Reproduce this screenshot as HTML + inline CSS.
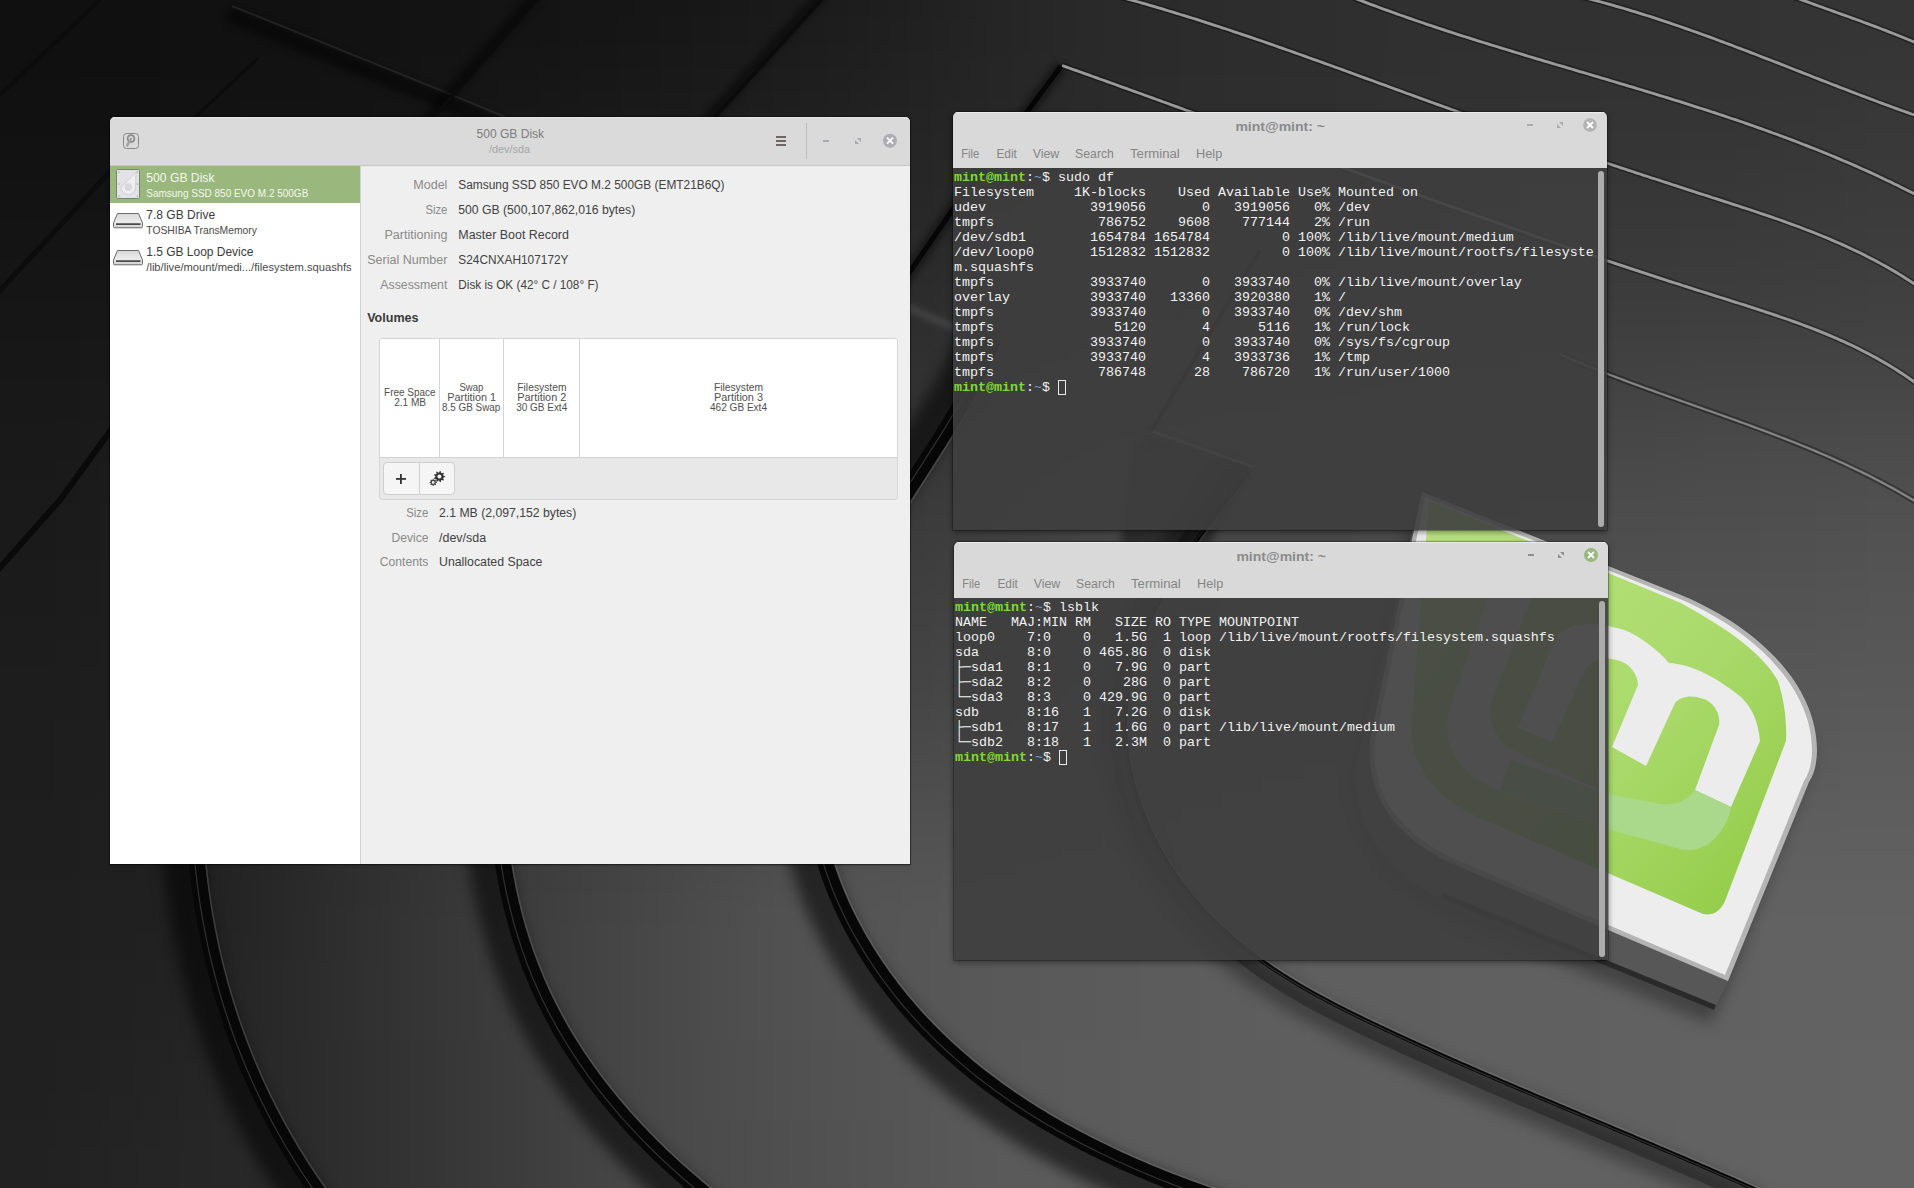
<!DOCTYPE html>
<html><head><meta charset="utf-8">
<style>
*{margin:0;padding:0;box-sizing:border-box}
html,body{width:1914px;height:1188px;overflow:hidden;background:#2a2a2a}
body{position:relative;font-family:"Liberation Sans",sans-serif}
svg{position:absolute;left:0;top:0}
.r{position:absolute}
#disks{left:110px;top:117px;width:800px;height:747px;background:#efefef;border-radius:5px 5px 0 0;overflow:hidden;box-shadow:0 0 0 1px rgba(0,0,0,.35),0 1px 3px rgba(0,0,0,.35)}
#disks .tb{left:0;top:0;width:800px;height:49px;background:#dadada;border-bottom:1px solid #c4c4c4;border-top:1px solid #e6e6e6}
#disks .side{left:0;top:49px;width:251px;height:698px;background:#fff;border-right:1px solid #d2d2d2}
#disks .sel{left:0;top:49px;width:250px;height:37px;background:#9ab87d}
#disks .vol{left:269px;top:221px;width:519px;height:162px;border:1px solid #d6d6d6;border-radius:3px;background:#e8e8e8;overflow:hidden}
#disks .volw{left:0;top:0;width:517px;height:119px;background:#fff;border-bottom:1px solid #d2d2d2}
.sep{position:absolute;top:0;width:1px;height:119px;background:#d4d4d4}
#disks .btns{left:273px;top:345px;width:72px;height:33px;border:1px solid #cfcfcf;border-radius:4px;background:#f5f5f5}
.term{position:absolute;width:654px;height:418px;border-radius:5px 5px 0 0;overflow:hidden;box-shadow:0 0 0 1px rgba(0,0,0,.25),0 2px 6px rgba(0,0,0,.45)}
.term .hd{position:absolute;left:0;top:0;width:654px;height:56px;background:#d9d9d9;border-top:1px solid #ececec}
.term .bd{position:absolute;left:0;top:56px;width:654px;height:362px;background:rgba(63,63,63,.91)}
.term pre{position:absolute;left:1px;top:58px;font-family:"Liberation Mono",monospace;font-size:13.333px;line-height:15px;color:#f2f2f2}
.g{color:#80d83a;font-weight:bold}
.bl{color:#729fcf}
.cur{outline:1px solid #eaeaea;outline-offset:-1px}
.sb{position:absolute;left:645px;top:59px;width:6px;height:356px;border-radius:3px;background:#acacac}
</style></head><body>
<svg width="1914" height="1188" viewBox="0 0 1914 1188">
<defs>
<filter id="blur" color-interpolation-filters="sRGB" filterUnits="userSpaceOnUse" x="-300" y="-300" width="2600" height="1800"><feGaussianBlur stdDeviation="40"/></filter>
<filter id="sh8" color-interpolation-filters="sRGB" filterUnits="userSpaceOnUse" x="-300" y="-300" width="2600" height="1800"><feGaussianBlur stdDeviation="7"/></filter>
<filter id="sh3" color-interpolation-filters="sRGB" filterUnits="userSpaceOnUse" x="-300" y="-300" width="2600" height="1800"><feGaussianBlur stdDeviation="3"/></filter>
<linearGradient id="lg1" x1="0" y1="0" x2="1" y2="1"><stop offset="0" stop-color="#bde583"/><stop offset="0.6" stop-color="#a9d96a"/><stop offset="1" stop-color="#8fca42"/></linearGradient>
</defs>
<g filter="url(#blur)"><rect x="-160" y="-160" width="81" height="81" fill="rgb(15,15,15)"/><rect x="-80" y="-160" width="81" height="81" fill="rgb(15,15,15)"/><rect x="0" y="-160" width="81" height="81" fill="rgb(15,15,15)"/><rect x="80" y="-160" width="81" height="81" fill="rgb(16,16,16)"/><rect x="160" y="-160" width="81" height="81" fill="rgb(16,16,16)"/><rect x="240" y="-160" width="81" height="81" fill="rgb(16,16,16)"/><rect x="320" y="-160" width="81" height="81" fill="rgb(17,17,17)"/><rect x="400" y="-160" width="81" height="81" fill="rgb(18,18,18)"/><rect x="480" y="-160" width="81" height="81" fill="rgb(19,19,19)"/><rect x="560" y="-160" width="81" height="81" fill="rgb(20,20,20)"/><rect x="640" y="-160" width="81" height="81" fill="rgb(21,21,21)"/><rect x="720" y="-160" width="81" height="81" fill="rgb(24,24,24)"/><rect x="800" y="-160" width="81" height="81" fill="rgb(27,27,27)"/><rect x="880" y="-160" width="81" height="81" fill="rgb(31,31,31)"/><rect x="960" y="-160" width="81" height="81" fill="rgb(36,36,36)"/><rect x="1040" y="-160" width="81" height="81" fill="rgb(41,41,41)"/><rect x="1120" y="-160" width="81" height="81" fill="rgb(43,43,43)"/><rect x="1200" y="-160" width="81" height="81" fill="rgb(44,44,44)"/><rect x="1280" y="-160" width="81" height="81" fill="rgb(46,46,46)"/><rect x="1360" y="-160" width="81" height="81" fill="rgb(47,47,47)"/><rect x="1440" y="-160" width="81" height="81" fill="rgb(48,48,48)"/><rect x="1520" y="-160" width="81" height="81" fill="rgb(49,49,49)"/><rect x="1600" y="-160" width="81" height="81" fill="rgb(49,49,49)"/><rect x="1680" y="-160" width="81" height="81" fill="rgb(50,50,50)"/><rect x="1760" y="-160" width="81" height="81" fill="rgb(51,51,51)"/><rect x="1840" y="-160" width="81" height="81" fill="rgb(52,52,52)"/><rect x="1920" y="-160" width="81" height="81" fill="rgb(52,52,52)"/><rect x="2000" y="-160" width="81" height="81" fill="rgb(52,52,52)"/><rect x="-160" y="-80" width="81" height="81" fill="rgb(15,15,15)"/><rect x="-80" y="-80" width="81" height="81" fill="rgb(15,15,15)"/><rect x="0" y="-80" width="81" height="81" fill="rgb(15,15,15)"/><rect x="80" y="-80" width="81" height="81" fill="rgb(16,16,16)"/><rect x="160" y="-80" width="81" height="81" fill="rgb(16,16,16)"/><rect x="240" y="-80" width="81" height="81" fill="rgb(16,16,16)"/><rect x="320" y="-80" width="81" height="81" fill="rgb(17,17,17)"/><rect x="400" y="-80" width="81" height="81" fill="rgb(18,18,18)"/><rect x="480" y="-80" width="81" height="81" fill="rgb(19,19,19)"/><rect x="560" y="-80" width="81" height="81" fill="rgb(20,20,20)"/><rect x="640" y="-80" width="81" height="81" fill="rgb(21,21,21)"/><rect x="720" y="-80" width="81" height="81" fill="rgb(24,24,24)"/><rect x="800" y="-80" width="81" height="81" fill="rgb(27,27,27)"/><rect x="880" y="-80" width="81" height="81" fill="rgb(31,31,31)"/><rect x="960" y="-80" width="81" height="81" fill="rgb(36,36,36)"/><rect x="1040" y="-80" width="81" height="81" fill="rgb(41,41,41)"/><rect x="1120" y="-80" width="81" height="81" fill="rgb(43,43,43)"/><rect x="1200" y="-80" width="81" height="81" fill="rgb(44,44,44)"/><rect x="1280" y="-80" width="81" height="81" fill="rgb(46,46,46)"/><rect x="1360" y="-80" width="81" height="81" fill="rgb(47,47,47)"/><rect x="1440" y="-80" width="81" height="81" fill="rgb(48,48,48)"/><rect x="1520" y="-80" width="81" height="81" fill="rgb(49,49,49)"/><rect x="1600" y="-80" width="81" height="81" fill="rgb(49,49,49)"/><rect x="1680" y="-80" width="81" height="81" fill="rgb(50,50,50)"/><rect x="1760" y="-80" width="81" height="81" fill="rgb(51,51,51)"/><rect x="1840" y="-80" width="81" height="81" fill="rgb(52,52,52)"/><rect x="1920" y="-80" width="81" height="81" fill="rgb(52,52,52)"/><rect x="2000" y="-80" width="81" height="81" fill="rgb(52,52,52)"/><rect x="-160" y="0" width="81" height="81" fill="rgb(16,16,16)"/><rect x="-80" y="0" width="81" height="81" fill="rgb(16,16,16)"/><rect x="0" y="0" width="81" height="81" fill="rgb(16,16,16)"/><rect x="80" y="0" width="81" height="81" fill="rgb(16,16,16)"/><rect x="160" y="0" width="81" height="81" fill="rgb(17,17,17)"/><rect x="240" y="0" width="81" height="81" fill="rgb(17,17,17)"/><rect x="320" y="0" width="81" height="81" fill="rgb(18,18,18)"/><rect x="400" y="0" width="81" height="81" fill="rgb(19,19,19)"/><rect x="480" y="0" width="81" height="81" fill="rgb(20,20,20)"/><rect x="560" y="0" width="81" height="81" fill="rgb(21,21,21)"/><rect x="640" y="0" width="81" height="81" fill="rgb(23,23,23)"/><rect x="720" y="0" width="81" height="81" fill="rgb(26,26,26)"/><rect x="800" y="0" width="81" height="81" fill="rgb(29,29,29)"/><rect x="880" y="0" width="81" height="81" fill="rgb(33,33,33)"/><rect x="960" y="0" width="81" height="81" fill="rgb(37,37,37)"/><rect x="1040" y="0" width="81" height="81" fill="rgb(41,41,41)"/><rect x="1120" y="0" width="81" height="81" fill="rgb(43,43,43)"/><rect x="1200" y="0" width="81" height="81" fill="rgb(45,45,45)"/><rect x="1280" y="0" width="81" height="81" fill="rgb(46,46,46)"/><rect x="1360" y="0" width="81" height="81" fill="rgb(48,48,48)"/><rect x="1440" y="0" width="81" height="81" fill="rgb(48,48,48)"/><rect x="1520" y="0" width="81" height="81" fill="rgb(49,49,49)"/><rect x="1600" y="0" width="81" height="81" fill="rgb(50,50,50)"/><rect x="1680" y="0" width="81" height="81" fill="rgb(51,51,51)"/><rect x="1760" y="0" width="81" height="81" fill="rgb(52,52,52)"/><rect x="1840" y="0" width="81" height="81" fill="rgb(53,53,53)"/><rect x="1920" y="0" width="81" height="81" fill="rgb(53,53,53)"/><rect x="2000" y="0" width="81" height="81" fill="rgb(53,53,53)"/><rect x="-160" y="80" width="81" height="81" fill="rgb(17,17,17)"/><rect x="-80" y="80" width="81" height="81" fill="rgb(17,17,17)"/><rect x="0" y="80" width="81" height="81" fill="rgb(17,17,17)"/><rect x="80" y="80" width="81" height="81" fill="rgb(17,17,17)"/><rect x="160" y="80" width="81" height="81" fill="rgb(18,18,18)"/><rect x="240" y="80" width="81" height="81" fill="rgb(19,19,19)"/><rect x="320" y="80" width="81" height="81" fill="rgb(19,19,19)"/><rect x="400" y="80" width="81" height="81" fill="rgb(21,21,21)"/><rect x="480" y="80" width="81" height="81" fill="rgb(23,23,23)"/><rect x="560" y="80" width="81" height="81" fill="rgb(25,25,25)"/><rect x="640" y="80" width="81" height="81" fill="rgb(27,27,27)"/><rect x="720" y="80" width="81" height="81" fill="rgb(30,30,30)"/><rect x="800" y="80" width="81" height="81" fill="rgb(33,33,33)"/><rect x="880" y="80" width="81" height="81" fill="rgb(36,36,36)"/><rect x="960" y="80" width="81" height="81" fill="rgb(39,39,39)"/><rect x="1040" y="80" width="81" height="81" fill="rgb(42,42,42)"/><rect x="1120" y="80" width="81" height="81" fill="rgb(44,44,44)"/><rect x="1200" y="80" width="81" height="81" fill="rgb(46,46,46)"/><rect x="1280" y="80" width="81" height="81" fill="rgb(47,47,47)"/><rect x="1360" y="80" width="81" height="81" fill="rgb(49,49,49)"/><rect x="1440" y="80" width="81" height="81" fill="rgb(50,50,50)"/><rect x="1520" y="80" width="81" height="81" fill="rgb(51,51,51)"/><rect x="1600" y="80" width="81" height="81" fill="rgb(52,52,52)"/><rect x="1680" y="80" width="81" height="81" fill="rgb(53,53,53)"/><rect x="1760" y="80" width="81" height="81" fill="rgb(54,54,54)"/><rect x="1840" y="80" width="81" height="81" fill="rgb(56,56,56)"/><rect x="1920" y="80" width="81" height="81" fill="rgb(56,56,56)"/><rect x="2000" y="80" width="81" height="81" fill="rgb(56,56,56)"/><rect x="-160" y="160" width="81" height="81" fill="rgb(18,18,18)"/><rect x="-80" y="160" width="81" height="81" fill="rgb(18,18,18)"/><rect x="0" y="160" width="81" height="81" fill="rgb(19,19,19)"/><rect x="80" y="160" width="81" height="81" fill="rgb(19,19,19)"/><rect x="160" y="160" width="81" height="81" fill="rgb(20,20,20)"/><rect x="240" y="160" width="81" height="81" fill="rgb(21,21,21)"/><rect x="320" y="160" width="81" height="81" fill="rgb(22,22,22)"/><rect x="400" y="160" width="81" height="81" fill="rgb(23,23,23)"/><rect x="480" y="160" width="81" height="81" fill="rgb(26,26,26)"/><rect x="560" y="160" width="81" height="81" fill="rgb(29,29,29)"/><rect x="640" y="160" width="81" height="81" fill="rgb(31,31,31)"/><rect x="720" y="160" width="81" height="81" fill="rgb(34,34,34)"/><rect x="800" y="160" width="81" height="81" fill="rgb(36,36,36)"/><rect x="880" y="160" width="81" height="81" fill="rgb(39,39,39)"/><rect x="960" y="160" width="81" height="81" fill="rgb(42,42,42)"/><rect x="1040" y="160" width="81" height="81" fill="rgb(44,44,44)"/><rect x="1120" y="160" width="81" height="81" fill="rgb(47,47,47)"/><rect x="1200" y="160" width="81" height="81" fill="rgb(49,49,49)"/><rect x="1280" y="160" width="81" height="81" fill="rgb(50,50,50)"/><rect x="1360" y="160" width="81" height="81" fill="rgb(52,52,52)"/><rect x="1440" y="160" width="81" height="81" fill="rgb(53,53,53)"/><rect x="1520" y="160" width="81" height="81" fill="rgb(54,54,54)"/><rect x="1600" y="160" width="81" height="81" fill="rgb(55,55,55)"/><rect x="1680" y="160" width="81" height="81" fill="rgb(56,56,56)"/><rect x="1760" y="160" width="81" height="81" fill="rgb(58,58,58)"/><rect x="1840" y="160" width="81" height="81" fill="rgb(59,59,59)"/><rect x="1920" y="160" width="81" height="81" fill="rgb(59,59,59)"/><rect x="2000" y="160" width="81" height="81" fill="rgb(59,59,59)"/><rect x="-160" y="240" width="81" height="81" fill="rgb(20,20,20)"/><rect x="-80" y="240" width="81" height="81" fill="rgb(20,20,20)"/><rect x="0" y="240" width="81" height="81" fill="rgb(21,21,21)"/><rect x="80" y="240" width="81" height="81" fill="rgb(22,22,22)"/><rect x="160" y="240" width="81" height="81" fill="rgb(23,23,23)"/><rect x="240" y="240" width="81" height="81" fill="rgb(24,24,24)"/><rect x="320" y="240" width="81" height="81" fill="rgb(25,25,25)"/><rect x="400" y="240" width="81" height="81" fill="rgb(27,27,27)"/><rect x="480" y="240" width="81" height="81" fill="rgb(29,29,29)"/><rect x="560" y="240" width="81" height="81" fill="rgb(32,32,32)"/><rect x="640" y="240" width="81" height="81" fill="rgb(35,35,35)"/><rect x="720" y="240" width="81" height="81" fill="rgb(37,37,37)"/><rect x="800" y="240" width="81" height="81" fill="rgb(40,40,40)"/><rect x="880" y="240" width="81" height="81" fill="rgb(43,43,43)"/><rect x="960" y="240" width="81" height="81" fill="rgb(45,45,45)"/><rect x="1040" y="240" width="81" height="81" fill="rgb(48,48,48)"/><rect x="1120" y="240" width="81" height="81" fill="rgb(50,50,50)"/><rect x="1200" y="240" width="81" height="81" fill="rgb(52,52,52)"/><rect x="1280" y="240" width="81" height="81" fill="rgb(54,54,54)"/><rect x="1360" y="240" width="81" height="81" fill="rgb(55,55,55)"/><rect x="1440" y="240" width="81" height="81" fill="rgb(57,57,57)"/><rect x="1520" y="240" width="81" height="81" fill="rgb(58,58,58)"/><rect x="1600" y="240" width="81" height="81" fill="rgb(59,59,59)"/><rect x="1680" y="240" width="81" height="81" fill="rgb(60,60,60)"/><rect x="1760" y="240" width="81" height="81" fill="rgb(61,61,61)"/><rect x="1840" y="240" width="81" height="81" fill="rgb(63,63,63)"/><rect x="1920" y="240" width="81" height="81" fill="rgb(63,63,63)"/><rect x="2000" y="240" width="81" height="81" fill="rgb(63,63,63)"/><rect x="-160" y="320" width="81" height="81" fill="rgb(22,22,22)"/><rect x="-80" y="320" width="81" height="81" fill="rgb(22,22,22)"/><rect x="0" y="320" width="81" height="81" fill="rgb(23,23,23)"/><rect x="80" y="320" width="81" height="81" fill="rgb(24,24,24)"/><rect x="160" y="320" width="81" height="81" fill="rgb(25,25,25)"/><rect x="240" y="320" width="81" height="81" fill="rgb(27,27,27)"/><rect x="320" y="320" width="81" height="81" fill="rgb(28,28,28)"/><rect x="400" y="320" width="81" height="81" fill="rgb(30,30,30)"/><rect x="480" y="320" width="81" height="81" fill="rgb(33,33,33)"/><rect x="560" y="320" width="81" height="81" fill="rgb(36,36,36)"/><rect x="640" y="320" width="81" height="81" fill="rgb(39,39,39)"/><rect x="720" y="320" width="81" height="81" fill="rgb(42,42,42)"/><rect x="800" y="320" width="81" height="81" fill="rgb(45,45,45)"/><rect x="880" y="320" width="81" height="81" fill="rgb(48,48,48)"/><rect x="960" y="320" width="81" height="81" fill="rgb(51,51,51)"/><rect x="1040" y="320" width="81" height="81" fill="rgb(54,54,54)"/><rect x="1120" y="320" width="81" height="81" fill="rgb(57,57,57)"/><rect x="1200" y="320" width="81" height="81" fill="rgb(59,59,59)"/><rect x="1280" y="320" width="81" height="81" fill="rgb(60,60,60)"/><rect x="1360" y="320" width="81" height="81" fill="rgb(62,62,62)"/><rect x="1440" y="320" width="81" height="81" fill="rgb(63,63,63)"/><rect x="1520" y="320" width="81" height="81" fill="rgb(64,64,64)"/><rect x="1600" y="320" width="81" height="81" fill="rgb(65,65,65)"/><rect x="1680" y="320" width="81" height="81" fill="rgb(66,66,66)"/><rect x="1760" y="320" width="81" height="81" fill="rgb(67,67,67)"/><rect x="1840" y="320" width="81" height="81" fill="rgb(68,68,68)"/><rect x="1920" y="320" width="81" height="81" fill="rgb(69,69,69)"/><rect x="2000" y="320" width="81" height="81" fill="rgb(69,69,69)"/><rect x="-160" y="400" width="81" height="81" fill="rgb(24,24,24)"/><rect x="-80" y="400" width="81" height="81" fill="rgb(24,24,24)"/><rect x="0" y="400" width="81" height="81" fill="rgb(25,25,25)"/><rect x="80" y="400" width="81" height="81" fill="rgb(26,26,26)"/><rect x="160" y="400" width="81" height="81" fill="rgb(28,28,28)"/><rect x="240" y="400" width="81" height="81" fill="rgb(29,29,29)"/><rect x="320" y="400" width="81" height="81" fill="rgb(31,31,31)"/><rect x="400" y="400" width="81" height="81" fill="rgb(33,33,33)"/><rect x="480" y="400" width="81" height="81" fill="rgb(37,37,37)"/><rect x="560" y="400" width="81" height="81" fill="rgb(40,40,40)"/><rect x="640" y="400" width="81" height="81" fill="rgb(43,43,43)"/><rect x="720" y="400" width="81" height="81" fill="rgb(47,47,47)"/><rect x="800" y="400" width="81" height="81" fill="rgb(50,50,50)"/><rect x="880" y="400" width="81" height="81" fill="rgb(53,53,53)"/><rect x="960" y="400" width="81" height="81" fill="rgb(58,58,58)"/><rect x="1040" y="400" width="81" height="81" fill="rgb(63,63,63)"/><rect x="1120" y="400" width="81" height="81" fill="rgb(65,65,65)"/><rect x="1200" y="400" width="81" height="81" fill="rgb(66,66,66)"/><rect x="1280" y="400" width="81" height="81" fill="rgb(67,67,67)"/><rect x="1360" y="400" width="81" height="81" fill="rgb(68,68,68)"/><rect x="1440" y="400" width="81" height="81" fill="rgb(69,69,69)"/><rect x="1520" y="400" width="81" height="81" fill="rgb(70,70,70)"/><rect x="1600" y="400" width="81" height="81" fill="rgb(71,71,71)"/><rect x="1680" y="400" width="81" height="81" fill="rgb(73,73,73)"/><rect x="1760" y="400" width="81" height="81" fill="rgb(74,74,74)"/><rect x="1840" y="400" width="81" height="81" fill="rgb(75,75,75)"/><rect x="1920" y="400" width="81" height="81" fill="rgb(75,75,75)"/><rect x="2000" y="400" width="81" height="81" fill="rgb(75,75,75)"/><rect x="-160" y="480" width="81" height="81" fill="rgb(25,25,25)"/><rect x="-80" y="480" width="81" height="81" fill="rgb(25,25,25)"/><rect x="0" y="480" width="81" height="81" fill="rgb(26,26,26)"/><rect x="80" y="480" width="81" height="81" fill="rgb(28,28,28)"/><rect x="160" y="480" width="81" height="81" fill="rgb(30,30,30)"/><rect x="240" y="480" width="81" height="81" fill="rgb(32,32,32)"/><rect x="320" y="480" width="81" height="81" fill="rgb(34,34,34)"/><rect x="400" y="480" width="81" height="81" fill="rgb(37,37,37)"/><rect x="480" y="480" width="81" height="81" fill="rgb(41,41,41)"/><rect x="560" y="480" width="81" height="81" fill="rgb(44,44,44)"/><rect x="640" y="480" width="81" height="81" fill="rgb(48,48,48)"/><rect x="720" y="480" width="81" height="81" fill="rgb(51,51,51)"/><rect x="800" y="480" width="81" height="81" fill="rgb(55,55,55)"/><rect x="880" y="480" width="81" height="81" fill="rgb(59,59,59)"/><rect x="960" y="480" width="81" height="81" fill="rgb(64,64,64)"/><rect x="1040" y="480" width="81" height="81" fill="rgb(69,69,69)"/><rect x="1120" y="480" width="81" height="81" fill="rgb(71,71,71)"/><rect x="1200" y="480" width="81" height="81" fill="rgb(72,72,72)"/><rect x="1280" y="480" width="81" height="81" fill="rgb(73,73,73)"/><rect x="1360" y="480" width="81" height="81" fill="rgb(74,74,74)"/><rect x="1440" y="480" width="81" height="81" fill="rgb(75,75,75)"/><rect x="1520" y="480" width="81" height="81" fill="rgb(76,76,76)"/><rect x="1600" y="480" width="81" height="81" fill="rgb(77,77,77)"/><rect x="1680" y="480" width="81" height="81" fill="rgb(78,78,78)"/><rect x="1760" y="480" width="81" height="81" fill="rgb(79,79,79)"/><rect x="1840" y="480" width="81" height="81" fill="rgb(81,81,81)"/><rect x="1920" y="480" width="81" height="81" fill="rgb(81,81,81)"/><rect x="2000" y="480" width="81" height="81" fill="rgb(81,81,81)"/><rect x="-160" y="560" width="81" height="81" fill="rgb(26,26,26)"/><rect x="-80" y="560" width="81" height="81" fill="rgb(26,26,26)"/><rect x="0" y="560" width="81" height="81" fill="rgb(27,27,27)"/><rect x="80" y="560" width="81" height="81" fill="rgb(29,29,29)"/><rect x="160" y="560" width="81" height="81" fill="rgb(31,31,31)"/><rect x="240" y="560" width="81" height="81" fill="rgb(34,34,34)"/><rect x="320" y="560" width="81" height="81" fill="rgb(37,37,37)"/><rect x="400" y="560" width="81" height="81" fill="rgb(41,41,41)"/><rect x="480" y="560" width="81" height="81" fill="rgb(45,45,45)"/><rect x="560" y="560" width="81" height="81" fill="rgb(49,49,49)"/><rect x="640" y="560" width="81" height="81" fill="rgb(53,53,53)"/><rect x="720" y="560" width="81" height="81" fill="rgb(56,56,56)"/><rect x="800" y="560" width="81" height="81" fill="rgb(60,60,60)"/><rect x="880" y="560" width="81" height="81" fill="rgb(64,64,64)"/><rect x="960" y="560" width="81" height="81" fill="rgb(67,67,67)"/><rect x="1040" y="560" width="81" height="81" fill="rgb(71,71,71)"/><rect x="1120" y="560" width="81" height="81" fill="rgb(73,73,73)"/><rect x="1200" y="560" width="81" height="81" fill="rgb(75,75,75)"/><rect x="1280" y="560" width="81" height="81" fill="rgb(76,76,76)"/><rect x="1360" y="560" width="81" height="81" fill="rgb(77,77,77)"/><rect x="1440" y="560" width="81" height="81" fill="rgb(79,79,79)"/><rect x="1520" y="560" width="81" height="81" fill="rgb(80,80,80)"/><rect x="1600" y="560" width="81" height="81" fill="rgb(81,81,81)"/><rect x="1680" y="560" width="81" height="81" fill="rgb(82,82,82)"/><rect x="1760" y="560" width="81" height="81" fill="rgb(83,83,83)"/><rect x="1840" y="560" width="81" height="81" fill="rgb(85,85,85)"/><rect x="1920" y="560" width="81" height="81" fill="rgb(85,85,85)"/><rect x="2000" y="560" width="81" height="81" fill="rgb(85,85,85)"/><rect x="-160" y="640" width="81" height="81" fill="rgb(28,28,28)"/><rect x="-80" y="640" width="81" height="81" fill="rgb(28,28,28)"/><rect x="0" y="640" width="81" height="81" fill="rgb(29,29,29)"/><rect x="80" y="640" width="81" height="81" fill="rgb(30,30,30)"/><rect x="160" y="640" width="81" height="81" fill="rgb(32,32,32)"/><rect x="240" y="640" width="81" height="81" fill="rgb(36,36,36)"/><rect x="320" y="640" width="81" height="81" fill="rgb(41,41,41)"/><rect x="400" y="640" width="81" height="81" fill="rgb(45,45,45)"/><rect x="480" y="640" width="81" height="81" fill="rgb(50,50,50)"/><rect x="560" y="640" width="81" height="81" fill="rgb(53,53,53)"/><rect x="640" y="640" width="81" height="81" fill="rgb(57,57,57)"/><rect x="720" y="640" width="81" height="81" fill="rgb(61,61,61)"/><rect x="800" y="640" width="81" height="81" fill="rgb(65,65,65)"/><rect x="880" y="640" width="81" height="81" fill="rgb(68,68,68)"/><rect x="960" y="640" width="81" height="81" fill="rgb(71,71,71)"/><rect x="1040" y="640" width="81" height="81" fill="rgb(74,74,74)"/><rect x="1120" y="640" width="81" height="81" fill="rgb(76,76,76)"/><rect x="1200" y="640" width="81" height="81" fill="rgb(78,78,78)"/><rect x="1280" y="640" width="81" height="81" fill="rgb(80,80,80)"/><rect x="1360" y="640" width="81" height="81" fill="rgb(81,81,81)"/><rect x="1440" y="640" width="81" height="81" fill="rgb(82,82,82)"/><rect x="1520" y="640" width="81" height="81" fill="rgb(83,83,83)"/><rect x="1600" y="640" width="81" height="81" fill="rgb(85,85,85)"/><rect x="1680" y="640" width="81" height="81" fill="rgb(86,86,86)"/><rect x="1760" y="640" width="81" height="81" fill="rgb(87,87,87)"/><rect x="1840" y="640" width="81" height="81" fill="rgb(88,88,88)"/><rect x="1920" y="640" width="81" height="81" fill="rgb(89,89,89)"/><rect x="2000" y="640" width="81" height="81" fill="rgb(89,89,89)"/><rect x="-160" y="720" width="81" height="81" fill="rgb(29,29,29)"/><rect x="-80" y="720" width="81" height="81" fill="rgb(29,29,29)"/><rect x="0" y="720" width="81" height="81" fill="rgb(29,29,29)"/><rect x="80" y="720" width="81" height="81" fill="rgb(31,31,31)"/><rect x="160" y="720" width="81" height="81" fill="rgb(32,32,32)"/><rect x="240" y="720" width="81" height="81" fill="rgb(38,38,38)"/><rect x="320" y="720" width="81" height="81" fill="rgb(43,43,43)"/><rect x="400" y="720" width="81" height="81" fill="rgb(49,49,49)"/><rect x="480" y="720" width="81" height="81" fill="rgb(54,54,54)"/><rect x="560" y="720" width="81" height="81" fill="rgb(59,59,59)"/><rect x="640" y="720" width="81" height="81" fill="rgb(63,63,63)"/><rect x="720" y="720" width="81" height="81" fill="rgb(68,68,68)"/><rect x="800" y="720" width="81" height="81" fill="rgb(72,72,72)"/><rect x="880" y="720" width="81" height="81" fill="rgb(75,75,75)"/><rect x="960" y="720" width="81" height="81" fill="rgb(77,77,77)"/><rect x="1040" y="720" width="81" height="81" fill="rgb(79,79,79)"/><rect x="1120" y="720" width="81" height="81" fill="rgb(81,81,81)"/><rect x="1200" y="720" width="81" height="81" fill="rgb(83,83,83)"/><rect x="1280" y="720" width="81" height="81" fill="rgb(85,85,85)"/><rect x="1360" y="720" width="81" height="81" fill="rgb(86,86,86)"/><rect x="1440" y="720" width="81" height="81" fill="rgb(87,87,87)"/><rect x="1520" y="720" width="81" height="81" fill="rgb(88,88,88)"/><rect x="1600" y="720" width="81" height="81" fill="rgb(89,89,89)"/><rect x="1680" y="720" width="81" height="81" fill="rgb(90,90,90)"/><rect x="1760" y="720" width="81" height="81" fill="rgb(91,91,91)"/><rect x="1840" y="720" width="81" height="81" fill="rgb(92,92,92)"/><rect x="1920" y="720" width="81" height="81" fill="rgb(92,92,92)"/><rect x="2000" y="720" width="81" height="81" fill="rgb(92,92,92)"/><rect x="-160" y="800" width="81" height="81" fill="rgb(29,29,29)"/><rect x="-80" y="800" width="81" height="81" fill="rgb(29,29,29)"/><rect x="0" y="800" width="81" height="81" fill="rgb(30,30,30)"/><rect x="80" y="800" width="81" height="81" fill="rgb(31,31,31)"/><rect x="160" y="800" width="81" height="81" fill="rgb(33,33,33)"/><rect x="240" y="800" width="81" height="81" fill="rgb(39,39,39)"/><rect x="320" y="800" width="81" height="81" fill="rgb(46,46,46)"/><rect x="400" y="800" width="81" height="81" fill="rgb(52,52,52)"/><rect x="480" y="800" width="81" height="81" fill="rgb(58,58,58)"/><rect x="560" y="800" width="81" height="81" fill="rgb(64,64,64)"/><rect x="640" y="800" width="81" height="81" fill="rgb(70,70,70)"/><rect x="720" y="800" width="81" height="81" fill="rgb(75,75,75)"/><rect x="800" y="800" width="81" height="81" fill="rgb(79,79,79)"/><rect x="880" y="800" width="81" height="81" fill="rgb(82,82,82)"/><rect x="960" y="800" width="81" height="81" fill="rgb(83,83,83)"/><rect x="1040" y="800" width="81" height="81" fill="rgb(85,85,85)"/><rect x="1120" y="800" width="81" height="81" fill="rgb(87,87,87)"/><rect x="1200" y="800" width="81" height="81" fill="rgb(89,89,89)"/><rect x="1280" y="800" width="81" height="81" fill="rgb(91,91,91)"/><rect x="1360" y="800" width="81" height="81" fill="rgb(91,91,91)"/><rect x="1440" y="800" width="81" height="81" fill="rgb(92,92,92)"/><rect x="1520" y="800" width="81" height="81" fill="rgb(93,93,93)"/><rect x="1600" y="800" width="81" height="81" fill="rgb(93,93,93)"/><rect x="1680" y="800" width="81" height="81" fill="rgb(94,94,94)"/><rect x="1760" y="800" width="81" height="81" fill="rgb(95,95,95)"/><rect x="1840" y="800" width="81" height="81" fill="rgb(95,95,95)"/><rect x="1920" y="800" width="81" height="81" fill="rgb(96,96,96)"/><rect x="2000" y="800" width="81" height="81" fill="rgb(96,96,96)"/><rect x="-160" y="880" width="81" height="81" fill="rgb(30,30,30)"/><rect x="-80" y="880" width="81" height="81" fill="rgb(30,30,30)"/><rect x="0" y="880" width="81" height="81" fill="rgb(31,31,31)"/><rect x="80" y="880" width="81" height="81" fill="rgb(32,32,32)"/><rect x="160" y="880" width="81" height="81" fill="rgb(33,33,33)"/><rect x="240" y="880" width="81" height="81" fill="rgb(40,40,40)"/><rect x="320" y="880" width="81" height="81" fill="rgb(48,48,48)"/><rect x="400" y="880" width="81" height="81" fill="rgb(55,55,55)"/><rect x="480" y="880" width="81" height="81" fill="rgb(62,62,62)"/><rect x="560" y="880" width="81" height="81" fill="rgb(68,68,68)"/><rect x="640" y="880" width="81" height="81" fill="rgb(74,74,74)"/><rect x="720" y="880" width="81" height="81" fill="rgb(81,81,81)"/><rect x="800" y="880" width="81" height="81" fill="rgb(85,85,85)"/><rect x="880" y="880" width="81" height="81" fill="rgb(87,87,87)"/><rect x="960" y="880" width="81" height="81" fill="rgb(89,89,89)"/><rect x="1040" y="880" width="81" height="81" fill="rgb(90,90,90)"/><rect x="1120" y="880" width="81" height="81" fill="rgb(92,92,92)"/><rect x="1200" y="880" width="81" height="81" fill="rgb(94,94,94)"/><rect x="1280" y="880" width="81" height="81" fill="rgb(95,95,95)"/><rect x="1360" y="880" width="81" height="81" fill="rgb(95,95,95)"/><rect x="1440" y="880" width="81" height="81" fill="rgb(96,96,96)"/><rect x="1520" y="880" width="81" height="81" fill="rgb(96,96,96)"/><rect x="1600" y="880" width="81" height="81" fill="rgb(97,97,97)"/><rect x="1680" y="880" width="81" height="81" fill="rgb(97,97,97)"/><rect x="1760" y="880" width="81" height="81" fill="rgb(98,98,98)"/><rect x="1840" y="880" width="81" height="81" fill="rgb(98,98,98)"/><rect x="1920" y="880" width="81" height="81" fill="rgb(98,98,98)"/><rect x="2000" y="880" width="81" height="81" fill="rgb(98,98,98)"/><rect x="-160" y="960" width="81" height="81" fill="rgb(31,31,31)"/><rect x="-80" y="960" width="81" height="81" fill="rgb(31,31,31)"/><rect x="0" y="960" width="81" height="81" fill="rgb(32,32,32)"/><rect x="80" y="960" width="81" height="81" fill="rgb(33,33,33)"/><rect x="160" y="960" width="81" height="81" fill="rgb(35,35,35)"/><rect x="240" y="960" width="81" height="81" fill="rgb(41,41,41)"/><rect x="320" y="960" width="81" height="81" fill="rgb(48,48,48)"/><rect x="400" y="960" width="81" height="81" fill="rgb(55,55,55)"/><rect x="480" y="960" width="81" height="81" fill="rgb(61,61,61)"/><rect x="560" y="960" width="81" height="81" fill="rgb(68,68,68)"/><rect x="640" y="960" width="81" height="81" fill="rgb(74,74,74)"/><rect x="720" y="960" width="81" height="81" fill="rgb(80,80,80)"/><rect x="800" y="960" width="81" height="81" fill="rgb(84,84,84)"/><rect x="880" y="960" width="81" height="81" fill="rgb(86,86,86)"/><rect x="960" y="960" width="81" height="81" fill="rgb(89,89,89)"/><rect x="1040" y="960" width="81" height="81" fill="rgb(90,90,90)"/><rect x="1120" y="960" width="81" height="81" fill="rgb(92,92,92)"/><rect x="1200" y="960" width="81" height="81" fill="rgb(93,93,93)"/><rect x="1280" y="960" width="81" height="81" fill="rgb(95,95,95)"/><rect x="1360" y="960" width="81" height="81" fill="rgb(95,95,95)"/><rect x="1440" y="960" width="81" height="81" fill="rgb(96,96,96)"/><rect x="1520" y="960" width="81" height="81" fill="rgb(96,96,96)"/><rect x="1600" y="960" width="81" height="81" fill="rgb(97,97,97)"/><rect x="1680" y="960" width="81" height="81" fill="rgb(97,97,97)"/><rect x="1760" y="960" width="81" height="81" fill="rgb(98,98,98)"/><rect x="1840" y="960" width="81" height="81" fill="rgb(98,98,98)"/><rect x="1920" y="960" width="81" height="81" fill="rgb(99,99,99)"/><rect x="2000" y="960" width="81" height="81" fill="rgb(99,99,99)"/><rect x="-160" y="1040" width="81" height="81" fill="rgb(31,31,31)"/><rect x="-80" y="1040" width="81" height="81" fill="rgb(31,31,31)"/><rect x="0" y="1040" width="81" height="81" fill="rgb(32,32,32)"/><rect x="80" y="1040" width="81" height="81" fill="rgb(34,34,34)"/><rect x="160" y="1040" width="81" height="81" fill="rgb(37,37,37)"/><rect x="240" y="1040" width="81" height="81" fill="rgb(41,41,41)"/><rect x="320" y="1040" width="81" height="81" fill="rgb(47,47,47)"/><rect x="400" y="1040" width="81" height="81" fill="rgb(54,54,54)"/><rect x="480" y="1040" width="81" height="81" fill="rgb(61,61,61)"/><rect x="560" y="1040" width="81" height="81" fill="rgb(68,68,68)"/><rect x="640" y="1040" width="81" height="81" fill="rgb(74,74,74)"/><rect x="720" y="1040" width="81" height="81" fill="rgb(79,79,79)"/><rect x="800" y="1040" width="81" height="81" fill="rgb(83,83,83)"/><rect x="880" y="1040" width="81" height="81" fill="rgb(86,86,86)"/><rect x="960" y="1040" width="81" height="81" fill="rgb(89,89,89)"/><rect x="1040" y="1040" width="81" height="81" fill="rgb(91,91,91)"/><rect x="1120" y="1040" width="81" height="81" fill="rgb(92,92,92)"/><rect x="1200" y="1040" width="81" height="81" fill="rgb(93,93,93)"/><rect x="1280" y="1040" width="81" height="81" fill="rgb(94,94,94)"/><rect x="1360" y="1040" width="81" height="81" fill="rgb(95,95,95)"/><rect x="1440" y="1040" width="81" height="81" fill="rgb(96,96,96)"/><rect x="1520" y="1040" width="81" height="81" fill="rgb(96,96,96)"/><rect x="1600" y="1040" width="81" height="81" fill="rgb(97,97,97)"/><rect x="1680" y="1040" width="81" height="81" fill="rgb(98,98,98)"/><rect x="1760" y="1040" width="81" height="81" fill="rgb(98,98,98)"/><rect x="1840" y="1040" width="81" height="81" fill="rgb(99,99,99)"/><rect x="1920" y="1040" width="81" height="81" fill="rgb(99,99,99)"/><rect x="2000" y="1040" width="81" height="81" fill="rgb(99,99,99)"/><rect x="-160" y="1120" width="81" height="81" fill="rgb(32,32,32)"/><rect x="-80" y="1120" width="81" height="81" fill="rgb(32,32,32)"/><rect x="0" y="1120" width="81" height="81" fill="rgb(33,33,33)"/><rect x="80" y="1120" width="81" height="81" fill="rgb(36,36,36)"/><rect x="160" y="1120" width="81" height="81" fill="rgb(38,38,38)"/><rect x="240" y="1120" width="81" height="81" fill="rgb(41,41,41)"/><rect x="320" y="1120" width="81" height="81" fill="rgb(47,47,47)"/><rect x="400" y="1120" width="81" height="81" fill="rgb(54,54,54)"/><rect x="480" y="1120" width="81" height="81" fill="rgb(61,61,61)"/><rect x="560" y="1120" width="81" height="81" fill="rgb(68,68,68)"/><rect x="640" y="1120" width="81" height="81" fill="rgb(74,74,74)"/><rect x="720" y="1120" width="81" height="81" fill="rgb(78,78,78)"/><rect x="800" y="1120" width="81" height="81" fill="rgb(82,82,82)"/><rect x="880" y="1120" width="81" height="81" fill="rgb(86,86,86)"/><rect x="960" y="1120" width="81" height="81" fill="rgb(90,90,90)"/><rect x="1040" y="1120" width="81" height="81" fill="rgb(91,91,91)"/><rect x="1120" y="1120" width="81" height="81" fill="rgb(92,92,92)"/><rect x="1200" y="1120" width="81" height="81" fill="rgb(93,93,93)"/><rect x="1280" y="1120" width="81" height="81" fill="rgb(94,94,94)"/><rect x="1360" y="1120" width="81" height="81" fill="rgb(95,95,95)"/><rect x="1440" y="1120" width="81" height="81" fill="rgb(96,96,96)"/><rect x="1520" y="1120" width="81" height="81" fill="rgb(97,97,97)"/><rect x="1600" y="1120" width="81" height="81" fill="rgb(97,97,97)"/><rect x="1680" y="1120" width="81" height="81" fill="rgb(98,98,98)"/><rect x="1760" y="1120" width="81" height="81" fill="rgb(99,99,99)"/><rect x="1840" y="1120" width="81" height="81" fill="rgb(99,99,99)"/><rect x="1920" y="1120" width="81" height="81" fill="rgb(100,100,100)"/><rect x="2000" y="1120" width="81" height="81" fill="rgb(100,100,100)"/><rect x="-160" y="1200" width="81" height="81" fill="rgb(32,32,32)"/><rect x="-80" y="1200" width="81" height="81" fill="rgb(32,32,32)"/><rect x="0" y="1200" width="81" height="81" fill="rgb(33,33,33)"/><rect x="80" y="1200" width="81" height="81" fill="rgb(36,36,36)"/><rect x="160" y="1200" width="81" height="81" fill="rgb(39,39,39)"/><rect x="240" y="1200" width="81" height="81" fill="rgb(41,41,41)"/><rect x="320" y="1200" width="81" height="81" fill="rgb(47,47,47)"/><rect x="400" y="1200" width="81" height="81" fill="rgb(54,54,54)"/><rect x="480" y="1200" width="81" height="81" fill="rgb(61,61,61)"/><rect x="560" y="1200" width="81" height="81" fill="rgb(68,68,68)"/><rect x="640" y="1200" width="81" height="81" fill="rgb(74,74,74)"/><rect x="720" y="1200" width="81" height="81" fill="rgb(78,78,78)"/><rect x="800" y="1200" width="81" height="81" fill="rgb(82,82,82)"/><rect x="880" y="1200" width="81" height="81" fill="rgb(86,86,86)"/><rect x="960" y="1200" width="81" height="81" fill="rgb(90,90,90)"/><rect x="1040" y="1200" width="81" height="81" fill="rgb(91,91,91)"/><rect x="1120" y="1200" width="81" height="81" fill="rgb(92,92,92)"/><rect x="1200" y="1200" width="81" height="81" fill="rgb(93,93,93)"/><rect x="1280" y="1200" width="81" height="81" fill="rgb(94,94,94)"/><rect x="1360" y="1200" width="81" height="81" fill="rgb(95,95,95)"/><rect x="1440" y="1200" width="81" height="81" fill="rgb(96,96,96)"/><rect x="1520" y="1200" width="81" height="81" fill="rgb(97,97,97)"/><rect x="1600" y="1200" width="81" height="81" fill="rgb(97,97,97)"/><rect x="1680" y="1200" width="81" height="81" fill="rgb(98,98,98)"/><rect x="1760" y="1200" width="81" height="81" fill="rgb(99,99,99)"/><rect x="1840" y="1200" width="81" height="81" fill="rgb(100,100,100)"/><rect x="1920" y="1200" width="81" height="81" fill="rgb(100,100,100)"/><rect x="2000" y="1200" width="81" height="81" fill="rgb(100,100,100)"/><rect x="-160" y="1280" width="81" height="81" fill="rgb(32,32,32)"/><rect x="-80" y="1280" width="81" height="81" fill="rgb(32,32,32)"/><rect x="0" y="1280" width="81" height="81" fill="rgb(33,33,33)"/><rect x="80" y="1280" width="81" height="81" fill="rgb(36,36,36)"/><rect x="160" y="1280" width="81" height="81" fill="rgb(39,39,39)"/><rect x="240" y="1280" width="81" height="81" fill="rgb(41,41,41)"/><rect x="320" y="1280" width="81" height="81" fill="rgb(47,47,47)"/><rect x="400" y="1280" width="81" height="81" fill="rgb(54,54,54)"/><rect x="480" y="1280" width="81" height="81" fill="rgb(61,61,61)"/><rect x="560" y="1280" width="81" height="81" fill="rgb(68,68,68)"/><rect x="640" y="1280" width="81" height="81" fill="rgb(74,74,74)"/><rect x="720" y="1280" width="81" height="81" fill="rgb(78,78,78)"/><rect x="800" y="1280" width="81" height="81" fill="rgb(82,82,82)"/><rect x="880" y="1280" width="81" height="81" fill="rgb(86,86,86)"/><rect x="960" y="1280" width="81" height="81" fill="rgb(90,90,90)"/><rect x="1040" y="1280" width="81" height="81" fill="rgb(91,91,91)"/><rect x="1120" y="1280" width="81" height="81" fill="rgb(92,92,92)"/><rect x="1200" y="1280" width="81" height="81" fill="rgb(93,93,93)"/><rect x="1280" y="1280" width="81" height="81" fill="rgb(94,94,94)"/><rect x="1360" y="1280" width="81" height="81" fill="rgb(95,95,95)"/><rect x="1440" y="1280" width="81" height="81" fill="rgb(96,96,96)"/><rect x="1520" y="1280" width="81" height="81" fill="rgb(97,97,97)"/><rect x="1600" y="1280" width="81" height="81" fill="rgb(97,97,97)"/><rect x="1680" y="1280" width="81" height="81" fill="rgb(98,98,98)"/><rect x="1760" y="1280" width="81" height="81" fill="rgb(99,99,99)"/><rect x="1840" y="1280" width="81" height="81" fill="rgb(100,100,100)"/><rect x="1920" y="1280" width="81" height="81" fill="rgb(100,100,100)"/><rect x="2000" y="1280" width="81" height="81" fill="rgb(100,100,100)"/></g>
<path d="M372.6 1250.5 L369.8 1247.4 L367.1 1244.4 L364.4 1241.3 L361.7 1238.2 L359.0 1235.1 L356.3 1232.0 L353.7 1228.9 L351.1 1225.8 L348.5 1222.7 L346.0 1219.5 L343.4 1216.3 L340.9 1213.1 L338.4 1209.9 L335.9 1206.7 L333.5 1203.5 L331.1 1200.3 L328.6 1197.0 L326.3 1193.8 L323.9 1190.5 L321.6 1187.2 L319.3 1183.9 L317.0 1180.6 L314.7 1177.3 L312.4 1174.0 L310.2 1170.6 L308.0 1167.3 L305.8 1163.9 L303.7 1160.5 L301.5 1157.1 L299.4 1153.7 L297.3 1150.3 L295.3 1146.9 L293.2 1143.5 L291.2 1140.0 L289.2 1136.6 L287.2 1133.1 L285.2 1129.6 L283.3 1126.1 L281.4 1122.6 L279.5 1119.1 L277.6 1115.6 L275.8 1112.1 L274.0 1108.5 L272.2 1105.0 L270.4 1101.4 L268.6 1097.9 L266.9 1094.3 L265.2 1090.7 L263.5 1087.1 L261.8 1083.5 L260.2 1079.9 L258.6 1076.3 L256.9 1072.6 L255.4 1069.0 L253.8 1065.3 L252.3 1061.7 L250.8 1058.0 L249.3 1054.3 L247.8 1050.7 L246.4 1047.0 L244.9 1043.3 L243.5 1039.6 L242.1 1035.8 L240.8 1032.1 L239.5 1028.4 L238.1 1024.6 L236.8 1020.9 L235.6 1017.1 L234.3 1013.4 L233.1 1009.6 L231.9 1005.8 L230.7 1002.0 L229.6 998.3 L228.4 994.5 L227.3 990.6 L226.2 986.8 L225.1 983.0 L224.1 979.2 L223.1 975.4 L222.1 971.5 L221.1 967.7 L220.1 963.8 L219.2 960.0 L218.3 956.1 L217.4 952.2 L216.5 948.4 L215.6 944.5 L214.8 940.6 L214.0 936.7 L213.2 932.8 L212.5 928.9 L211.7 925.0 L211.0 921.1 L210.3 917.2 L209.6 913.2 L209.0 909.3 L208.3 905.4 L207.7 901.5 L207.1 897.5 L206.6 893.6 L206.0 889.6 L205.5 885.7 L205.0 881.7 L204.5 877.8 L204.1 873.8 L203.6 869.8 L203.2 865.9 L202.8 861.9 L202.4 857.9 L202.1 853.9 L201.7 849.9 L201.4 846.0 L201.1 842.0 L200.8 838.0 L200.6 834.0 L200.4 830.0 L200.1 826.0 L199.9 822.0 L199.8 818.0 L199.6 814.0 L199.5 810.0 L199.4 806.0 L199.3 802.0 L199.2 798.0 L199.2 794.0 L199.1 790.0 L199.1 785.9 L199.1 781.9 L199.2 777.9 L199.2 773.9 L199.3 769.9 L199.3 765.9 L199.5 761.9 L199.6 757.9 L199.7 753.8 L199.9 749.8 L200.1 745.8 L200.3 741.8 L200.5 737.8 L200.7 733.8 L201.0 729.8 L201.2 725.8 L201.5 721.8 L201.9 717.7 L202.2 713.7 L202.5 709.7 L202.9 705.7 L203.3 701.7 L203.7 697.7 L204.1 693.7 L204.6 689.7 L205.0 685.7 L205.5 681.7 L206.0 677.8 L206.5 673.8 L207.0 669.8 L207.6 665.8 L208.2 661.8 L208.7 657.9 L209.3 653.9 L210.0 649.9 L210.6 645.9 L211.3 642.0 L211.9 638.0 L212.6 634.1 L213.3 630.1 L214.0 626.2 L214.8 622.2 L215.5 618.3 L216.3 614.4 L217.1 610.4 L217.9 606.5 L218.7 602.6 L219.6 598.7 L220.4 594.8 L221.3 590.9 L222.2 587.0 L223.1 583.1 L224.0 579.2 L225.0 575.3 L225.9 571.4 L226.9 567.5 L227.9 563.7 L228.9 559.8 L229.9 555.9 L231.0 552.1 L232.0 548.3 L233.1 544.4 L234.2 540.6 L235.3 536.8 L236.4 533.0 L237.5 529.1 L238.7 525.3 L239.9 521.5 L241.0 517.8 L242.2 514.0 L243.4 510.2 L244.7 506.4 L245.9 502.7 L247.2 498.9 L248.4 495.2 L249.7 491.5 L251.0 487.7 L252.3 484.0 L253.7 480.3 L255.0 476.6 L256.4 472.9 L257.7 469.3 L220.3 455.3 L218.9 459.0 L217.4 462.9 L216.0 466.7 L214.7 470.6 L213.3 474.5 L211.9 478.4 L210.6 482.3 L209.3 486.2 L207.9 490.1 L206.7 494.0 L205.4 497.9 L204.1 501.8 L202.9 505.8 L201.6 509.7 L200.4 513.7 L199.2 517.7 L198.0 521.6 L196.9 525.6 L195.7 529.6 L194.6 533.6 L193.5 537.6 L192.4 541.6 L191.3 545.6 L190.2 549.6 L189.2 553.7 L188.2 557.7 L187.1 561.7 L186.1 565.8 L185.2 569.8 L184.2 573.9 L183.2 577.9 L182.3 582.0 L181.4 586.1 L180.5 590.2 L179.6 594.3 L178.8 598.3 L177.9 602.4 L177.1 606.5 L176.3 610.6 L175.5 614.8 L174.7 618.9 L174.0 623.0 L173.2 627.1 L172.5 631.2 L171.8 635.4 L171.1 639.5 L170.5 643.7 L169.8 647.8 L169.2 651.9 L168.6 656.1 L168.0 660.3 L167.4 664.4 L166.8 668.6 L166.3 672.7 L165.8 676.9 L165.3 681.1 L164.8 685.3 L164.4 689.4 L163.9 693.6 L163.5 697.8 L163.1 702.0 L162.7 706.2 L162.3 710.3 L162.0 714.5 L161.7 718.7 L161.3 722.9 L161.1 727.1 L160.8 731.3 L160.5 735.5 L160.3 739.7 L160.1 743.9 L159.9 748.1 L159.7 752.3 L159.6 756.5 L159.5 760.7 L159.4 764.9 L159.3 769.1 L159.2 773.4 L159.2 777.6 L159.1 781.8 L159.1 786.0 L159.1 790.2 L159.2 794.4 L159.2 798.6 L159.3 802.8 L159.4 807.0 L159.5 811.2 L159.7 815.4 L159.8 819.6 L160.0 823.8 L160.2 828.0 L160.4 832.2 L160.7 836.4 L160.9 840.6 L161.2 844.8 L161.5 849.0 L161.9 853.2 L162.2 857.4 L162.6 861.6 L163.0 865.8 L163.4 869.9 L163.8 874.1 L164.3 878.3 L164.8 882.5 L165.3 886.7 L165.8 890.8 L166.4 895.0 L167.0 899.2 L167.6 903.3 L168.2 907.5 L168.8 911.6 L169.5 915.8 L170.2 919.9 L170.9 924.1 L171.6 928.2 L172.4 932.3 L173.2 936.5 L174.0 940.6 L174.8 944.7 L175.7 948.8 L176.5 952.9 L177.4 957.0 L178.4 961.1 L179.3 965.2 L180.3 969.3 L181.3 973.4 L182.3 977.5 L183.3 981.5 L184.4 985.6 L185.5 989.7 L186.6 993.7 L187.7 997.7 L188.9 1001.8 L190.1 1005.8 L191.3 1009.8 L192.5 1013.9 L193.8 1017.9 L195.0 1021.9 L196.3 1025.9 L197.6 1029.8 L199.0 1033.8 L200.4 1037.8 L201.8 1041.8 L203.2 1045.7 L204.6 1049.7 L206.1 1053.6 L207.6 1057.5 L209.1 1061.5 L210.6 1065.4 L212.2 1069.3 L213.7 1073.2 L215.3 1077.1 L217.0 1080.9 L218.6 1084.8 L220.3 1088.7 L222.0 1092.5 L223.7 1096.4 L225.5 1100.2 L227.2 1104.0 L229.0 1107.8 L230.9 1111.6 L232.7 1115.4 L234.6 1119.2 L236.4 1123.0 L238.4 1126.8 L240.3 1130.5 L242.3 1134.3 L244.2 1138.0 L246.2 1141.7 L248.3 1145.4 L250.3 1149.1 L252.4 1152.8 L254.5 1156.5 L256.6 1160.2 L258.8 1163.8 L261.0 1167.5 L263.2 1171.1 L265.4 1174.7 L267.6 1178.4 L269.9 1182.0 L272.2 1185.5 L274.5 1189.1 L276.9 1192.7 L279.2 1196.2 L281.6 1199.8 L284.0 1203.3 L286.5 1206.8 L288.9 1210.3 L291.4 1213.8 L293.9 1217.3 L296.4 1220.7 L299.0 1224.2 L301.6 1227.6 L304.2 1231.0 L306.8 1234.5 L309.4 1237.9 L312.1 1241.2 L314.8 1244.6 L317.5 1248.0 L320.3 1251.3 L323.0 1254.6 L325.8 1257.9 L328.7 1261.2 L331.5 1264.5 L334.4 1267.8 L337.2 1271.0 L340.2 1274.3 L343.0 1277.4 Z" fill="rgba(0,0,0,0.55)" filter="url(#sh8)"/>
<path d="M374.1 1249.1 L371.3 1246.1 L368.6 1243.0 L365.9 1240.0 L363.2 1236.9 L360.5 1233.8 L357.9 1230.7 L355.2 1227.6 L352.6 1224.5 L350.1 1221.4 L347.5 1218.2 L345.0 1215.1 L342.5 1211.9 L340.0 1208.7 L337.5 1205.5 L335.1 1202.3 L332.7 1199.1 L330.3 1195.9 L327.9 1192.6 L325.5 1189.3 L323.2 1186.1 L320.9 1182.8 L318.6 1179.5 L316.3 1176.2 L314.1 1172.9 L311.9 1169.5 L309.7 1166.2 L307.5 1162.8 L305.4 1159.5 L303.2 1156.1 L301.1 1152.7 L299.0 1149.3 L297.0 1145.9 L294.9 1142.4 L292.9 1139.0 L290.9 1135.6 L288.9 1132.1 L287.0 1128.6 L285.1 1125.2 L283.2 1121.7 L281.3 1118.2 L279.4 1114.7 L277.6 1111.2 L275.7 1107.6 L274.0 1104.1 L272.2 1100.6 L270.4 1097.0 L268.7 1093.4 L267.0 1089.9 L265.3 1086.3 L263.6 1082.7 L262.0 1079.1 L260.4 1075.5 L258.8 1071.8 L257.2 1068.2 L255.7 1064.6 L254.1 1060.9 L252.6 1057.3 L251.1 1053.6 L249.7 1049.9 L248.2 1046.2 L246.8 1042.6 L245.4 1038.9 L244.0 1035.2 L242.7 1031.4 L241.3 1027.7 L240.0 1024.0 L238.7 1020.2 L237.5 1016.5 L236.2 1012.8 L235.0 1009.0 L233.8 1005.2 L232.6 1001.5 L231.5 997.7 L230.3 993.9 L229.2 990.1 L228.1 986.3 L227.1 982.5 L226.0 978.7 L225.0 974.8 L224.0 971.0 L223.0 967.2 L222.1 963.3 L221.1 959.5 L220.2 955.6 L219.3 951.8 L218.4 947.9 L217.6 944.1 L216.8 940.2 L216.0 936.3 L215.2 932.4 L214.4 928.5 L213.7 924.6 L213.0 920.7 L212.3 916.8 L211.6 912.9 L210.9 909.0 L210.3 905.1 L209.7 901.2 L209.1 897.2 L208.6 893.3 L208.0 889.4 L207.5 885.4 L207.0 881.5 L206.5 877.5 L206.0 873.6 L205.6 869.6 L205.2 865.6 L204.8 861.7 L204.4 857.7 L204.1 853.8 L203.7 849.8 L203.4 845.8 L203.1 841.8 L202.8 837.8 L202.6 833.9 L202.4 829.9 L202.1 825.9 L201.9 821.9 L201.8 817.9 L201.6 813.9 L201.5 809.9 L201.4 805.9 L201.3 801.9 L201.2 797.9 L201.2 793.9 L201.1 789.9 L201.1 785.9 L201.1 781.9 L201.2 777.9 L201.2 773.9 L201.3 769.9 L201.3 765.9 L201.5 761.9 L201.6 757.9 L201.7 753.9 L201.9 749.9 L202.1 745.9 L202.3 741.9 L202.5 737.9 L202.7 733.9 L203.0 729.9 L203.2 725.9 L203.5 721.9 L203.8 717.9 L204.2 713.9 L204.5 709.9 L204.9 705.9 L205.3 701.9 L205.7 697.9 L206.1 693.9 L206.5 690.0 L207.0 686.0 L207.5 682.0 L208.0 678.0 L208.5 674.0 L209.0 670.1 L209.6 666.1 L210.1 662.1 L210.7 658.2 L211.3 654.2 L211.9 650.2 L212.6 646.3 L213.2 642.3 L213.9 638.4 L214.6 634.4 L215.3 630.5 L216.0 626.5 L216.8 622.6 L217.5 618.7 L218.3 614.8 L219.1 610.8 L219.9 606.9 L220.7 603.0 L221.5 599.1 L222.4 595.2 L223.3 591.3 L224.2 587.4 L225.1 583.5 L226.0 579.6 L226.9 575.8 L227.9 571.9 L228.9 568.0 L229.8 564.2 L230.9 560.3 L231.9 556.5 L232.9 552.6 L234.0 548.8 L235.0 545.0 L236.1 541.1 L237.2 537.3 L238.3 533.5 L239.5 529.7 L240.6 525.9 L241.8 522.1 L242.9 518.4 L244.1 514.6 L245.3 510.8 L246.6 507.1 L247.8 503.3 L249.1 499.6 L250.3 495.8 L251.6 492.1 L252.9 488.4 L254.2 484.7 L255.5 481.0 L256.9 477.3 L258.2 473.6 L259.6 470.0 L244.6 464.4 L243.2 468.1 L241.9 471.8 L240.5 475.6 L239.1 479.3 L237.8 483.1 L236.5 486.9 L235.2 490.7 L233.9 494.5 L232.6 498.3 L231.4 502.1 L230.1 505.9 L228.9 509.7 L227.7 513.6 L226.5 517.4 L225.3 521.3 L224.1 525.1 L223.0 529.0 L221.8 532.9 L220.7 536.7 L219.6 540.6 L218.5 544.5 L217.5 548.4 L216.4 552.3 L215.4 556.2 L214.4 560.2 L213.4 564.1 L212.4 568.0 L211.4 572.0 L210.4 575.9 L209.5 579.8 L208.6 583.8 L207.7 587.8 L206.8 591.7 L205.9 595.7 L205.1 599.7 L204.2 603.6 L203.4 607.6 L202.6 611.6 L201.8 615.6 L201.0 619.6 L200.3 623.6 L199.5 627.6 L198.8 631.6 L198.1 635.7 L197.4 639.7 L196.8 643.7 L196.1 647.7 L195.5 651.8 L194.9 655.8 L194.3 659.8 L193.7 663.9 L193.2 667.9 L192.6 672.0 L192.1 676.0 L191.6 680.1 L191.1 684.1 L190.6 688.2 L190.2 692.2 L189.8 696.3 L189.4 700.3 L189.0 704.4 L188.6 708.5 L188.2 712.6 L187.9 716.6 L187.6 720.7 L187.3 724.8 L187.0 728.8 L186.7 732.9 L186.5 737.0 L186.3 741.1 L186.1 745.2 L185.9 749.2 L185.7 753.3 L185.6 757.4 L185.5 761.5 L185.4 765.6 L185.3 769.6 L185.2 773.7 L185.2 777.8 L185.1 781.9 L185.1 786.0 L185.1 790.0 L185.2 794.1 L185.2 798.2 L185.3 802.3 L185.4 806.3 L185.5 810.4 L185.6 814.5 L185.8 818.6 L186.0 822.6 L186.2 826.7 L186.4 830.8 L186.6 834.8 L186.9 838.9 L187.2 843.0 L187.5 847.0 L187.8 851.1 L188.1 855.1 L188.5 859.2 L188.9 863.2 L189.3 867.3 L189.7 871.3 L190.1 875.4 L190.6 879.4 L191.1 883.4 L191.6 887.5 L192.2 891.5 L192.7 895.5 L193.3 899.5 L193.9 903.6 L194.5 907.6 L195.2 911.6 L195.8 915.6 L196.5 919.6 L197.2 923.6 L198.0 927.6 L198.7 931.6 L199.5 935.5 L200.3 939.5 L201.1 943.5 L202.0 947.4 L202.8 951.4 L203.7 955.4 L204.6 959.3 L205.6 963.2 L206.5 967.2 L207.5 971.1 L208.5 975.0 L209.5 978.9 L210.6 982.9 L211.7 986.8 L212.7 990.7 L213.9 994.5 L215.0 998.4 L216.2 1002.3 L217.3 1006.2 L218.5 1010.0 L219.8 1013.9 L221.0 1017.7 L222.3 1021.6 L223.6 1025.4 L224.9 1029.2 L226.3 1033.1 L227.6 1036.9 L229.0 1040.7 L230.4 1044.5 L231.9 1048.3 L233.3 1052.0 L234.8 1055.8 L236.3 1059.6 L237.8 1063.3 L239.4 1067.1 L240.9 1070.8 L242.5 1074.5 L244.1 1078.3 L245.8 1082.0 L247.4 1085.7 L249.1 1089.4 L250.8 1093.0 L252.5 1096.7 L254.3 1100.4 L256.1 1104.0 L257.8 1107.7 L259.7 1111.3 L261.5 1114.9 L263.4 1118.5 L265.3 1122.1 L267.2 1125.7 L269.1 1129.3 L271.1 1132.9 L273.0 1136.5 L275.0 1140.0 L277.1 1143.5 L279.1 1147.1 L281.2 1150.6 L283.3 1154.1 L285.4 1157.6 L287.5 1161.1 L289.7 1164.6 L291.9 1168.0 L294.1 1171.5 L296.3 1174.9 L298.5 1178.3 L300.8 1181.8 L303.1 1185.2 L305.4 1188.6 L307.8 1191.9 L310.1 1195.3 L312.5 1198.7 L314.9 1202.0 L317.4 1205.3 L319.8 1208.7 L322.3 1212.0 L324.8 1215.2 L327.3 1218.5 L329.9 1221.8 L332.5 1225.0 L335.1 1228.3 L337.7 1231.5 L340.3 1234.7 L343.0 1237.9 L345.7 1241.1 L348.4 1244.3 L351.1 1247.4 L353.9 1250.6 L356.6 1253.7 L359.4 1256.8 L362.2 1259.9 Z" fill="#070707"/>
<path d="M366.7 1255.8 L363.9 1252.7 L361.2 1249.7 L358.4 1246.6 L355.7 1243.4 L353.0 1240.3 L350.3 1237.2 L347.6 1234.0 L345.0 1230.8 L342.4 1227.7 L339.8 1224.5 L337.2 1221.3 L334.7 1218.0 L332.1 1214.8 L329.6 1211.6 L327.2 1208.3 L324.7 1205.0 L322.3 1201.7 L319.9 1198.4 L317.5 1195.1 L315.1 1191.8 L312.8 1188.5 L310.4 1185.1 L308.1 1181.7 L305.9 1178.4 L303.6 1175.0 L301.4 1171.6 L299.2 1168.2 L297.0 1164.8 L294.8 1161.3 L292.7 1157.9 L290.6 1154.4 L288.5 1151.0 L286.4 1147.5 L284.3 1144.0 L282.3 1140.5 L280.3 1137.0 L278.3 1133.5 L276.4 1130.0 L274.4 1126.4 L272.5 1122.9 L270.6 1119.3 L268.8 1115.7 L266.9 1112.2 L265.1 1108.6 L263.3 1105.0 L261.5 1101.4 L259.8 1097.7 L258.0 1094.1 L256.3 1090.5 L254.6 1086.8 L253.0 1083.2 L251.3 1079.5 L249.7 1075.8 L248.1 1072.1 L246.5 1068.4 L245.0 1064.7 L243.4 1061.0 L241.9 1057.3 L240.4 1053.6 L239.0 1049.8 L237.5 1046.1 L236.1 1042.3 L234.7 1038.6 L233.3 1034.8 L232.0 1031.0 L230.7 1027.2 L229.4 1023.5 L228.1 1019.7 L226.8 1015.8 L225.6 1012.0 L224.3 1008.2 L223.2 1004.4 L222.0 1000.5 L220.8 996.7 L219.7 992.9 L218.6 989.0 L217.5 985.1 L216.5 981.3 L215.4 977.4 L214.4 973.5 L213.4 969.6 L212.4 965.7 L211.5 961.8 L210.6 957.9 L209.6 954.0 L208.8 950.1 L207.9 946.2 L207.1 942.2 L206.2 938.3 L205.5 934.3 L204.7 930.4 L203.9 926.4 L203.2 922.5 L202.5 918.5 L201.8 914.6 L201.2 910.6 L200.5 906.6 L199.9 902.6 L199.3 898.7 L198.7 894.7 L198.2 890.7 L197.6 886.7 L197.1 882.7 L196.7 878.7 L196.2 874.7 L195.7 870.7 L195.3 866.7 L194.9 862.6 L194.5 858.6 L194.2 854.6 L193.8 850.6 L193.5 846.6 L193.2 842.5 L192.9 838.5 L192.7 834.5 L192.4 830.4 L192.2 826.4 L192.0 822.4 L191.9 818.3 L191.7 814.3 L191.6 810.2 L191.5 806.2 L191.4 802.1 L191.3 798.1 L191.2 794.0 L191.2 790.0 L191.2 786.0 L191.2 781.9 L191.2 777.9 L191.3 773.8 L191.3 769.7 L191.4 765.7 L191.5 761.6 L191.7 757.6 L191.8 753.5 L192.0 749.5 L192.1 745.4 L192.4 741.4 L192.6 737.3 L192.8 733.3 L193.1 729.2 L193.3 725.2 L193.6 721.2 L194.0 717.1 L194.3 713.1 L194.6 709.0 L195.0 705.0 L195.4 700.9 L195.8 696.9 L196.2 692.9 L196.7 688.8 L197.2 684.8 L197.6 680.8 L198.1 676.8 L198.7 672.7 L199.2 668.7 L199.7 664.7 L200.3 660.7 L200.9 656.7 L201.5 652.7 L202.1 648.7 L202.8 644.7 L203.4 640.7 L204.1 636.7 L204.8 632.7 L205.5 628.7 L206.3 624.7 L207.0 620.8 L207.8 616.8 L208.6 612.8 L209.4 608.8 L210.2 604.9 L211.0 600.9 L211.8 597.0 L212.7 593.0 L213.6 589.1 L214.5 585.2 L215.4 581.2 L216.3 577.3 L217.3 573.4 L218.3 569.5 L219.2 565.6 L220.2 561.7 L221.3 557.8 L222.3 553.9 L223.3 550.0 L224.4 546.1 L225.5 542.3 L226.6 538.4 L227.7 534.6 L228.8 530.7 L230.0 526.9 L231.1 523.0 L232.3 519.2 L233.5 515.4 L234.7 511.6 L235.9 507.8 L237.1 504.0 L238.4 500.2 L239.7 496.4 L240.9 492.6 L242.2 488.9 L243.5 485.1 L244.9 481.4 L246.2 477.6 L247.6 473.9 L248.9 470.2 L250.3 466.5" fill="none" stroke="rgba(90,90,90,0.5)" stroke-width="1.2"/>
<path d="M374.8 1248.4 L372.0 1245.4 L369.3 1242.4 L366.6 1239.3 L363.9 1236.3 L361.3 1233.2 L358.6 1230.1 L356.0 1227.0 L353.4 1223.9 L350.8 1220.8 L348.3 1217.6 L345.8 1214.5 L343.3 1211.3 L340.8 1208.1 L338.3 1204.9 L335.9 1201.7 L333.5 1198.5 L331.1 1195.3 L328.7 1192.0 L326.3 1188.8 L324.0 1185.5 L321.7 1182.2 L319.4 1178.9 L317.2 1175.6 L314.9 1172.3 L312.7 1169.0 L310.5 1165.6 L308.4 1162.3 L306.2 1158.9 L304.1 1155.5 L302.0 1152.2 L299.9 1148.8 L297.8 1145.4 L295.8 1141.9 L293.8 1138.5 L291.8 1135.1 L289.8 1131.6 L287.9 1128.2 L285.9 1124.7 L284.0 1121.2 L282.2 1117.7 L280.3 1114.2 L278.5 1110.7 L276.6 1107.2 L274.8 1103.6 L273.1 1100.1 L271.3 1096.6 L269.6 1093.0 L267.9 1089.4 L266.2 1085.8 L264.5 1082.3 L262.9 1078.7 L261.3 1075.1 L259.7 1071.4 L258.1 1067.8 L256.6 1064.2 L255.0 1060.5 L253.5 1056.9 L252.1 1053.2 L250.6 1049.6 L249.2 1045.9 L247.7 1042.2 L246.3 1038.5 L245.0 1034.8 L243.6 1031.1 L242.3 1027.4 L241.0 1023.7 L239.7 1019.9 L238.4 1016.2 L237.2 1012.4 L236.0 1008.7 L234.8 1004.9 L233.6 1001.2 L232.4 997.4 L231.3 993.6 L230.2 989.8 L229.1 986.0 L228.0 982.2 L227.0 978.4 L226.0 974.6 L225.0 970.8 L224.0 966.9 L223.0 963.1 L222.1 959.3 L221.2 955.4 L220.3 951.6 L219.4 947.7 L218.6 943.8 L217.8 940.0 L216.9 936.1 L216.2 932.2 L215.4 928.3 L214.7 924.4 L214.0 920.5 L213.3 916.6 L212.6 912.7 L211.9 908.8 L211.3 904.9 L210.7 901.0 L210.1 897.1 L209.5 893.1 L209.0 889.2 L208.5 885.3 L208.0 881.3 L207.5 877.4 L207.0 873.5 L206.6 869.5 L206.2 865.5 L205.8 861.6 L205.4 857.6 L205.1 853.7 L204.7 849.7 L204.4 845.7 L204.1 841.8 L203.8 837.8 L203.6 833.8 L203.4 829.8 L203.1 825.8 L202.9 821.9 L202.8 817.9 L202.6 813.9 L202.5 809.9 L202.4 805.9 L202.3 801.9 L202.2 797.9 L202.2 793.9 L202.1 789.9 L202.1 785.9 L202.1 781.9 L202.2 777.9 L202.2 774.0 L202.3 770.0 L202.3 766.0 L202.5 762.0 L202.6 758.0 L202.7 754.0 L202.9 750.0 L203.1 746.0 L203.3 742.0 L203.5 738.0 L203.7 734.0 L204.0 730.0 L204.2 726.0 L204.5 722.0 L204.8 718.0 L205.2 714.0 L205.5 710.0 L205.9 706.0 L206.3 702.0 L206.7 698.0 L207.1 694.1 L207.5 690.1 L208.0 686.1 L208.5 682.1 L209.0 678.1 L209.5 674.2 L210.0 670.2 L210.6 666.2 L211.1 662.3 L211.7 658.3 L212.3 654.3 L212.9 650.4 L213.6 646.4 L214.2 642.5 L214.9 638.5 L215.6 634.6 L216.3 630.7 L217.0 626.7 L217.7 622.8 L218.5 618.9 L219.3 614.9 L220.1 611.0 L220.9 607.1 L221.7 603.2 L222.5 599.3 L223.4 595.4 L224.2 591.5 L225.1 587.6 L226.0 583.7 L227.0 579.9 L227.9 576.0 L228.9 572.1 L229.8 568.3 L230.8 564.4 L231.8 560.6 L232.8 556.7 L233.9 552.9 L234.9 549.1 L236.0 545.2 L237.1 541.4 L238.2 537.6 L239.3 533.8 L240.4 530.0 L241.6 526.2 L242.7 522.4 L243.9 518.7 L245.1 514.9 L246.3 511.1 L247.5 507.4 L248.8 503.6 L250.0 499.9 L251.3 496.2 L252.5 492.5 L253.8 488.7 L255.2 485.0 L256.5 481.3 L257.8 477.7 L259.2 474.0 L260.5 470.3" fill="none" stroke="rgba(160,160,160,0.25)" stroke-width="1.5"/>
<path d="M762.0 1229.3 L758.7 1227.0 L755.3 1224.7 L752.0 1222.4 L748.7 1220.1 L745.4 1217.7 L742.1 1215.4 L738.9 1213.0 L735.6 1210.6 L732.3 1208.1 L729.1 1205.7 L725.9 1203.2 L722.6 1200.7 L719.4 1198.2 L716.2 1195.7 L713.1 1193.2 L709.9 1190.6 L706.7 1188.1 L703.6 1185.5 L700.5 1182.9 L697.4 1180.3 L694.3 1177.6 L691.2 1175.0 L688.1 1172.3 L685.0 1169.6 L682.0 1166.9 L679.0 1164.2 L676.0 1161.4 L673.0 1158.7 L670.0 1155.9 L667.1 1153.1 L664.1 1150.3 L661.2 1147.5 L658.3 1144.7 L655.4 1141.8 L652.6 1138.9 L649.7 1136.0 L646.9 1133.1 L644.1 1130.2 L641.3 1127.3 L638.5 1124.3 L635.8 1121.3 L633.1 1118.4 L630.4 1115.4 L627.7 1112.3 L625.0 1109.3 L622.4 1106.3 L619.8 1103.2 L617.2 1100.1 L614.6 1097.0 L612.1 1093.9 L609.5 1090.8 L607.1 1087.6 L604.6 1084.5 L602.1 1081.3 L599.7 1078.1 L597.3 1074.9 L594.9 1071.7 L592.6 1068.4 L590.3 1065.2 L588.0 1061.9 L585.7 1058.6 L583.5 1055.3 L581.3 1052.0 L579.1 1048.7 L576.9 1045.3 L574.8 1042.0 L572.7 1038.6 L570.6 1035.2 L568.6 1031.8 L566.6 1028.4 L564.6 1024.9 L562.7 1021.5 L560.8 1018.0 L558.9 1014.6 L557.0 1011.1 L555.2 1007.6 L553.4 1004.0 L551.6 1000.5 L549.9 997.0 L548.2 993.4 L546.6 989.8 L544.9 986.2 L543.3 982.6 L541.8 979.0 L540.2 975.4 L538.7 971.7 L537.3 968.1 L535.8 964.4 L534.4 960.7 L533.1 957.0 L531.7 953.3 L530.4 949.6 L529.1 945.9 L527.9 942.2 L526.7 938.4 L525.5 934.6 L524.3 930.9 L523.2 927.1 L522.1 923.3 L521.1 919.5 L520.0 915.7 L519.0 911.9 L518.1 908.0 L517.1 904.2 L516.2 900.4 L515.3 896.5 L514.5 892.6 L513.7 888.8 L512.9 884.9 L512.1 881.0 L511.4 877.1 L510.7 873.2 L510.0 869.3 L509.4 865.4 L508.8 861.5 L508.2 857.5 L507.6 853.6 L507.1 849.6 L506.6 845.7 L506.1 841.7 L505.7 837.8 L505.3 833.8 L504.9 829.8 L504.5 825.8 L504.2 821.9 L503.9 817.9 L503.6 813.9 L503.3 809.9 L503.1 805.9 L502.9 801.9 L502.8 797.9 L502.6 793.9 L502.5 789.8 L502.4 785.8 L502.4 781.8 L502.3 777.8 L502.3 773.8 L502.3 769.7 L502.4 765.7 L502.4 761.7 L502.5 757.6 L502.7 753.6 L502.8 749.6 L503.0 745.5 L503.2 741.5 L503.4 737.4 L503.7 733.4 L503.9 729.4 L504.2 725.3 L504.5 721.3 L504.9 717.2 L505.3 713.2 L505.7 709.1 L506.1 705.1 L506.5 701.1 L507.0 697.0 L507.5 693.0 L508.0 689.0 L508.6 684.9 L509.1 680.9 L509.7 676.9 L510.3 672.8 L511.0 668.8 L511.6 664.8 L512.3 660.8 L513.0 656.8 L513.8 652.8 L514.5 648.8 L515.3 644.8 L516.1 640.8 L516.9 636.8 L517.7 632.8 L518.6 628.8 L519.5 624.8 L520.4 620.8 L521.3 616.9 L522.3 612.9 L523.3 608.9 L524.3 605.0 L525.3 601.0 L526.3 597.1 L527.4 593.2 L528.5 589.2 L529.6 585.3 L530.7 581.4 L531.8 577.5 L533.0 573.6 L534.2 569.7 L535.4 565.8 L536.6 561.9 L537.9 558.1 L539.1 554.2 L540.4 550.4 L541.7 546.5 L543.1 542.7 L544.4 538.9 L545.8 535.0 L547.2 531.2 L548.6 527.4 L550.0 523.7 L551.4 519.9 L552.9 516.1 L554.4 512.4 L555.9 508.6 L557.4 504.9 L558.9 501.2 L560.5 497.5 L562.0 493.8 L563.6 490.1 L565.2 486.4 L566.9 482.7 L568.5 479.1 L570.2 475.5 L571.9 471.8 L573.6 468.2 L575.3 464.6 L577.0 461.0 L578.8 457.5 L580.5 453.9 L582.3 450.4 L584.1 446.8 L585.9 443.3 L587.8 439.8 L589.6 436.3 L591.5 432.9 L593.4 429.4 L595.3 426.0 L597.2 422.6 L599.1 419.1 L564.3 399.4 L562.3 402.9 L560.3 406.5 L558.3 410.2 L556.3 413.8 L554.3 417.5 L552.4 421.2 L550.5 424.9 L548.5 428.6 L546.6 432.3 L544.8 436.0 L542.9 439.8 L541.0 443.5 L539.2 447.3 L537.4 451.1 L535.6 454.9 L533.9 458.7 L532.1 462.6 L530.4 466.4 L528.7 470.3 L527.0 474.1 L525.3 478.0 L523.6 481.9 L522.0 485.8 L520.4 489.7 L518.8 493.7 L517.2 497.6 L515.6 501.5 L514.1 505.5 L512.6 509.5 L511.1 513.5 L509.6 517.5 L508.1 521.5 L506.7 525.5 L505.3 529.5 L503.9 533.5 L502.5 537.6 L501.2 541.6 L499.8 545.7 L498.5 549.8 L497.2 553.8 L496.0 557.9 L494.7 562.0 L493.5 566.1 L492.3 570.3 L491.1 574.4 L489.9 578.5 L488.8 582.6 L487.7 586.8 L486.6 590.9 L485.5 595.1 L484.5 599.3 L483.4 603.4 L482.4 607.6 L481.4 611.8 L480.5 616.0 L479.5 620.2 L478.6 624.4 L477.7 628.6 L476.9 632.8 L476.0 637.0 L475.2 641.3 L474.4 645.5 L473.7 649.7 L472.9 654.0 L472.2 658.2 L471.5 662.4 L470.8 666.7 L470.2 671.0 L469.5 675.2 L468.9 679.5 L468.4 683.7 L467.8 688.0 L467.3 692.3 L466.8 696.5 L466.3 700.8 L465.9 705.1 L465.5 709.4 L465.1 713.7 L464.7 717.9 L464.3 722.2 L464.0 726.5 L463.7 730.8 L463.5 735.1 L463.2 739.4 L463.0 743.7 L462.8 748.0 L462.7 752.3 L462.6 756.5 L462.4 760.8 L462.4 765.1 L462.3 769.4 L462.3 773.7 L462.3 778.0 L462.4 782.3 L462.4 786.6 L462.5 790.9 L462.6 795.1 L462.8 799.4 L463.0 803.7 L463.2 808.0 L463.4 812.2 L463.7 816.5 L464.0 820.8 L464.3 825.0 L464.7 829.3 L465.0 833.6 L465.5 837.8 L465.9 842.1 L466.4 846.3 L466.9 850.6 L467.4 854.8 L468.0 859.0 L468.6 863.3 L469.2 867.5 L469.9 871.7 L470.6 875.9 L471.3 880.1 L472.0 884.3 L472.8 888.5 L473.7 892.7 L474.5 896.9 L475.4 901.1 L476.3 905.2 L477.3 909.4 L478.2 913.6 L479.2 917.7 L480.3 921.8 L481.4 926.0 L482.5 930.1 L483.6 934.2 L484.8 938.3 L486.0 942.4 L487.3 946.5 L488.6 950.6 L489.9 954.6 L491.2 958.7 L492.6 962.7 L494.0 966.8 L495.5 970.8 L497.0 974.8 L498.5 978.8 L500.1 982.8 L501.7 986.8 L503.3 990.8 L505.0 994.7 L506.7 998.7 L508.4 1002.6 L510.2 1006.5 L512.0 1010.4 L513.9 1014.3 L515.8 1018.2 L517.7 1022.0 L519.6 1025.9 L521.6 1029.7 L523.6 1033.5 L525.7 1037.3 L527.8 1041.0 L529.9 1044.8 L532.0 1048.5 L534.2 1052.2 L536.4 1055.9 L538.7 1059.6 L540.9 1063.2 L543.2 1066.8 L545.6 1070.5 L547.9 1074.1 L550.3 1077.6 L552.7 1081.2 L555.1 1084.7 L557.6 1088.2 L560.1 1091.7 L562.6 1095.2 L565.2 1098.7 L567.8 1102.1 L570.4 1105.6 L573.0 1109.0 L575.6 1112.4 L578.3 1115.7 L581.0 1119.1 L583.7 1122.4 L586.5 1125.7 L589.2 1129.0 L592.0 1132.3 L594.8 1135.6 L597.7 1138.8 L600.5 1142.0 L603.4 1145.2 L606.3 1148.4 L609.2 1151.6 L612.2 1154.7 L615.1 1157.8 L618.1 1160.9 L621.1 1164.0 L624.1 1167.1 L627.2 1170.1 L630.2 1173.2 L633.3 1176.2 L636.4 1179.2 L639.5 1182.1 L642.6 1185.1 L645.8 1188.0 L648.9 1190.9 L652.1 1193.8 L655.3 1196.7 L658.5 1199.6 L661.8 1202.4 L665.0 1205.2 L668.2 1208.0 L671.5 1210.8 L674.8 1213.6 L678.1 1216.3 L681.4 1219.0 L684.7 1221.7 L688.1 1224.4 L691.4 1227.1 L694.8 1229.7 L698.2 1232.4 L701.5 1235.0 L704.9 1237.6 L708.3 1240.1 L711.8 1242.7 L715.2 1245.2 L718.6 1247.7 L722.1 1250.2 L725.5 1252.7 L729.0 1255.1 L732.5 1257.6 L736.0 1260.0 L739.4 1262.3 Z" fill="rgba(0,0,0,0.55)" filter="url(#sh8)"/>
<path d="M763.1 1227.7 L759.8 1225.4 L756.5 1223.1 L753.2 1220.8 L749.9 1218.5 L746.6 1216.1 L743.3 1213.7 L740.0 1211.4 L736.8 1208.9 L733.5 1206.5 L730.3 1204.1 L727.1 1201.6 L723.9 1199.2 L720.7 1196.7 L717.5 1194.2 L714.3 1191.6 L711.2 1189.1 L708.0 1186.5 L704.9 1183.9 L701.7 1181.4 L698.6 1178.7 L695.6 1176.1 L692.5 1173.5 L689.4 1170.8 L686.4 1168.1 L683.3 1165.4 L680.3 1162.7 L677.3 1160.0 L674.3 1157.2 L671.4 1154.5 L668.4 1151.7 L665.5 1148.9 L662.6 1146.1 L659.7 1143.2 L656.8 1140.4 L654.0 1137.5 L651.1 1134.6 L648.3 1131.7 L645.5 1128.8 L642.7 1125.9 L640.0 1123.0 L637.3 1120.0 L634.5 1117.0 L631.8 1114.0 L629.2 1111.0 L626.5 1108.0 L623.9 1104.9 L621.3 1101.9 L618.7 1098.8 L616.2 1095.7 L613.6 1092.6 L611.1 1089.5 L608.6 1086.4 L606.2 1083.2 L603.7 1080.1 L601.3 1076.9 L598.9 1073.7 L596.6 1070.5 L594.2 1067.2 L591.9 1064.0 L589.6 1060.7 L587.4 1057.5 L585.1 1054.2 L582.9 1050.9 L580.8 1047.6 L578.6 1044.2 L576.5 1040.9 L574.4 1037.5 L572.4 1034.2 L570.3 1030.8 L568.3 1027.4 L566.4 1023.9 L564.4 1020.5 L562.5 1017.1 L560.6 1013.6 L558.8 1010.1 L557.0 1006.6 L555.2 1003.1 L553.4 999.6 L551.7 996.1 L550.0 992.5 L548.4 989.0 L546.8 985.4 L545.2 981.8 L543.6 978.2 L542.1 974.6 L540.6 971.0 L539.1 967.3 L537.7 963.7 L536.3 960.0 L534.9 956.3 L533.6 952.7 L532.3 949.0 L531.0 945.3 L529.8 941.5 L528.6 937.8 L527.4 934.1 L526.3 930.3 L525.1 926.5 L524.0 922.8 L523.0 919.0 L522.0 915.2 L521.0 911.4 L520.0 907.6 L519.1 903.7 L518.2 899.9 L517.3 896.1 L516.4 892.2 L515.6 888.4 L514.8 884.5 L514.1 880.6 L513.4 876.7 L512.7 872.9 L512.0 869.0 L511.3 865.1 L510.7 861.1 L510.1 857.2 L509.6 853.3 L509.1 849.4 L508.6 845.4 L508.1 841.5 L507.7 837.6 L507.2 833.6 L506.9 829.6 L506.5 825.7 L506.2 821.7 L505.9 817.7 L505.6 813.8 L505.3 809.8 L505.1 805.8 L504.9 801.8 L504.8 797.8 L504.6 793.8 L504.5 789.8 L504.4 785.8 L504.4 781.8 L504.3 777.8 L504.3 773.8 L504.3 769.7 L504.4 765.7 L504.4 761.7 L504.5 757.7 L504.7 753.7 L504.8 749.6 L505.0 745.6 L505.2 741.6 L505.4 737.5 L505.6 733.5 L505.9 729.5 L506.2 725.5 L506.5 721.4 L506.9 717.4 L507.3 713.4 L507.7 709.3 L508.1 705.3 L508.5 701.3 L509.0 697.3 L509.5 693.2 L510.0 689.2 L510.6 685.2 L511.1 681.2 L511.7 677.2 L512.3 673.2 L513.0 669.1 L513.6 665.1 L514.3 661.1 L515.0 657.1 L515.7 653.1 L516.5 649.1 L517.3 645.1 L518.0 641.2 L518.9 637.2 L519.7 633.2 L520.6 629.2 L521.5 625.2 L522.4 621.3 L523.3 617.3 L524.2 613.4 L525.2 609.4 L526.2 605.5 L527.2 601.5 L528.3 597.6 L529.3 593.7 L530.4 589.8 L531.5 585.9 L532.6 582.0 L533.8 578.1 L534.9 574.2 L536.1 570.3 L537.3 566.4 L538.5 562.5 L539.8 558.7 L541.0 554.8 L542.3 551.0 L543.6 547.2 L544.9 543.3 L546.3 539.5 L547.6 535.7 L549.0 531.9 L550.4 528.1 L551.8 524.4 L553.3 520.6 L554.7 516.9 L556.2 513.1 L557.7 509.4 L559.2 505.7 L560.8 501.9 L562.3 498.2 L563.9 494.6 L565.5 490.9 L567.1 487.2 L568.7 483.6 L570.3 479.9 L572.0 476.3 L573.7 472.7 L575.4 469.1 L577.1 465.5 L578.8 461.9 L580.6 458.4 L582.3 454.8 L584.1 451.3 L585.9 447.8 L587.7 444.3 L589.5 440.8 L591.4 437.3 L593.2 433.8 L595.1 430.4 L597.0 426.9 L598.9 423.5 L600.9 420.1 L586.9 412.2 L585.0 415.7 L583.0 419.2 L581.1 422.7 L579.2 426.2 L577.3 429.7 L575.4 433.3 L573.5 436.9 L571.7 440.4 L569.8 444.0 L568.0 447.7 L566.2 451.3 L564.4 454.9 L562.7 458.6 L560.9 462.2 L559.2 465.9 L557.5 469.6 L555.8 473.3 L554.1 477.0 L552.4 480.8 L550.8 484.5 L549.2 488.3 L547.6 492.0 L546.0 495.8 L544.4 499.6 L542.9 503.4 L541.4 507.2 L539.8 511.0 L538.4 514.9 L536.9 518.7 L535.4 522.6 L534.0 526.4 L532.6 530.3 L531.2 534.2 L529.8 538.1 L528.5 542.0 L527.2 545.9 L525.8 549.8 L524.6 553.7 L523.3 557.7 L522.0 561.6 L520.8 565.6 L519.6 569.5 L518.4 573.5 L517.2 577.5 L516.1 581.5 L515.0 585.5 L513.9 589.5 L512.8 593.5 L511.7 597.5 L510.7 601.5 L509.7 605.6 L508.7 609.6 L507.7 613.6 L506.8 617.7 L505.8 621.7 L504.9 625.8 L504.1 629.8 L503.2 633.9 L502.4 638.0 L501.6 642.1 L500.8 646.1 L500.0 650.2 L499.2 654.3 L498.5 658.4 L497.8 662.5 L497.2 666.6 L496.5 670.7 L495.9 674.8 L495.3 678.9 L494.7 683.0 L494.1 687.1 L493.6 691.2 L493.1 695.4 L492.6 699.5 L492.2 703.6 L491.7 707.7 L491.3 711.9 L491.0 716.0 L490.6 720.1 L490.3 724.2 L490.0 728.4 L489.7 732.5 L489.4 736.6 L489.2 740.7 L489.0 744.9 L488.8 749.0 L488.7 753.1 L488.5 757.2 L488.4 761.4 L488.4 765.5 L488.3 769.6 L488.3 773.7 L488.3 777.9 L488.4 782.0 L488.4 786.1 L488.5 790.2 L488.6 794.3 L488.8 798.4 L488.9 802.5 L489.1 806.6 L489.4 810.7 L489.6 814.8 L489.9 818.9 L490.2 823.0 L490.6 827.1 L490.9 831.1 L491.3 835.2 L491.7 839.3 L492.2 843.3 L492.7 847.4 L493.2 851.4 L493.7 855.5 L494.3 859.5 L494.9 863.6 L495.5 867.6 L496.2 871.6 L496.9 875.6 L497.6 879.6 L498.4 883.6 L499.2 887.6 L500.0 891.6 L500.8 895.6 L501.7 899.6 L502.6 903.5 L503.5 907.5 L504.5 911.4 L505.5 915.4 L506.5 919.3 L507.6 923.2 L508.7 927.1 L509.8 931.0 L510.9 934.9 L512.1 938.8 L513.3 942.7 L514.6 946.5 L515.9 950.4 L517.2 954.2 L518.5 958.0 L519.9 961.9 L521.3 965.7 L522.8 969.5 L524.3 973.2 L525.8 977.0 L527.3 980.8 L528.9 984.5 L530.5 988.2 L532.2 991.9 L533.8 995.7 L535.5 999.3 L537.3 1003.0 L539.1 1006.7 L540.9 1010.3 L542.7 1014.0 L544.6 1017.6 L546.5 1021.2 L548.5 1024.8 L550.5 1028.3 L552.5 1031.9 L554.5 1035.4 L556.6 1038.9 L558.7 1042.4 L560.8 1045.9 L563.0 1049.4 L565.1 1052.9 L567.4 1056.3 L569.6 1059.7 L571.9 1063.1 L574.2 1066.5 L576.5 1069.9 L578.8 1073.2 L581.2 1076.6 L583.6 1079.9 L586.1 1083.2 L588.5 1086.5 L591.0 1089.8 L593.5 1093.0 L596.1 1096.3 L598.6 1099.5 L601.2 1102.7 L603.8 1105.9 L606.4 1109.1 L609.1 1112.2 L611.8 1115.4 L614.5 1118.5 L617.2 1121.6 L619.9 1124.7 L622.7 1127.8 L625.5 1130.8 L628.3 1133.9 L631.1 1136.9 L633.9 1139.9 L636.8 1142.9 L639.7 1145.8 L642.6 1148.8 L645.5 1151.7 L648.5 1154.6 L651.4 1157.5 L654.4 1160.4 L657.4 1163.3 L660.4 1166.1 L663.5 1169.0 L666.5 1171.8 L669.6 1174.6 L672.7 1177.3 L675.8 1180.1 L678.9 1182.8 L682.0 1185.6 L685.2 1188.3 L688.3 1191.0 L691.5 1193.6 L694.7 1196.3 L697.9 1198.9 L701.1 1201.5 L704.3 1204.1 L707.6 1206.7 L710.8 1209.3 L714.1 1211.8 L717.4 1214.3 L720.6 1216.8 L723.9 1219.3 L727.3 1221.8 L730.6 1224.2 L733.9 1226.7 L737.3 1229.1 L740.6 1231.5 L744.0 1233.9 L747.3 1236.2 L750.7 1238.6 L754.1 1240.9 Z" fill="#070707"/>
<path d="M757.5 1235.9 L754.2 1233.6 L750.8 1231.2 L747.5 1228.9 L744.1 1226.5 L740.8 1224.2 L737.5 1221.8 L734.2 1219.3 L730.9 1216.9 L727.6 1214.5 L724.3 1212.0 L721.0 1209.5 L717.8 1207.0 L714.6 1204.5 L711.3 1201.9 L708.1 1199.4 L704.9 1196.8 L701.7 1194.2 L698.5 1191.6 L695.4 1189.0 L692.2 1186.3 L689.1 1183.6 L686.0 1181.0 L682.9 1178.3 L679.8 1175.5 L676.7 1172.8 L673.7 1170.1 L670.6 1167.3 L667.6 1164.5 L664.6 1161.7 L661.6 1158.9 L658.6 1156.0 L655.7 1153.2 L652.7 1150.3 L649.8 1147.4 L646.9 1144.5 L644.0 1141.6 L641.2 1138.6 L638.3 1135.7 L635.5 1132.7 L632.7 1129.7 L629.9 1126.7 L627.2 1123.7 L624.5 1120.6 L621.7 1117.6 L619.0 1114.5 L616.4 1111.4 L613.7 1108.3 L611.1 1105.2 L608.5 1102.0 L605.9 1098.9 L603.4 1095.7 L600.8 1092.5 L598.3 1089.3 L595.8 1086.1 L593.4 1082.8 L591.0 1079.6 L588.5 1076.3 L586.2 1073.0 L583.8 1069.7 L581.5 1066.4 L579.2 1063.1 L576.9 1059.7 L574.7 1056.4 L572.5 1053.0 L570.3 1049.6 L568.1 1046.2 L566.0 1042.7 L563.9 1039.3 L561.8 1035.8 L559.8 1032.4 L557.7 1028.9 L555.8 1025.4 L553.8 1021.8 L551.9 1018.3 L550.0 1014.7 L548.1 1011.2 L546.3 1007.6 L544.5 1004.0 L542.8 1000.4 L541.0 996.8 L539.4 993.1 L537.7 989.5 L536.1 985.8 L534.5 982.1 L532.9 978.4 L531.4 974.7 L529.9 971.0 L528.4 967.3 L527.0 963.5 L525.6 959.8 L524.3 956.0 L522.9 952.2 L521.6 948.4 L520.4 944.6 L519.1 940.8 L517.9 937.0 L516.8 933.2 L515.6 929.3 L514.5 925.5 L513.4 921.6 L512.4 917.7 L511.4 913.9 L510.4 910.0 L509.4 906.1 L508.5 902.2 L507.6 898.2 L506.7 894.3 L505.9 890.4 L505.1 886.4 L504.3 882.5 L503.6 878.5 L502.9 874.6 L502.2 870.6 L501.5 866.6 L500.9 862.6 L500.3 858.7 L499.8 854.7 L499.2 850.7 L498.7 846.7 L498.2 842.6 L497.8 838.6 L497.4 834.6 L497.0 830.6 L496.6 826.5 L496.3 822.5 L496.0 818.5 L495.7 814.4 L495.4 810.4 L495.2 806.3 L495.0 802.2 L494.8 798.2 L494.7 794.1 L494.6 790.0 L494.5 786.0 L494.4 781.9 L494.4 777.8 L494.4 773.7 L494.4 769.7 L494.5 765.6 L494.5 761.5 L494.6 757.4 L494.7 753.3 L494.9 749.2 L495.1 745.1 L495.3 741.1 L495.5 737.0 L495.7 732.9 L496.0 728.8 L496.3 724.7 L496.7 720.6 L497.0 716.5 L497.4 712.4 L497.8 708.3 L498.2 704.3 L498.7 700.2 L499.1 696.1 L499.6 692.0 L500.2 687.9 L500.7 683.8 L501.3 679.8 L501.9 675.7 L502.5 671.6 L503.2 667.6 L503.8 663.5 L504.5 659.4 L505.2 655.4 L506.0 651.3 L506.7 647.3 L507.5 643.2 L508.3 639.2 L509.2 635.1 L510.0 631.1 L510.9 627.1 L511.8 623.1 L512.7 619.0 L513.6 615.0 L514.6 611.0 L515.6 607.0 L516.6 603.0 L517.6 599.0 L518.7 595.1 L519.7 591.1 L520.8 587.1 L522.0 583.1 L523.1 579.2 L524.2 575.2 L525.4 571.3 L526.6 567.4 L527.8 563.4 L529.1 559.5 L530.3 555.6 L531.6 551.7 L532.9 547.8 L534.2 543.9 L535.6 540.1 L536.9 536.2 L538.3 532.4 L539.7 528.5 L541.1 524.7 L542.6 520.9 L544.0 517.0 L545.5 513.2 L547.0 509.4 L548.5 505.7 L550.1 501.9 L551.6 498.1 L553.2 494.4 L554.8 490.6 L556.4 486.9 L558.0 483.2 L559.6 479.5 L561.3 475.8 L563.0 472.1 L564.7 468.5 L566.4 464.8 L568.1 461.2 L569.9 457.6 L571.7 454.0 L573.4 450.4 L575.2 446.8 L577.1 443.2 L578.9 439.7 L580.8 436.1 L582.6 432.6 L584.5 429.1 L586.4 425.6 L588.3 422.1 L590.3 418.7 L592.2 415.2" fill="none" stroke="rgba(90,90,90,0.5)" stroke-width="1.2"/>
<path d="M763.7 1226.8 L760.4 1224.6 L757.0 1222.3 L753.7 1220.0 L750.5 1217.6 L747.2 1215.3 L743.9 1212.9 L740.6 1210.5 L737.4 1208.1 L734.1 1205.7 L730.9 1203.3 L727.7 1200.8 L724.5 1198.4 L721.3 1195.9 L718.1 1193.4 L714.9 1190.8 L711.8 1188.3 L708.6 1185.8 L705.5 1183.2 L702.4 1180.6 L699.3 1178.0 L696.2 1175.3 L693.1 1172.7 L690.1 1170.0 L687.0 1167.4 L684.0 1164.7 L681.0 1162.0 L678.0 1159.2 L675.0 1156.5 L672.1 1153.7 L669.1 1151.0 L666.2 1148.2 L663.3 1145.3 L660.4 1142.5 L657.5 1139.7 L654.7 1136.8 L651.9 1133.9 L649.0 1131.0 L646.2 1128.1 L643.5 1125.2 L640.7 1122.3 L638.0 1119.3 L635.3 1116.3 L632.6 1113.4 L629.9 1110.4 L627.3 1107.3 L624.7 1104.3 L622.1 1101.2 L619.5 1098.2 L616.9 1095.1 L614.4 1092.0 L611.9 1088.9 L609.4 1085.8 L607.0 1082.6 L604.5 1079.5 L602.1 1076.3 L599.7 1073.1 L597.4 1069.9 L595.0 1066.7 L592.7 1063.4 L590.5 1060.2 L588.2 1056.9 L586.0 1053.6 L583.8 1050.3 L581.6 1047.0 L579.5 1043.7 L577.4 1040.4 L575.3 1037.0 L573.2 1033.6 L571.2 1030.3 L569.2 1026.9 L567.2 1023.5 L565.3 1020.0 L563.4 1016.6 L561.5 1013.1 L559.7 1009.7 L557.9 1006.2 L556.1 1002.7 L554.3 999.2 L552.6 995.7 L550.9 992.1 L549.3 988.6 L547.7 985.0 L546.1 981.4 L544.5 977.8 L543.0 974.2 L541.5 970.6 L540.1 967.0 L538.6 963.3 L537.2 959.7 L535.9 956.0 L534.5 952.3 L533.2 948.6 L532.0 944.9 L530.7 941.2 L529.5 937.5 L528.4 933.8 L527.2 930.0 L526.1 926.3 L525.0 922.5 L524.0 918.7 L522.9 914.9 L521.9 911.1 L521.0 907.3 L520.0 903.5 L519.1 899.7 L518.3 895.9 L517.4 892.0 L516.6 888.2 L515.8 884.3 L515.1 880.4 L514.3 876.6 L513.6 872.7 L513.0 868.8 L512.3 864.9 L511.7 861.0 L511.1 857.1 L510.6 853.2 L510.1 849.2 L509.6 845.3 L509.1 841.4 L508.6 837.4 L508.2 833.5 L507.9 829.5 L507.5 825.6 L507.2 821.6 L506.9 817.7 L506.6 813.7 L506.3 809.7 L506.1 805.7 L505.9 801.7 L505.8 797.8 L505.6 793.8 L505.5 789.8 L505.4 785.8 L505.4 781.8 L505.3 777.8 L505.3 773.8 L505.3 769.7 L505.4 765.7 L505.4 761.7 L505.5 757.7 L505.7 753.7 L505.8 749.7 L506.0 745.7 L506.2 741.6 L506.4 737.6 L506.6 733.6 L506.9 729.6 L507.2 725.5 L507.5 721.5 L507.9 717.5 L508.3 713.5 L508.7 709.4 L509.1 705.4 L509.5 701.4 L510.0 697.4 L510.5 693.4 L511.0 689.4 L511.5 685.3 L512.1 681.3 L512.7 677.3 L513.3 673.3 L513.9 669.3 L514.6 665.3 L515.3 661.3 L516.0 657.3 L516.7 653.3 L517.5 649.3 L518.2 645.3 L519.0 641.4 L519.8 637.4 L520.7 633.4 L521.5 629.4 L522.4 625.5 L523.3 621.5 L524.3 617.6 L525.2 613.6 L526.2 609.7 L527.2 605.7 L528.2 601.8 L529.2 597.9 L530.3 593.9 L531.4 590.0 L532.5 586.1 L533.6 582.2 L534.7 578.3 L535.9 574.5 L537.1 570.6 L538.3 566.7 L539.5 562.9 L540.7 559.0 L542.0 555.2 L543.3 551.3 L544.6 547.5 L545.9 543.7 L547.2 539.9 L548.6 536.1 L550.0 532.3 L551.4 528.5 L552.8 524.7 L554.2 521.0 L555.7 517.2 L557.2 513.5 L558.6 509.7 L560.2 506.0 L561.7 502.3 L563.2 498.6 L564.8 494.9 L566.4 491.3 L568.0 487.6 L569.6 484.0 L571.3 480.3 L572.9 476.7 L574.6 473.1 L576.3 469.5 L578.0 465.9 L579.7 462.4 L581.5 458.8 L583.2 455.3 L585.0 451.7 L586.8 448.2 L588.6 444.7 L590.4 441.2 L592.3 437.8 L594.1 434.3 L596.0 430.9 L597.9 427.4 L599.8 424.0 L601.7 420.6" fill="none" stroke="rgba(160,160,160,0.25)" stroke-width="1.5"/>
<path d="M1259.1 1205.6 L1255.3 1204.4 L1251.6 1203.3 L1247.9 1202.1 L1244.2 1201.0 L1240.5 1199.8 L1236.7 1198.6 L1233.0 1197.4 L1229.3 1196.2 L1225.6 1195.0 L1221.8 1193.7 L1218.1 1192.5 L1214.4 1191.2 L1210.6 1189.9 L1206.9 1188.6 L1203.2 1187.3 L1199.5 1185.9 L1195.7 1184.6 L1192.0 1183.2 L1188.3 1181.9 L1184.6 1180.5 L1180.8 1179.1 L1177.1 1177.7 L1173.4 1176.2 L1169.7 1174.8 L1166.0 1173.3 L1162.3 1171.8 L1158.6 1170.3 L1154.9 1168.8 L1151.2 1167.3 L1147.5 1165.7 L1143.8 1164.2 L1140.1 1162.6 L1136.5 1161.0 L1132.8 1159.4 L1129.1 1157.8 L1125.5 1156.1 L1121.8 1154.5 L1118.2 1152.8 L1114.5 1151.1 L1110.9 1149.4 L1107.3 1147.6 L1103.7 1145.9 L1100.1 1144.1 L1096.5 1142.3 L1092.9 1140.5 L1089.3 1138.7 L1085.8 1136.9 L1082.2 1135.0 L1078.6 1133.1 L1075.1 1131.2 L1071.6 1129.3 L1068.1 1127.4 L1064.5 1125.4 L1061.0 1123.5 L1057.6 1121.5 L1054.1 1119.5 L1050.6 1117.4 L1047.2 1115.4 L1043.7 1113.3 L1040.3 1111.2 L1036.9 1109.1 L1033.5 1107.0 L1030.1 1104.8 L1026.8 1102.6 L1023.4 1100.5 L1020.1 1098.2 L1016.7 1096.0 L1013.4 1093.7 L1010.1 1091.5 L1006.8 1089.2 L1003.6 1086.8 L1000.3 1084.5 L997.1 1082.1 L993.9 1079.7 L990.7 1077.3 L987.5 1074.9 L984.3 1072.5 L981.2 1070.0 L978.0 1067.5 L974.9 1065.0 L971.8 1062.4 L968.8 1059.8 L965.7 1057.2 L962.7 1054.6 L959.7 1052.0 L956.7 1049.3 L953.7 1046.6 L950.7 1043.9 L947.8 1041.2 L944.9 1038.4 L942.0 1035.7 L939.1 1032.9 L936.3 1030.0 L933.4 1027.2 L930.6 1024.3 L927.8 1021.4 L925.1 1018.5 L922.3 1015.5 L919.6 1012.5 L916.9 1009.5 L914.3 1006.5 L911.6 1003.4 L909.0 1000.4 L906.4 997.2 L903.9 994.1 L901.3 991.0 L898.8 987.8 L896.3 984.6 L893.9 981.4 L891.5 978.1 L889.1 974.8 L886.7 971.5 L884.3 968.2 L882.0 964.9 L879.8 961.5 L877.5 958.2 L875.3 954.8 L873.1 951.3 L871.0 947.9 L868.9 944.4 L866.8 941.0 L864.7 937.5 L862.7 934.0 L860.8 930.4 L858.8 926.9 L856.9 923.3 L855.1 919.7 L853.2 916.2 L851.4 912.5 L849.7 908.9 L848.0 905.3 L846.3 901.6 L844.7 897.9 L843.1 894.3 L841.6 890.5 L840.1 886.8 L838.6 883.1 L837.2 879.4 L835.8 875.6 L834.5 871.9 L833.2 868.1 L832.0 864.3 L830.8 860.5 L829.6 856.7 L828.5 852.9 L827.5 849.0 L826.5 845.2 L825.5 841.4 L824.6 837.5 L823.7 833.6 L822.9 829.8 L822.1 825.9 L821.4 822.0 L820.7 818.1 L820.0 814.2 L819.4 810.3 L818.9 806.4 L818.3 802.5 L817.9 798.6 L817.4 794.7 L817.1 790.7 L816.7 786.8 L816.4 782.9 L816.2 778.9 L816.0 775.0 L815.8 771.1 L815.7 767.1 L815.6 763.2 L815.6 759.3 L815.6 755.3 L815.7 751.4 L815.8 747.4 L815.9 743.5 L816.1 739.5 L816.4 735.6 L816.6 731.7 L816.9 727.7 L817.3 723.8 L817.7 719.9 L818.2 716.0 L818.6 712.0 L819.2 708.1 L819.8 704.2 L820.4 700.3 L821.0 696.4 L821.7 692.5 L822.5 688.6 L823.3 684.7 L824.1 680.9 L824.9 677.0 L825.9 673.1 L826.8 669.3 L827.8 665.4 L828.8 661.6 L829.9 657.8 L831.0 653.9 L832.2 650.1 L833.4 646.3 L834.6 642.5 L835.9 638.8 L837.2 635.0 L838.6 631.2 L840.0 627.5 L841.4 623.8 L842.9 620.0 L844.4 616.3 L846.0 612.6 L847.6 609.0 L849.2 605.3 L850.8 601.6 L852.5 598.0 L854.3 594.3 L856.0 590.7 L857.8 587.1 L859.6 583.5 L861.4 579.9 L863.3 576.3 L865.2 572.7 L867.1 569.1 L869.0 565.6 L871.0 562.0 L873.0 558.5 L875.0 554.9 L877.0 551.4 L879.0 547.9 L881.1 544.3 L883.2 540.8 L885.3 537.3 L887.4 533.8 L889.5 530.3 L891.6 526.8 L893.8 523.3 L895.9 519.9 L898.1 516.4 L900.3 512.9 L902.5 509.5 L904.6 506.0 L906.8 502.5 L909.0 499.1 L911.2 495.6 L913.5 492.2 L915.7 488.8 L917.9 485.3 L920.1 481.9 L922.3 478.4 L924.5 475.0 L926.7 471.6 L928.9 468.2 L931.1 464.7 L933.3 461.3 L935.5 457.9 L937.7 454.5 L939.8 451.0 L942.0 447.6 L944.2 444.2 L946.3 440.8 L948.4 437.3 L950.5 433.9 L952.6 430.5 L954.7 427.1 L956.8 423.6 L958.8 420.2 L960.9 416.8 L962.9 413.4 L964.9 409.9 L966.9 406.5 L968.8 403.0 L970.7 399.6 L972.6 396.2 L974.5 392.7 L976.4 389.3 L978.2 385.8 L980.0 382.3 L981.8 378.9 L983.5 375.4 L985.2 371.9 L986.9 368.5 L988.5 365.0 L990.2 361.5 L991.7 358.0 L993.3 354.5 L994.8 351.0 L996.2 347.5 L997.7 344.0 L999.1 340.4 L961.9 325.7 L960.5 329.1 L959.3 332.2 L957.9 335.4 L956.6 338.5 L955.2 341.7 L953.8 344.9 L952.3 348.0 L950.8 351.2 L949.3 354.4 L947.7 357.6 L946.1 360.8 L944.4 364.0 L942.8 367.2 L941.1 370.5 L939.3 373.7 L937.6 376.9 L935.8 380.2 L934.0 383.4 L932.1 386.7 L930.2 389.9 L928.3 393.2 L926.4 396.5 L924.5 399.7 L922.5 403.0 L920.5 406.3 L918.5 409.6 L916.5 413.0 L914.4 416.3 L912.4 419.6 L910.3 422.9 L908.2 426.3 L906.0 429.6 L903.9 433.0 L901.8 436.4 L899.6 439.8 L897.4 443.1 L895.3 446.5 L893.1 449.9 L890.9 453.4 L888.7 456.8 L886.5 460.2 L884.2 463.7 L882.0 467.1 L879.8 470.6 L877.6 474.1 L875.3 477.6 L873.1 481.1 L870.9 484.6 L868.6 488.1 L866.4 491.6 L864.2 495.2 L862.0 498.7 L859.7 502.3 L857.5 505.9 L855.3 509.5 L853.1 513.1 L851.0 516.8 L848.8 520.4 L846.6 524.1 L844.5 527.7 L842.3 531.4 L840.2 535.1 L838.1 538.9 L836.0 542.6 L833.9 546.4 L831.9 550.1 L829.9 553.9 L827.9 557.8 L825.9 561.6 L823.9 565.4 L822.0 569.3 L820.0 573.2 L818.2 577.1 L816.3 581.0 L814.5 585.0 L812.7 589.0 L810.9 593.0 L809.2 597.0 L807.5 601.0 L805.8 605.1 L804.2 609.2 L802.6 613.3 L801.1 617.4 L799.5 621.6 L798.1 625.7 L796.7 629.9 L795.3 634.1 L794.0 638.3 L792.7 642.5 L791.5 646.7 L790.3 651.0 L789.1 655.2 L788.0 659.5 L787.0 663.7 L786.0 668.0 L785.0 672.3 L784.1 676.6 L783.2 680.9 L782.4 685.2 L781.6 689.5 L780.9 693.9 L780.2 698.2 L779.6 702.5 L779.0 706.9 L778.4 711.2 L777.9 715.6 L777.5 719.9 L777.1 724.3 L776.7 728.7 L776.4 733.0 L776.2 737.4 L776.0 741.8 L775.8 746.2 L775.7 750.6 L775.6 754.9 L775.6 759.3 L775.6 763.7 L775.7 768.1 L775.9 772.5 L776.0 776.9 L776.3 781.2 L776.5 785.6 L776.9 790.0 L777.2 794.4 L777.7 798.7 L778.1 803.1 L778.6 807.5 L779.2 811.8 L779.8 816.2 L780.5 820.6 L781.2 824.9 L782.0 829.2 L782.8 833.6 L783.7 837.9 L784.6 842.2 L785.6 846.5 L786.6 850.9 L787.7 855.2 L788.8 859.4 L790.0 863.7 L791.3 868.0 L792.5 872.2 L793.9 876.5 L795.3 880.7 L796.7 884.9 L798.2 889.1 L799.7 893.3 L801.3 897.5 L802.9 901.6 L804.6 905.8 L806.3 909.9 L808.0 913.9 L809.8 918.0 L811.7 922.1 L813.6 926.1 L815.5 930.1 L817.5 934.1 L819.5 938.0 L821.5 942.0 L823.6 945.9 L825.7 949.8 L827.9 953.7 L830.1 957.5 L832.4 961.3 L834.6 965.2 L836.9 968.9 L839.3 972.7 L841.7 976.4 L844.1 980.1 L846.6 983.8 L849.0 987.5 L851.6 991.1 L854.1 994.8 L856.7 998.3 L859.3 1001.9 L861.9 1005.4 L864.6 1009.0 L867.3 1012.4 L870.1 1015.9 L872.8 1019.3 L875.6 1022.7 L878.4 1026.1 L881.3 1029.5 L884.1 1032.8 L887.0 1036.1 L889.9 1039.3 L892.9 1042.6 L895.9 1045.8 L898.8 1048.9 L901.9 1052.1 L904.9 1055.2 L908.0 1058.3 L911.0 1061.4 L914.1 1064.4 L917.3 1067.4 L920.4 1070.4 L923.6 1073.3 L926.8 1076.2 L930.0 1079.1 L933.2 1082.0 L936.4 1084.8 L939.7 1087.7 L943.0 1090.4 L946.3 1093.2 L949.6 1095.9 L953.0 1098.6 L956.3 1101.3 L959.7 1104.0 L963.1 1106.6 L966.5 1109.2 L969.9 1111.8 L973.4 1114.3 L976.8 1116.9 L980.3 1119.4 L983.8 1121.8 L987.3 1124.3 L990.8 1126.7 L994.3 1129.1 L997.8 1131.5 L1001.4 1133.9 L1005.0 1136.2 L1008.5 1138.5 L1012.1 1140.8 L1015.7 1143.1 L1019.4 1145.3 L1023.0 1147.5 L1026.6 1149.7 L1030.3 1151.9 L1033.9 1154.0 L1037.6 1156.2 L1041.3 1158.3 L1045.0 1160.3 L1048.7 1162.4 L1052.4 1164.4 L1056.1 1166.5 L1059.8 1168.5 L1063.6 1170.4 L1067.3 1172.4 L1071.1 1174.3 L1074.8 1176.2 L1078.6 1178.1 L1082.4 1180.0 L1086.2 1181.9 L1090.0 1183.7 L1093.7 1185.5 L1097.5 1187.3 L1101.4 1189.1 L1105.2 1190.8 L1109.0 1192.6 L1112.8 1194.3 L1116.6 1196.0 L1120.5 1197.7 L1124.3 1199.3 L1128.1 1201.0 L1132.0 1202.6 L1135.8 1204.2 L1139.7 1205.8 L1143.5 1207.4 L1147.4 1208.9 L1151.2 1210.5 L1155.1 1212.0 L1158.9 1213.5 L1162.8 1215.0 L1166.6 1216.5 L1170.5 1217.9 L1174.4 1219.4 L1178.2 1220.8 L1182.1 1222.2 L1186.0 1223.6 L1189.8 1225.0 L1193.7 1226.3 L1197.5 1227.7 L1201.4 1229.0 L1205.2 1230.3 L1209.1 1231.6 L1213.0 1232.9 L1216.8 1234.2 L1220.7 1235.4 L1224.5 1236.7 L1228.3 1237.9 L1232.2 1239.1 L1236.0 1240.3 L1239.8 1241.5 L1243.7 1242.7 L1247.4 1243.8 Z" fill="rgba(0,0,0,0.55)" filter="url(#sh8)"/>
<path d="M1259.6 1203.7 L1255.9 1202.5 L1252.2 1201.4 L1248.5 1200.2 L1244.8 1199.1 L1241.1 1197.9 L1237.4 1196.7 L1233.6 1195.5 L1229.9 1194.3 L1226.2 1193.1 L1222.5 1191.8 L1218.7 1190.6 L1215.0 1189.3 L1211.3 1188.0 L1207.6 1186.7 L1203.9 1185.4 L1200.1 1184.1 L1196.4 1182.7 L1192.7 1181.4 L1189.0 1180.0 L1185.3 1178.6 L1181.5 1177.2 L1177.8 1175.8 L1174.1 1174.4 L1170.4 1172.9 L1166.7 1171.5 L1163.0 1170.0 L1159.3 1168.5 L1155.6 1167.0 L1152.0 1165.4 L1148.3 1163.9 L1144.6 1162.3 L1140.9 1160.8 L1137.3 1159.2 L1133.6 1157.6 L1129.9 1155.9 L1126.3 1154.3 L1122.7 1152.7 L1119.0 1151.0 L1115.4 1149.3 L1111.8 1147.6 L1108.2 1145.8 L1104.6 1144.1 L1101.0 1142.3 L1097.4 1140.6 L1093.8 1138.8 L1090.2 1136.9 L1086.7 1135.1 L1083.1 1133.3 L1079.6 1131.4 L1076.1 1129.5 L1072.5 1127.6 L1069.0 1125.6 L1065.5 1123.7 L1062.0 1121.7 L1058.6 1119.7 L1055.1 1117.7 L1051.6 1115.7 L1048.2 1113.7 L1044.8 1111.6 L1041.4 1109.5 L1038.0 1107.4 L1034.6 1105.3 L1031.2 1103.1 L1027.8 1101.0 L1024.5 1098.8 L1021.2 1096.6 L1017.8 1094.3 L1014.5 1092.1 L1011.3 1089.8 L1008.0 1087.5 L1004.7 1085.2 L1001.5 1082.9 L998.3 1080.5 L995.1 1078.1 L991.9 1075.7 L988.7 1073.3 L985.5 1070.9 L982.4 1068.4 L979.3 1065.9 L976.2 1063.4 L973.1 1060.9 L970.0 1058.3 L967.0 1055.7 L964.0 1053.1 L961.0 1050.5 L958.0 1047.8 L955.0 1045.2 L952.1 1042.5 L949.2 1039.7 L946.3 1037.0 L943.4 1034.2 L940.5 1031.4 L937.7 1028.6 L934.9 1025.8 L932.1 1022.9 L929.3 1020.0 L926.5 1017.1 L923.8 1014.2 L921.1 1011.2 L918.4 1008.2 L915.8 1005.2 L913.2 1002.1 L910.6 999.1 L908.0 996.0 L905.4 992.9 L902.9 989.7 L900.4 986.5 L897.9 983.4 L895.5 980.1 L893.1 976.9 L890.7 973.7 L888.3 970.4 L886.0 967.1 L883.7 963.8 L881.4 960.4 L879.2 957.1 L877.0 953.7 L874.8 950.3 L872.7 946.9 L870.6 943.4 L868.5 940.0 L866.5 936.5 L864.5 933.0 L862.5 929.5 L860.6 925.9 L858.7 922.4 L856.8 918.8 L855.0 915.3 L853.2 911.7 L851.5 908.1 L849.8 904.4 L848.1 900.8 L846.5 897.1 L844.9 893.5 L843.4 889.8 L841.9 886.1 L840.5 882.4 L839.1 878.7 L837.7 874.9 L836.4 871.2 L835.1 867.4 L833.9 863.7 L832.7 859.9 L831.5 856.1 L830.4 852.3 L829.4 848.5 L828.4 844.7 L827.4 840.9 L826.5 837.0 L825.7 833.2 L824.8 829.4 L824.1 825.5 L823.3 821.6 L822.6 817.8 L822.0 813.9 L821.4 810.0 L820.8 806.1 L820.3 802.3 L819.9 798.4 L819.4 794.5 L819.1 790.6 L818.7 786.7 L818.4 782.7 L818.2 778.8 L818.0 774.9 L817.8 771.0 L817.7 767.1 L817.6 763.2 L817.6 759.3 L817.6 755.3 L817.7 751.4 L817.8 747.5 L817.9 743.6 L818.1 739.7 L818.4 735.7 L818.6 731.8 L818.9 727.9 L819.3 724.0 L819.7 720.1 L820.1 716.2 L820.6 712.3 L821.2 708.4 L821.7 704.5 L822.3 700.6 L823.0 696.7 L823.7 692.9 L824.4 689.0 L825.2 685.1 L826.0 681.3 L826.9 677.4 L827.8 673.6 L828.7 669.8 L829.7 665.9 L830.8 662.1 L831.8 658.3 L832.9 654.5 L834.1 650.7 L835.3 646.9 L836.5 643.2 L837.8 639.4 L839.1 635.7 L840.5 631.9 L841.9 628.2 L843.3 624.5 L844.8 620.8 L846.3 617.1 L847.8 613.4 L849.4 609.8 L851.0 606.1 L852.7 602.5 L854.3 598.8 L856.1 595.2 L857.8 591.6 L859.6 588.0 L861.4 584.4 L863.2 580.8 L865.1 577.2 L867.0 573.6 L868.9 570.1 L870.8 566.5 L872.7 563.0 L874.7 559.4 L876.7 555.9 L878.7 552.4 L880.8 548.9 L882.8 545.3 L884.9 541.8 L887.0 538.3 L889.1 534.8 L891.2 531.4 L893.3 527.9 L895.5 524.4 L897.6 520.9 L899.8 517.4 L902.0 514.0 L904.1 510.5 L906.3 507.1 L908.5 503.6 L910.7 500.2 L912.9 496.7 L915.1 493.3 L917.3 489.8 L919.6 486.4 L921.8 483.0 L924.0 479.5 L926.2 476.1 L928.4 472.7 L930.6 469.2 L932.8 465.8 L935.0 462.4 L937.2 459.0 L939.4 455.5 L941.5 452.1 L943.7 448.7 L945.9 445.2 L948.0 441.8 L950.1 438.4 L952.2 435.0 L954.3 431.5 L956.4 428.1 L958.5 424.7 L960.6 421.2 L962.6 417.8 L964.6 414.4 L966.6 410.9 L968.6 407.5 L970.6 404.0 L972.5 400.6 L974.4 397.1 L976.3 393.7 L978.1 390.2 L980.0 386.7 L981.8 383.3 L983.6 379.8 L985.3 376.3 L987.0 372.8 L988.7 369.3 L990.4 365.8 L992.0 362.3 L993.6 358.8 L995.1 355.3 L996.6 351.8 L998.1 348.2 L999.5 344.7 L1000.9 341.2 L986.0 335.3 L984.7 338.8 L983.3 342.1 L981.9 345.5 L980.4 348.9 L978.9 352.3 L977.4 355.7 L975.9 359.0 L974.3 362.4 L972.6 365.8 L971.0 369.2 L969.3 372.6 L967.6 375.9 L965.8 379.3 L964.0 382.7 L962.2 386.0 L960.4 389.4 L958.5 392.8 L956.6 396.2 L954.7 399.5 L952.8 402.9 L950.8 406.3 L948.8 409.7 L946.8 413.1 L944.8 416.4 L942.8 419.8 L940.7 423.2 L938.6 426.6 L936.5 430.0 L934.4 433.4 L932.3 436.8 L930.2 440.1 L928.0 443.5 L925.9 446.9 L923.7 450.3 L921.5 453.8 L919.3 457.2 L917.1 460.6 L914.9 464.0 L912.7 467.4 L910.5 470.9 L908.3 474.3 L906.1 477.7 L903.9 481.2 L901.7 484.6 L899.5 488.1 L897.2 491.6 L895.0 495.0 L892.8 498.5 L890.6 502.0 L888.4 505.5 L886.2 509.0 L884.0 512.5 L881.9 516.0 L879.7 519.5 L877.5 523.0 L875.4 526.6 L873.3 530.1 L871.1 533.7 L869.0 537.2 L866.9 540.8 L864.9 544.4 L862.8 548.0 L860.8 551.6 L858.8 555.2 L856.8 558.8 L854.8 562.5 L852.8 566.1 L850.9 569.8 L849.0 573.5 L847.1 577.2 L845.2 580.9 L843.4 584.6 L841.6 588.3 L839.9 592.1 L838.1 595.8 L836.4 599.6 L834.7 603.4 L833.1 607.2 L831.5 611.0 L829.9 614.8 L828.4 618.7 L826.9 622.5 L825.4 626.4 L824.0 630.3 L822.7 634.2 L821.3 638.1 L820.1 642.0 L818.8 646.0 L817.6 649.9 L816.4 653.9 L815.3 657.9 L814.3 661.8 L813.2 665.8 L812.2 669.8 L811.3 673.8 L810.4 677.9 L809.5 681.9 L808.7 685.9 L808.0 690.0 L807.2 694.0 L806.6 698.0 L805.9 702.1 L805.3 706.2 L804.8 710.2 L804.3 714.3 L803.8 718.4 L803.4 722.5 L803.0 726.5 L802.7 730.6 L802.4 734.7 L802.1 738.8 L801.9 742.9 L801.8 747.0 L801.7 751.1 L801.6 755.2 L801.6 759.3 L801.6 763.4 L801.7 767.5 L801.8 771.6 L802.0 775.7 L802.2 779.7 L802.5 783.8 L802.8 787.9 L803.1 792.0 L803.5 796.1 L804.0 800.2 L804.4 804.2 L805.0 808.3 L805.6 812.4 L806.2 816.4 L806.9 820.5 L807.6 824.5 L808.4 828.6 L809.2 832.6 L810.0 836.6 L810.9 840.7 L811.9 844.7 L812.9 848.7 L813.9 852.7 L815.0 856.7 L816.2 860.6 L817.4 864.6 L818.6 868.6 L819.9 872.5 L821.3 876.4 L822.6 880.4 L824.1 884.3 L825.5 888.1 L827.1 892.0 L828.6 895.9 L830.2 899.7 L831.9 903.5 L833.5 907.3 L835.3 911.1 L837.0 914.9 L838.9 918.7 L840.7 922.4 L842.6 926.1 L844.5 929.9 L846.5 933.5 L848.5 937.2 L850.5 940.9 L852.6 944.5 L854.7 948.1 L856.9 951.7 L859.1 955.3 L861.3 958.8 L863.5 962.3 L865.8 965.9 L868.1 969.3 L870.5 972.8 L872.9 976.2 L875.3 979.7 L877.7 983.1 L880.2 986.4 L882.7 989.8 L885.2 993.1 L887.8 996.4 L890.4 999.7 L893.0 1002.9 L895.6 1006.2 L898.3 1009.4 L901.0 1012.5 L903.7 1015.7 L906.5 1018.8 L909.2 1021.9 L912.0 1025.0 L914.9 1028.0 L917.7 1031.0 L920.6 1034.0 L923.4 1037.0 L926.4 1039.9 L929.3 1042.8 L932.2 1045.7 L935.2 1048.6 L938.2 1051.4 L941.2 1054.2 L944.3 1057.0 L947.3 1059.8 L950.4 1062.5 L953.5 1065.2 L956.6 1067.9 L959.7 1070.5 L962.9 1073.2 L966.1 1075.8 L969.3 1078.4 L972.5 1080.9 L975.7 1083.5 L978.9 1086.0 L982.2 1088.5 L985.5 1091.0 L988.8 1093.4 L992.1 1095.8 L995.4 1098.2 L998.8 1100.6 L1002.1 1103.0 L1005.5 1105.3 L1008.9 1107.6 L1012.3 1109.9 L1015.7 1112.1 L1019.1 1114.4 L1022.6 1116.6 L1026.0 1118.8 L1029.5 1121.0 L1033.0 1123.1 L1036.5 1125.3 L1040.0 1127.4 L1043.5 1129.5 L1047.0 1131.6 L1050.6 1133.6 L1054.1 1135.6 L1057.7 1137.7 L1061.3 1139.6 L1064.9 1141.6 L1068.5 1143.6 L1072.1 1145.5 L1075.7 1147.4 L1079.3 1149.3 L1082.9 1151.2 L1086.6 1153.0 L1090.2 1154.9 L1093.9 1156.7 L1097.6 1158.5 L1101.2 1160.3 L1104.9 1162.0 L1108.6 1163.8 L1112.3 1165.5 L1116.0 1167.2 L1119.7 1168.9 L1123.4 1170.6 L1127.1 1172.2 L1130.9 1173.8 L1134.6 1175.5 L1138.3 1177.1 L1142.1 1178.6 L1145.8 1180.2 L1149.6 1181.8 L1153.3 1183.3 L1157.1 1184.8 L1160.8 1186.3 L1164.6 1187.8 L1168.3 1189.3 L1172.1 1190.7 L1175.9 1192.2 L1179.6 1193.6 L1183.4 1195.0 L1187.2 1196.4 L1191.0 1197.8 L1194.7 1199.1 L1198.5 1200.5 L1202.3 1201.8 L1206.1 1203.1 L1209.8 1204.4 L1213.6 1205.7 L1217.4 1207.0 L1221.2 1208.2 L1224.9 1209.5 L1228.7 1210.7 L1232.5 1211.9 L1236.2 1213.1 L1240.0 1214.3 L1243.7 1215.5 L1247.5 1216.7 L1251.3 1217.8 L1255.0 1219.0 Z" fill="#070707"/>
<path d="M1256.8 1213.1 L1253.0 1212.0 L1249.3 1210.9 L1245.6 1209.7 L1241.8 1208.5 L1238.1 1207.3 L1234.3 1206.1 L1230.6 1204.9 L1226.8 1203.7 L1223.1 1202.5 L1219.3 1201.2 L1215.6 1200.0 L1211.8 1198.7 L1208.0 1197.4 L1204.3 1196.1 L1200.5 1194.7 L1196.8 1193.4 L1193.0 1192.0 L1189.3 1190.7 L1185.5 1189.3 L1181.8 1187.9 L1178.0 1186.5 L1174.3 1185.1 L1170.5 1183.6 L1166.8 1182.1 L1163.1 1180.7 L1159.3 1179.2 L1155.6 1177.7 L1151.9 1176.1 L1148.1 1174.6 L1144.4 1173.0 L1140.7 1171.5 L1137.0 1169.9 L1133.3 1168.3 L1129.6 1166.6 L1125.9 1165.0 L1122.2 1163.3 L1118.5 1161.7 L1114.8 1160.0 L1111.2 1158.3 L1107.5 1156.5 L1103.9 1154.8 L1100.2 1153.0 L1096.6 1151.2 L1092.9 1149.4 L1089.3 1147.6 L1085.7 1145.8 L1082.1 1143.9 L1078.5 1142.0 L1074.9 1140.1 L1071.3 1138.2 L1067.8 1136.3 L1064.2 1134.3 L1060.7 1132.4 L1057.1 1130.4 L1053.6 1128.3 L1050.1 1126.3 L1046.6 1124.3 L1043.1 1122.2 L1039.6 1120.1 L1036.2 1118.0 L1032.7 1115.8 L1029.3 1113.7 L1025.8 1111.5 L1022.4 1109.3 L1019.0 1107.1 L1015.7 1104.8 L1012.3 1102.6 L1008.9 1100.3 L1005.6 1098.0 L1002.3 1095.6 L999.0 1093.3 L995.7 1090.9 L992.4 1088.5 L989.1 1086.1 L985.9 1083.6 L982.7 1081.2 L979.4 1078.7 L976.2 1076.2 L973.1 1073.6 L969.9 1071.1 L966.8 1068.5 L963.7 1065.9 L960.6 1063.3 L957.5 1060.6 L954.4 1057.9 L951.4 1055.2 L948.3 1052.5 L945.3 1049.8 L942.4 1047.0 L939.4 1044.2 L936.5 1041.4 L933.5 1038.5 L930.7 1035.6 L927.8 1032.7 L924.9 1029.8 L922.1 1026.8 L919.3 1023.9 L916.5 1020.9 L913.8 1017.8 L911.0 1014.8 L908.3 1011.7 L905.6 1008.6 L903.0 1005.5 L900.3 1002.3 L897.7 999.1 L895.1 995.9 L892.6 992.7 L890.1 989.4 L887.6 986.1 L885.1 982.8 L882.6 979.5 L880.2 976.1 L877.9 972.8 L875.5 969.4 L873.2 965.9 L870.9 962.5 L868.6 959.0 L866.4 955.6 L864.2 952.1 L862.1 948.5 L860.0 945.0 L857.9 941.4 L855.8 937.9 L853.8 934.3 L851.8 930.7 L849.9 927.0 L848.0 923.4 L846.1 919.7 L844.3 916.0 L842.5 912.3 L840.8 908.6 L839.1 904.9 L837.4 901.1 L835.8 897.3 L834.2 893.6 L832.7 889.8 L831.2 886.0 L829.8 882.1 L828.4 878.3 L827.0 874.4 L825.7 870.6 L824.4 866.7 L823.2 862.8 L822.0 858.9 L820.9 855.0 L819.8 851.1 L818.8 847.2 L817.8 843.2 L816.9 839.3 L816.0 835.3 L815.1 831.4 L814.3 827.4 L813.6 823.4 L812.9 819.5 L812.2 815.5 L811.6 811.5 L811.0 807.5 L810.5 803.5 L810.0 799.5 L809.6 795.5 L809.2 791.5 L808.8 787.4 L808.5 783.4 L808.3 779.4 L808.1 775.4 L807.9 771.4 L807.8 767.3 L807.7 763.3 L807.7 759.3 L807.7 755.2 L807.8 751.2 L807.9 747.2 L808.0 743.2 L808.2 739.1 L808.5 735.1 L808.7 731.1 L809.1 727.1 L809.4 723.0 L809.8 719.0 L810.3 715.0 L810.8 711.0 L811.3 707.0 L811.9 703.0 L812.6 699.0 L813.2 695.0 L813.9 691.1 L814.7 687.1 L815.5 683.1 L816.3 679.2 L817.2 675.2 L818.2 671.3 L819.1 667.3 L820.1 663.4 L821.2 659.5 L822.3 655.6 L823.4 651.7 L824.6 647.8 L825.8 643.9 L827.1 640.0 L828.4 636.2 L829.8 632.3 L831.2 628.5 L832.6 624.7 L834.1 620.9 L835.6 617.1 L837.1 613.3 L838.7 609.5 L840.3 605.8 L842.0 602.1 L843.6 598.3 L845.4 594.6 L847.1 590.9 L848.9 587.2 L850.7 583.6 L852.5 579.9 L854.4 576.3 L856.3 572.6 L858.2 569.0 L860.1 565.4 L862.1 561.8 L864.1 558.2 L866.1 554.6 L868.1 551.0 L870.1 547.4 L872.2 543.9 L874.3 540.3 L876.4 536.8 L878.5 533.2 L880.6 529.7 L882.7 526.2 L884.9 522.7 L887.0 519.2 L889.2 515.7 L891.4 512.2 L893.6 508.7 L895.8 505.2 L898.0 501.8 L900.2 498.3 L902.4 494.8 L904.6 491.4 L906.8 487.9 L909.0 484.5 L911.2 481.0 L913.4 477.6 L915.6 474.2 L917.8 470.7 L920.1 467.3 L922.3 463.9 L924.4 460.5 L926.6 457.0 L928.8 453.6 L931.0 450.2 L933.2 446.8 L935.3 443.4 L937.4 440.0 L939.6 436.6 L941.7 433.2 L943.8 429.8 L945.9 426.4 L948.0 423.0 L950.0 419.6 L952.0 416.2 L954.1 412.8 L956.1 409.4 L958.0 406.0 L960.0 402.6 L961.9 399.2 L963.8 395.8 L965.7 392.3 L967.6 388.9 L969.4 385.5 L971.2 382.1 L973.0 378.7 L974.7 375.3 L976.4 371.9 L978.1 368.5 L979.7 365.0 L981.4 361.6 L982.9 358.2 L984.5 354.8 L986.0 351.3 L987.5 347.9 L988.9 344.5 L990.3 341.0 L991.7 337.5" fill="none" stroke="rgba(90,90,90,0.5)" stroke-width="1.2"/>
<path d="M1259.9 1202.7 L1256.2 1201.6 L1252.5 1200.4 L1248.8 1199.3 L1245.1 1198.1 L1241.4 1196.9 L1237.7 1195.8 L1233.9 1194.6 L1230.2 1193.3 L1226.5 1192.1 L1222.8 1190.9 L1219.1 1189.6 L1215.3 1188.3 L1211.6 1187.1 L1207.9 1185.8 L1204.2 1184.4 L1200.5 1183.1 L1196.8 1181.8 L1193.0 1180.4 L1189.3 1179.1 L1185.6 1177.7 L1181.9 1176.3 L1178.2 1174.9 L1174.5 1173.4 L1170.8 1172.0 L1167.1 1170.5 L1163.4 1169.0 L1159.7 1167.6 L1156.0 1166.0 L1152.3 1164.5 L1148.7 1163.0 L1145.0 1161.4 L1141.3 1159.9 L1137.7 1158.3 L1134.0 1156.7 L1130.4 1155.0 L1126.7 1153.4 L1123.1 1151.7 L1119.4 1150.1 L1115.8 1148.4 L1112.2 1146.7 L1108.6 1144.9 L1105.0 1143.2 L1101.4 1141.4 L1097.8 1139.7 L1094.3 1137.9 L1090.7 1136.1 L1087.1 1134.2 L1083.6 1132.4 L1080.1 1130.5 L1076.5 1128.6 L1073.0 1126.7 L1069.5 1124.8 L1066.0 1122.8 L1062.5 1120.9 L1059.1 1118.9 L1055.6 1116.9 L1052.2 1114.9 L1048.7 1112.8 L1045.3 1110.7 L1041.9 1108.7 L1038.5 1106.6 L1035.1 1104.4 L1031.7 1102.3 L1028.4 1100.1 L1025.0 1097.9 L1021.7 1095.7 L1018.4 1093.5 L1015.1 1091.3 L1011.8 1089.0 L1008.6 1086.7 L1005.3 1084.4 L1002.1 1082.1 L998.9 1079.7 L995.7 1077.3 L992.5 1074.9 L989.3 1072.5 L986.2 1070.1 L983.0 1067.6 L979.9 1065.1 L976.8 1062.6 L973.7 1060.1 L970.7 1057.5 L967.7 1055.0 L964.6 1052.4 L961.6 1049.7 L958.7 1047.1 L955.7 1044.4 L952.8 1041.7 L949.8 1039.0 L946.9 1036.3 L944.1 1033.5 L941.2 1030.7 L938.4 1027.9 L935.6 1025.1 L932.8 1022.2 L930.0 1019.3 L927.3 1016.4 L924.6 1013.5 L921.9 1010.5 L919.2 1007.5 L916.5 1004.5 L913.9 1001.5 L911.3 998.4 L908.7 995.3 L906.2 992.2 L903.7 989.1 L901.2 985.9 L898.7 982.7 L896.3 979.5 L893.9 976.3 L891.5 973.1 L889.1 969.8 L886.8 966.5 L884.5 963.2 L882.2 959.9 L880.0 956.5 L877.8 953.1 L875.7 949.7 L873.5 946.3 L871.4 942.9 L869.4 939.4 L867.3 936.0 L865.3 932.5 L863.4 929.0 L861.5 925.5 L859.6 921.9 L857.7 918.4 L855.9 914.8 L854.1 911.2 L852.4 907.6 L850.7 904.0 L849.1 900.4 L847.4 896.7 L845.9 893.1 L844.3 889.4 L842.8 885.7 L841.4 882.0 L840.0 878.3 L838.6 874.6 L837.3 870.9 L836.0 867.1 L834.8 863.4 L833.6 859.6 L832.5 855.8 L831.4 852.1 L830.4 848.3 L829.4 844.5 L828.4 840.6 L827.5 836.8 L826.6 833.0 L825.8 829.2 L825.0 825.3 L824.3 821.5 L823.6 817.6 L823.0 813.7 L822.4 809.9 L821.8 806.0 L821.3 802.1 L820.9 798.2 L820.4 794.4 L820.1 790.5 L819.7 786.6 L819.4 782.7 L819.2 778.8 L819.0 774.9 L818.8 771.0 L818.7 767.1 L818.6 763.2 L818.6 759.2 L818.6 755.3 L818.7 751.4 L818.8 747.5 L818.9 743.6 L819.1 739.7 L819.3 735.8 L819.6 731.9 L819.9 728.0 L820.3 724.1 L820.7 720.2 L821.1 716.3 L821.6 712.4 L822.1 708.5 L822.7 704.7 L823.3 700.8 L824.0 696.9 L824.7 693.0 L825.4 689.2 L826.2 685.3 L827.0 681.5 L827.9 677.7 L828.8 673.8 L829.7 670.0 L830.7 666.2 L831.7 662.4 L832.8 658.6 L833.9 654.8 L835.0 651.0 L836.2 647.2 L837.5 643.5 L838.7 639.7 L840.0 636.0 L841.4 632.3 L842.8 628.6 L844.2 624.9 L845.7 621.2 L847.2 617.5 L848.7 613.8 L850.3 610.2 L851.9 606.5 L853.6 602.9 L855.3 599.3 L857.0 595.6 L858.7 592.0 L860.5 588.4 L862.3 584.8 L864.1 581.3 L866.0 577.7 L867.8 574.1 L869.7 570.6 L871.7 567.0 L873.6 563.5 L875.6 559.9 L877.6 556.4 L879.6 552.9 L881.6 549.4 L883.7 545.8 L885.8 542.3 L887.8 538.8 L889.9 535.4 L892.1 531.9 L894.2 528.4 L896.3 524.9 L898.5 521.4 L900.6 518.0 L902.8 514.5 L905.0 511.1 L907.2 507.6 L909.4 504.1 L911.6 500.7 L913.8 497.3 L916.0 493.8 L918.2 490.4 L920.4 486.9 L922.6 483.5 L924.8 480.1 L927.0 476.6 L929.2 473.2 L931.4 469.8 L933.6 466.3 L935.8 462.9 L938.0 459.5 L940.2 456.1 L942.4 452.6 L944.5 449.2 L946.7 445.8 L948.8 442.4 L951.0 438.9 L953.1 435.5 L955.2 432.1 L957.3 428.6 L959.4 425.2 L961.4 421.7 L963.5 418.3 L965.5 414.9 L967.5 411.4 L969.5 408.0 L971.4 404.5 L973.4 401.1 L975.3 397.6 L977.2 394.1 L979.0 390.7 L980.9 387.2 L982.7 383.7 L984.4 380.2 L986.2 376.7 L987.9 373.2 L989.6 369.7 L991.3 366.2 L992.9 362.7 L994.5 359.2 L996.0 355.7 L997.5 352.2 L999.0 348.6 L1000.5 345.1 L1001.9 341.5" fill="none" stroke="rgba(160,160,160,0.25)" stroke-width="1.5"/>
<path d="M1829.3 1224.1 L1825.7 1222.3 L1822.0 1220.5 L1818.4 1218.8 L1814.7 1217.0 L1811.0 1215.3 L1807.4 1213.6 L1803.7 1211.8 L1800.1 1210.1 L1796.4 1208.4 L1792.8 1206.7 L1789.1 1205.0 L1785.4 1203.3 L1781.8 1201.6 L1778.1 1199.9 L1774.5 1198.3 L1770.8 1196.6 L1767.2 1194.9 L1763.5 1193.3 L1759.8 1191.6 L1756.2 1190.0 L1752.5 1188.3 L1748.9 1186.7 L1745.2 1185.0 L1741.6 1183.4 L1737.9 1181.8 L1734.3 1180.2 L1730.6 1178.5 L1726.9 1176.9 L1723.3 1175.3 L1719.6 1173.7 L1716.0 1172.1 L1712.3 1170.5 L1708.7 1168.9 L1705.0 1167.3 L1701.4 1165.8 L1697.7 1164.2 L1694.0 1162.6 L1690.4 1161.0 L1686.7 1159.5 L1683.1 1157.9 L1679.4 1156.3 L1675.8 1154.8 L1672.1 1153.2 L1668.5 1151.6 L1664.8 1150.1 L1661.2 1148.5 L1657.5 1147.0 L1653.8 1145.4 L1650.2 1143.9 L1646.5 1142.4 L1642.9 1140.8 L1639.2 1139.3 L1635.6 1137.7 L1631.9 1136.2 L1628.3 1134.7 L1624.6 1133.1 L1620.9 1131.6 L1617.3 1130.0 L1613.6 1128.5 L1610.0 1127.0 L1606.3 1125.4 L1602.7 1123.9 L1599.0 1122.4 L1595.4 1120.9 L1591.7 1119.3 L1588.1 1117.8 L1584.4 1116.3 L1580.7 1114.7 L1577.1 1113.2 L1573.4 1111.7 L1569.8 1110.1 L1566.1 1108.6 L1562.5 1107.1 L1558.8 1105.5 L1555.2 1104.0 L1551.5 1102.4 L1547.8 1100.9 L1544.2 1099.4 L1540.5 1097.8 L1536.9 1096.3 L1533.2 1094.7 L1529.6 1093.2 L1525.9 1091.6 L1522.2 1090.1 L1518.6 1088.5 L1514.9 1087.0 L1511.3 1085.4 L1507.6 1083.8 L1504.0 1082.3 L1500.3 1080.7 L1496.6 1079.1 L1493.0 1077.6 L1489.3 1076.0 L1485.7 1074.4 L1482.0 1072.8 L1478.3 1071.2 L1474.7 1069.7 L1471.0 1068.1 L1467.4 1066.5 L1463.7 1064.9 L1460.0 1063.3 L1456.4 1061.6 L1452.7 1060.0 L1449.1 1058.4 L1445.4 1056.8 L1441.7 1055.2 L1438.1 1053.5 L1434.4 1051.9 L1430.8 1050.3 L1427.1 1048.6 L1423.4 1047.0 L1419.8 1045.3 L1416.1 1043.6 L1412.4 1042.0 L1408.8 1040.3 L1405.1 1038.6 L1401.4 1036.9 L1397.8 1035.2 L1394.1 1033.5 L1390.5 1031.8 L1386.8 1030.1 L1383.1 1028.4 L1379.5 1026.7 L1375.8 1024.9 L1372.1 1023.2 L1368.5 1021.4 L1364.8 1019.7 L1361.2 1017.9 L1357.5 1016.1 L1353.9 1014.3 L1350.2 1012.5 L1346.6 1010.7 L1342.9 1008.9 L1339.3 1007.0 L1335.7 1005.2 L1332.1 1003.3 L1328.5 1001.4 L1324.9 999.5 L1321.3 997.6 L1317.8 995.6 L1314.2 993.7 L1310.7 991.7 L1307.1 989.7 L1303.6 987.7 L1300.1 985.6 L1296.6 983.6 L1293.2 981.5 L1289.7 979.4 L1286.3 977.3 L1282.9 975.1 L1279.5 972.9 L1276.1 970.7 L1272.7 968.5 L1269.4 966.3 L1266.0 964.0 L1262.7 961.7 L1259.5 959.3 L1256.2 957.0 L1253.0 954.6 L1249.8 952.2 L1246.6 949.7 L1243.4 947.2 L1240.3 944.7 L1237.2 942.2 L1234.1 939.6 L1231.1 937.0 L1228.0 934.3 L1225.0 931.7 L1222.1 928.9 L1219.2 926.2 L1216.3 923.4 L1213.4 920.6 L1210.6 917.7 L1207.8 914.8 L1205.0 911.9 L1202.3 908.9 L1199.6 905.9 L1196.9 902.8 L1194.3 899.8 L1191.7 896.7 L1189.1 893.5 L1186.6 890.3 L1184.2 887.1 L1181.7 883.9 L1179.4 880.6 L1177.0 877.3 L1174.7 874.0 L1172.4 870.6 L1170.2 867.3 L1168.1 863.9 L1165.9 860.4 L1163.9 857.0 L1161.8 853.5 L1159.8 850.0 L1157.9 846.4 L1156.0 842.9 L1154.2 839.3 L1152.4 835.7 L1150.6 832.1 L1148.9 828.5 L1147.3 824.8 L1145.7 821.1 L1144.2 817.4 L1142.7 813.7 L1141.3 810.0 L1139.9 806.3 L1138.6 802.5 L1137.3 798.8 L1136.1 795.0 L1135.0 791.2 L1133.9 787.4 L1132.9 783.5 L1131.9 779.7 L1131.0 775.9 L1130.2 772.0 L1129.4 768.2 L1128.7 764.3 L1128.0 760.4 L1127.4 756.6 L1126.9 752.7 L1126.4 748.8 L1126.0 744.9 L1125.7 741.0 L1125.4 737.1 L1125.3 733.2 L1125.1 729.3 L1125.1 725.4 L1125.1 721.4 L1125.2 717.5 L1125.3 713.6 L1125.6 709.7 L1125.9 705.8 L1126.3 701.9 L1126.7 698.0 L1127.2 694.1 L1127.8 690.2 L1128.5 686.4 L1129.2 682.5 L1130.0 678.6 L1130.9 674.8 L1131.8 670.9 L1132.8 667.1 L1133.9 663.2 L1135.0 659.4 L1136.2 655.6 L1137.4 651.8 L1138.7 648.0 L1140.1 644.2 L1141.5 640.4 L1143.0 636.6 L1144.5 632.8 L1146.0 629.1 L1147.6 625.3 L1149.3 621.6 L1151.0 617.9 L1152.7 614.2 L1154.5 610.5 L1156.3 606.8 L1158.2 603.1 L1160.1 599.5 L1162.1 595.8 L1164.0 592.2 L1166.1 588.6 L1168.1 585.0 L1170.2 581.4 L1172.3 577.8 L1174.4 574.3 L1176.6 570.7 L1178.8 567.2 L1181.0 563.7 L1183.3 560.2 L1185.5 556.7 L1187.8 553.2 L1190.2 549.8 L1192.5 546.4 L1194.8 542.9 L1197.2 539.6 L1199.6 536.2 L1202.0 532.8 L1204.4 529.5 L1206.8 526.2 L1209.2 522.9 L1211.6 519.6 L1214.1 516.3 L1216.5 513.1 L1219.0 509.9 L1221.4 506.7 L1223.9 503.5 L1226.3 500.4 L1228.8 497.2 L1231.2 494.1 L1233.7 491.1 L1236.1 488.0 L1238.5 485.0 L1241.0 481.9 L1243.4 479.0 L1245.8 476.0 L1248.2 473.1 L1250.5 470.1 L1228.9 452.4 L1226.5 455.4 L1224.0 458.3 L1221.6 461.3 L1219.2 464.4 L1216.7 467.4 L1214.2 470.5 L1211.7 473.6 L1209.3 476.8 L1206.8 479.9 L1204.3 483.1 L1201.7 486.4 L1199.2 489.6 L1196.7 492.9 L1194.2 496.2 L1191.7 499.5 L1189.2 502.9 L1186.7 506.2 L1184.2 509.6 L1181.7 513.1 L1179.2 516.5 L1176.7 520.0 L1174.3 523.5 L1171.8 527.0 L1169.4 530.5 L1166.9 534.1 L1164.5 537.7 L1162.1 541.3 L1159.8 545.0 L1157.4 548.6 L1155.1 552.3 L1152.8 556.0 L1150.5 559.7 L1148.3 563.5 L1146.0 567.2 L1143.8 571.0 L1141.7 574.8 L1139.5 578.7 L1137.4 582.5 L1135.3 586.4 L1133.3 590.3 L1131.3 594.2 L1129.4 598.2 L1127.4 602.1 L1125.6 606.1 L1123.7 610.1 L1122.0 614.1 L1120.2 618.2 L1118.5 622.3 L1116.9 626.4 L1115.3 630.5 L1113.8 634.6 L1112.3 638.7 L1110.9 642.9 L1109.5 647.1 L1108.2 651.3 L1107.0 655.6 L1105.8 659.8 L1104.7 664.1 L1103.6 668.4 L1102.7 672.7 L1101.8 677.0 L1100.9 681.4 L1100.2 685.7 L1099.5 690.1 L1098.9 694.5 L1098.4 698.9 L1098.0 703.4 L1097.6 707.8 L1097.4 712.2 L1097.2 716.6 L1097.1 721.1 L1097.1 725.5 L1097.1 729.9 L1097.3 734.3 L1097.5 738.7 L1097.8 743.1 L1098.2 747.5 L1098.6 751.8 L1099.1 756.2 L1099.7 760.5 L1100.4 764.9 L1101.1 769.2 L1101.9 773.5 L1102.8 777.8 L1103.7 782.1 L1104.7 786.3 L1105.8 790.6 L1106.9 794.8 L1108.1 799.0 L1109.4 803.2 L1110.7 807.4 L1112.1 811.6 L1113.5 815.7 L1115.0 819.8 L1116.6 823.9 L1118.2 828.0 L1119.9 832.1 L1121.7 836.1 L1123.5 840.1 L1125.3 844.1 L1127.2 848.0 L1129.2 852.0 L1131.2 855.9 L1133.3 859.8 L1135.4 863.6 L1137.5 867.4 L1139.8 871.2 L1142.0 875.0 L1144.3 878.7 L1146.7 882.5 L1149.1 886.1 L1151.6 889.8 L1154.1 893.4 L1156.6 897.0 L1159.2 900.5 L1161.9 904.1 L1164.6 907.5 L1167.3 911.0 L1170.0 914.4 L1172.8 917.8 L1175.7 921.1 L1178.6 924.4 L1181.5 927.7 L1184.5 930.9 L1187.5 934.1 L1190.5 937.3 L1193.6 940.4 L1196.7 943.5 L1199.9 946.5 L1203.0 949.5 L1206.2 952.4 L1209.5 955.3 L1212.7 958.1 L1216.0 961.0 L1219.3 963.7 L1222.7 966.5 L1226.0 969.2 L1229.4 971.8 L1232.8 974.4 L1236.2 977.0 L1239.7 979.6 L1243.1 982.1 L1246.6 984.6 L1250.1 987.0 L1253.6 989.4 L1257.2 991.8 L1260.7 994.2 L1264.3 996.5 L1267.9 998.8 L1271.5 1001.0 L1275.1 1003.3 L1278.7 1005.5 L1282.3 1007.6 L1286.0 1009.8 L1289.6 1011.9 L1293.3 1014.0 L1297.0 1016.1 L1300.6 1018.2 L1304.3 1020.2 L1308.0 1022.2 L1311.7 1024.2 L1315.4 1026.2 L1319.1 1028.1 L1322.8 1030.0 L1326.6 1032.0 L1330.3 1033.8 L1334.0 1035.7 L1337.7 1037.6 L1341.5 1039.4 L1345.2 1041.3 L1348.9 1043.1 L1352.6 1044.9 L1356.4 1046.7 L1360.1 1048.5 L1363.8 1050.2 L1367.5 1052.0 L1371.2 1053.7 L1374.9 1055.5 L1378.6 1057.2 L1382.3 1058.9 L1386.0 1060.6 L1389.7 1062.3 L1393.4 1064.0 L1397.1 1065.7 L1400.8 1067.4 L1404.5 1069.1 L1408.2 1070.8 L1411.9 1072.5 L1415.6 1074.1 L1419.3 1075.8 L1423.0 1077.4 L1426.7 1079.1 L1430.3 1080.7 L1434.0 1082.4 L1437.7 1084.0 L1441.4 1085.6 L1445.1 1087.3 L1448.8 1088.9 L1452.5 1090.5 L1456.1 1092.1 L1459.8 1093.7 L1463.5 1095.3 L1467.2 1096.9 L1470.9 1098.5 L1474.5 1100.1 L1478.2 1101.7 L1481.9 1103.3 L1485.6 1104.9 L1489.3 1106.5 L1492.9 1108.0 L1496.6 1109.6 L1500.3 1111.2 L1504.0 1112.7 L1507.6 1114.3 L1511.3 1115.9 L1515.0 1117.4 L1518.6 1119.0 L1522.3 1120.5 L1526.0 1122.1 L1529.6 1123.6 L1533.3 1125.2 L1537.0 1126.7 L1540.6 1128.3 L1544.3 1129.8 L1548.0 1131.3 L1551.6 1132.9 L1555.3 1134.4 L1558.9 1135.9 L1562.6 1137.5 L1566.3 1139.0 L1569.9 1140.5 L1573.6 1142.1 L1577.2 1143.6 L1580.9 1145.1 L1584.5 1146.7 L1588.2 1148.2 L1591.9 1149.7 L1595.5 1151.3 L1599.2 1152.8 L1602.8 1154.3 L1606.5 1155.9 L1610.1 1157.4 L1613.8 1158.9 L1617.4 1160.5 L1621.1 1162.0 L1624.7 1163.5 L1628.3 1165.1 L1632.0 1166.6 L1635.6 1168.1 L1639.3 1169.7 L1642.9 1171.2 L1646.6 1172.8 L1650.2 1174.3 L1653.9 1175.9 L1657.5 1177.4 L1661.1 1179.0 L1664.8 1180.5 L1668.4 1182.1 L1672.0 1183.6 L1675.7 1185.2 L1679.3 1186.8 L1683.0 1188.3 L1686.6 1189.9 L1690.2 1191.5 L1693.9 1193.0 L1697.5 1194.6 L1701.1 1196.2 L1704.8 1197.8 L1708.4 1199.4 L1712.0 1201.0 L1715.7 1202.6 L1719.3 1204.2 L1722.9 1205.8 L1726.6 1207.4 L1730.2 1209.0 L1733.8 1210.6 L1737.4 1212.2 L1741.1 1213.9 L1744.7 1215.5 L1748.3 1217.1 L1751.9 1218.8 L1755.6 1220.4 L1759.2 1222.1 L1762.8 1223.7 L1766.4 1225.4 L1770.1 1227.0 L1773.7 1228.7 L1777.3 1230.4 L1780.9 1232.1 L1784.6 1233.8 L1788.2 1235.5 L1791.8 1237.2 L1795.4 1238.9 L1799.0 1240.6 L1802.7 1242.3 L1806.3 1244.0 L1809.9 1245.8 L1813.5 1247.5 L1817.2 1249.3 Z" fill="rgba(0,0,0,0.3)" filter="url(#sh8)"/>
<path d="M1829.8 1223.2 L1826.1 1221.4 L1822.5 1219.6 L1818.8 1217.9 L1815.1 1216.1 L1811.5 1214.4 L1807.8 1212.7 L1804.2 1210.9 L1800.5 1209.2 L1796.8 1207.5 L1793.2 1205.8 L1789.5 1204.1 L1785.9 1202.4 L1782.2 1200.7 L1778.5 1199.0 L1774.9 1197.3 L1771.2 1195.7 L1767.6 1194.0 L1763.9 1192.3 L1760.3 1190.7 L1756.6 1189.0 L1752.9 1187.4 L1749.3 1185.8 L1745.6 1184.1 L1742.0 1182.5 L1738.3 1180.9 L1734.7 1179.2 L1731.0 1177.6 L1727.3 1176.0 L1723.7 1174.4 L1720.0 1172.8 L1716.4 1171.2 L1712.7 1169.6 L1709.1 1168.0 L1705.4 1166.4 L1701.8 1164.8 L1698.1 1163.3 L1694.4 1161.7 L1690.8 1160.1 L1687.1 1158.5 L1683.5 1157.0 L1679.8 1155.4 L1676.2 1153.8 L1672.5 1152.3 L1668.9 1150.7 L1665.2 1149.2 L1661.5 1147.6 L1657.9 1146.1 L1654.2 1144.5 L1650.6 1143.0 L1646.9 1141.4 L1643.3 1139.9 L1639.6 1138.3 L1636.0 1136.8 L1632.3 1135.3 L1628.6 1133.7 L1625.0 1132.2 L1621.3 1130.7 L1617.7 1129.1 L1614.0 1127.6 L1610.4 1126.1 L1606.7 1124.5 L1603.1 1123.0 L1599.4 1121.5 L1595.8 1119.9 L1592.1 1118.4 L1588.4 1116.9 L1584.8 1115.3 L1581.1 1113.8 L1577.5 1112.3 L1573.8 1110.7 L1570.2 1109.2 L1566.5 1107.7 L1562.9 1106.1 L1559.2 1104.6 L1555.5 1103.1 L1551.9 1101.5 L1548.2 1100.0 L1544.6 1098.4 L1540.9 1096.9 L1537.3 1095.4 L1533.6 1093.8 L1529.9 1092.3 L1526.3 1090.7 L1522.6 1089.2 L1519.0 1087.6 L1515.3 1086.1 L1511.7 1084.5 L1508.0 1082.9 L1504.3 1081.4 L1500.7 1079.8 L1497.0 1078.2 L1493.4 1076.7 L1489.7 1075.1 L1486.1 1073.5 L1482.4 1071.9 L1478.7 1070.3 L1475.1 1068.7 L1471.4 1067.1 L1467.8 1065.6 L1464.1 1063.9 L1460.4 1062.3 L1456.8 1060.7 L1453.1 1059.1 L1449.5 1057.5 L1445.8 1055.9 L1442.1 1054.3 L1438.5 1052.6 L1434.8 1051.0 L1431.2 1049.3 L1427.5 1047.7 L1423.8 1046.0 L1420.2 1044.4 L1416.5 1042.7 L1412.9 1041.0 L1409.2 1039.4 L1405.5 1037.7 L1401.9 1036.0 L1398.2 1034.3 L1394.5 1032.6 L1390.9 1030.9 L1387.2 1029.2 L1383.5 1027.5 L1379.9 1025.8 L1376.2 1024.0 L1372.6 1022.3 L1368.9 1020.5 L1365.2 1018.8 L1361.6 1017.0 L1357.9 1015.2 L1354.3 1013.4 L1350.7 1011.6 L1347.0 1009.8 L1343.4 1008.0 L1339.8 1006.1 L1336.2 1004.3 L1332.6 1002.4 L1329.0 1000.5 L1325.4 998.6 L1321.8 996.7 L1318.3 994.8 L1314.7 992.8 L1311.2 990.8 L1307.6 988.8 L1304.1 986.8 L1300.6 984.8 L1297.2 982.7 L1293.7 980.6 L1290.2 978.5 L1286.8 976.4 L1283.4 974.3 L1280.0 972.1 L1276.6 969.9 L1273.3 967.7 L1269.9 965.4 L1266.6 963.2 L1263.3 960.9 L1260.1 958.5 L1256.8 956.2 L1253.6 953.8 L1250.4 951.4 L1247.2 948.9 L1244.0 946.5 L1240.9 943.9 L1237.8 941.4 L1234.8 938.8 L1231.7 936.2 L1228.7 933.6 L1225.7 930.9 L1222.8 928.2 L1219.8 925.5 L1217.0 922.7 L1214.1 919.9 L1211.3 917.0 L1208.5 914.1 L1205.7 911.2 L1203.0 908.2 L1200.3 905.2 L1197.7 902.2 L1195.0 899.1 L1192.5 896.0 L1189.9 892.9 L1187.4 889.7 L1185.0 886.5 L1182.5 883.3 L1180.2 880.0 L1177.8 876.7 L1175.5 873.4 L1173.3 870.1 L1171.1 866.7 L1168.9 863.3 L1166.8 859.9 L1164.7 856.4 L1162.7 853.0 L1160.7 849.5 L1158.8 846.0 L1156.9 842.4 L1155.0 838.9 L1153.3 835.3 L1151.5 831.7 L1149.8 828.0 L1148.2 824.4 L1146.6 820.7 L1145.1 817.1 L1143.6 813.4 L1142.2 809.7 L1140.8 805.9 L1139.5 802.2 L1138.3 798.4 L1137.1 794.7 L1135.9 790.9 L1134.9 787.1 L1133.8 783.3 L1132.9 779.5 L1132.0 775.7 L1131.1 771.8 L1130.4 768.0 L1129.6 764.1 L1129.0 760.3 L1128.4 756.4 L1127.9 752.5 L1127.4 748.7 L1127.0 744.8 L1126.7 740.9 L1126.4 737.0 L1126.3 733.1 L1126.1 729.2 L1126.1 725.3 L1126.1 721.5 L1126.2 717.6 L1126.3 713.7 L1126.6 709.8 L1126.9 705.9 L1127.2 702.0 L1127.7 698.1 L1128.2 694.3 L1128.8 690.4 L1129.5 686.5 L1130.2 682.7 L1131.0 678.8 L1131.9 675.0 L1132.8 671.1 L1133.8 667.3 L1134.9 663.5 L1136.0 659.7 L1137.2 655.9 L1138.4 652.1 L1139.7 648.3 L1141.0 644.5 L1142.4 640.7 L1143.9 637.0 L1145.4 633.2 L1146.9 629.5 L1148.5 625.7 L1150.2 622.0 L1151.9 618.3 L1153.6 614.6 L1155.4 610.9 L1157.2 607.3 L1159.1 603.6 L1161.0 599.9 L1162.9 596.3 L1164.9 592.7 L1166.9 589.1 L1169.0 585.5 L1171.0 581.9 L1173.2 578.3 L1175.3 574.8 L1177.5 571.2 L1179.7 567.7 L1181.9 564.2 L1184.1 560.7 L1186.4 557.2 L1188.7 553.8 L1191.0 550.3 L1193.3 546.9 L1195.7 543.5 L1198.0 540.1 L1200.4 536.8 L1202.8 533.4 L1205.2 530.1 L1207.6 526.8 L1210.0 523.5 L1212.4 520.2 L1214.9 516.9 L1217.3 513.7 L1219.8 510.5 L1222.2 507.3 L1224.7 504.1 L1227.1 501.0 L1229.6 497.9 L1232.0 494.8 L1234.4 491.7 L1236.9 488.6 L1239.3 485.6 L1241.7 482.6 L1244.2 479.6 L1246.6 476.6 L1248.9 473.7 L1251.3 470.8 L1238.9 460.7 L1236.5 463.6 L1234.1 466.5 L1231.7 469.5 L1229.3 472.5 L1226.8 475.6 L1224.4 478.6 L1221.9 481.7 L1219.5 484.8 L1217.0 488.0 L1214.5 491.1 L1212.0 494.3 L1209.5 497.5 L1207.1 500.8 L1204.6 504.0 L1202.1 507.3 L1199.6 510.6 L1197.1 514.0 L1194.7 517.3 L1192.2 520.7 L1189.8 524.1 L1187.3 527.5 L1184.9 530.9 L1182.5 534.4 L1180.1 537.9 L1177.7 541.4 L1175.4 544.9 L1173.0 548.5 L1170.7 552.0 L1168.4 555.6 L1166.1 559.2 L1163.8 562.8 L1161.6 566.5 L1159.4 570.1 L1157.2 573.8 L1155.1 577.5 L1153.0 581.2 L1150.9 585.0 L1148.9 588.7 L1146.8 592.5 L1144.9 596.3 L1142.9 600.1 L1141.0 603.9 L1139.2 607.7 L1137.4 611.6 L1135.6 615.5 L1133.9 619.3 L1132.2 623.3 L1130.6 627.2 L1129.0 631.1 L1127.5 635.1 L1126.0 639.0 L1124.6 643.0 L1123.2 647.0 L1121.9 651.0 L1120.7 655.1 L1119.5 659.1 L1118.4 663.2 L1117.3 667.3 L1116.3 671.3 L1115.4 675.4 L1114.5 679.6 L1113.7 683.7 L1113.0 687.8 L1112.4 692.0 L1111.8 696.1 L1111.3 700.3 L1110.9 704.5 L1110.6 708.7 L1110.4 712.9 L1110.2 717.1 L1110.1 721.2 L1110.1 725.4 L1110.1 729.6 L1110.3 733.8 L1110.5 737.9 L1110.7 742.1 L1111.1 746.3 L1111.5 750.4 L1112.0 754.6 L1112.6 758.7 L1113.2 762.8 L1113.9 766.9 L1114.7 771.0 L1115.5 775.1 L1116.4 779.2 L1117.3 783.3 L1118.4 787.3 L1119.4 791.4 L1120.6 795.4 L1121.8 799.4 L1123.1 803.4 L1124.4 807.4 L1125.8 811.3 L1127.2 815.3 L1128.7 819.2 L1130.3 823.1 L1131.9 827.0 L1133.6 830.9 L1135.3 834.7 L1137.1 838.5 L1138.9 842.3 L1140.8 846.1 L1142.7 849.8 L1144.7 853.6 L1146.7 857.3 L1148.8 861.0 L1150.9 864.6 L1153.1 868.2 L1155.4 871.8 L1157.6 875.4 L1160.0 878.9 L1162.3 882.5 L1164.7 885.9 L1167.2 889.4 L1169.7 892.8 L1172.2 896.2 L1174.8 899.6 L1177.4 902.9 L1180.1 906.2 L1182.8 909.4 L1185.5 912.6 L1188.3 915.8 L1191.1 919.0 L1194.0 922.1 L1196.9 925.2 L1199.8 928.2 L1202.8 931.2 L1205.8 934.1 L1208.8 937.1 L1211.9 939.9 L1215.0 942.8 L1218.1 945.6 L1221.2 948.3 L1224.4 951.0 L1227.6 953.7 L1230.8 956.4 L1234.1 959.0 L1237.4 961.6 L1240.7 964.1 L1244.0 966.6 L1247.3 969.1 L1250.7 971.5 L1254.1 973.9 L1257.5 976.3 L1260.9 978.7 L1264.4 981.0 L1267.8 983.3 L1271.3 985.5 L1274.8 987.8 L1278.3 990.0 L1281.9 992.2 L1285.4 994.3 L1289.0 996.5 L1292.5 998.6 L1296.1 1000.7 L1299.7 1002.7 L1303.3 1004.8 L1306.9 1006.8 L1310.6 1008.8 L1314.2 1010.8 L1317.8 1012.7 L1321.5 1014.7 L1325.2 1016.6 L1328.8 1018.5 L1332.5 1020.4 L1336.2 1022.3 L1339.8 1024.1 L1343.5 1026.0 L1347.2 1027.8 L1350.9 1029.6 L1354.6 1031.4 L1358.3 1033.2 L1362.0 1035.0 L1365.7 1036.7 L1369.4 1038.5 L1373.1 1040.2 L1376.7 1042.0 L1380.4 1043.7 L1384.1 1045.4 L1387.8 1047.1 L1391.5 1048.8 L1395.2 1050.5 L1398.8 1052.2 L1402.5 1053.9 L1406.2 1055.6 L1409.9 1057.3 L1413.6 1059.0 L1417.2 1060.6 L1420.9 1062.3 L1424.6 1063.9 L1428.3 1065.6 L1432.0 1067.2 L1435.6 1068.9 L1439.3 1070.5 L1443.0 1072.1 L1446.7 1073.8 L1450.3 1075.4 L1454.0 1077.0 L1457.7 1078.6 L1461.4 1080.2 L1465.0 1081.8 L1468.7 1083.4 L1472.4 1085.0 L1476.0 1086.6 L1479.7 1088.2 L1483.4 1089.8 L1487.0 1091.4 L1490.7 1092.9 L1494.4 1094.5 L1498.0 1096.1 L1501.7 1097.6 L1505.4 1099.2 L1509.0 1100.8 L1512.7 1102.3 L1516.4 1103.9 L1520.0 1105.4 L1523.7 1107.0 L1527.4 1108.5 L1531.0 1110.1 L1534.7 1111.6 L1538.4 1113.2 L1542.0 1114.7 L1545.7 1116.3 L1549.3 1117.8 L1553.0 1119.3 L1556.7 1120.9 L1560.3 1122.4 L1564.0 1124.0 L1567.6 1125.5 L1571.3 1127.0 L1574.9 1128.6 L1578.6 1130.1 L1582.3 1131.6 L1585.9 1133.2 L1589.6 1134.7 L1593.2 1136.2 L1596.9 1137.7 L1600.5 1139.3 L1604.2 1140.8 L1607.8 1142.3 L1611.5 1143.9 L1615.1 1145.4 L1618.8 1146.9 L1622.4 1148.5 L1626.1 1150.0 L1629.7 1151.6 L1633.4 1153.1 L1637.0 1154.6 L1640.7 1156.2 L1644.3 1157.7 L1648.0 1159.3 L1651.6 1160.8 L1655.3 1162.3 L1658.9 1163.9 L1662.6 1165.5 L1666.2 1167.0 L1669.9 1168.6 L1673.5 1170.1 L1677.2 1171.7 L1680.8 1173.2 L1684.5 1174.8 L1688.1 1176.4 L1691.8 1178.0 L1695.4 1179.5 L1699.0 1181.1 L1702.7 1182.7 L1706.3 1184.3 L1710.0 1185.9 L1713.6 1187.5 L1717.3 1189.1 L1720.9 1190.7 L1724.5 1192.3 L1728.2 1193.9 L1731.8 1195.5 L1735.5 1197.1 L1739.1 1198.7 L1742.7 1200.4 L1746.4 1202.0 L1750.0 1203.6 L1753.7 1205.3 L1757.3 1206.9 L1760.9 1208.6 L1764.6 1210.2 L1768.2 1211.9 L1771.9 1213.6 L1775.5 1215.2 L1779.1 1216.9 L1782.8 1218.6 L1786.4 1220.3 L1790.1 1222.0 L1793.7 1223.7 L1797.3 1225.4 L1801.0 1227.1 L1804.6 1228.8 L1808.2 1230.6 L1811.9 1232.3 L1815.5 1234.1 L1819.2 1235.8 L1822.8 1237.6 Z" fill="rgba(0,0,0,0.28)"/>
<path d="M1830.2 1222.3 L1826.5 1220.5 L1822.9 1218.7 L1819.2 1217.0 L1815.6 1215.2 L1811.9 1213.5 L1808.2 1211.8 L1804.6 1210.0 L1800.9 1208.3 L1797.3 1206.6 L1793.6 1204.9 L1789.9 1203.2 L1786.3 1201.5 L1782.6 1199.8 L1779.0 1198.1 L1775.3 1196.4 L1771.6 1194.8 L1768.0 1193.1 L1764.3 1191.4 L1760.7 1189.8 L1757.0 1188.1 L1753.4 1186.5 L1749.7 1184.8 L1746.0 1183.2 L1742.4 1181.6 L1738.7 1180.0 L1735.1 1178.3 L1731.4 1176.7 L1727.7 1175.1 L1724.1 1173.5 L1720.4 1171.9 L1716.8 1170.3 L1713.1 1168.7 L1709.5 1167.1 L1705.8 1165.5 L1702.1 1163.9 L1698.5 1162.3 L1694.8 1160.8 L1691.2 1159.2 L1687.5 1157.6 L1683.9 1156.1 L1680.2 1154.5 L1676.6 1152.9 L1672.9 1151.4 L1669.2 1149.8 L1665.6 1148.3 L1661.9 1146.7 L1658.3 1145.2 L1654.6 1143.6 L1651.0 1142.1 L1647.3 1140.5 L1643.7 1139.0 L1640.0 1137.4 L1636.3 1135.9 L1632.7 1134.3 L1629.0 1132.8 L1625.4 1131.3 L1621.7 1129.7 L1618.1 1128.2 L1614.4 1126.7 L1610.8 1125.1 L1607.1 1123.6 L1603.4 1122.1 L1599.8 1120.5 L1596.1 1119.0 L1592.5 1117.5 L1588.8 1115.9 L1585.2 1114.4 L1581.5 1112.9 L1577.9 1111.3 L1574.2 1109.8 L1570.5 1108.3 L1566.9 1106.7 L1563.2 1105.2 L1559.6 1103.7 L1555.9 1102.1 L1552.3 1100.6 L1548.6 1099.1 L1545.0 1097.5 L1541.3 1096.0 L1537.6 1094.4 L1534.0 1092.9 L1530.3 1091.3 L1526.7 1089.8 L1523.0 1088.2 L1519.4 1086.7 L1515.7 1085.1 L1512.1 1083.6 L1508.4 1082.0 L1504.7 1080.4 L1501.1 1078.9 L1497.4 1077.3 L1493.8 1075.7 L1490.1 1074.2 L1486.5 1072.6 L1482.8 1071.0 L1479.1 1069.4 L1475.5 1067.8 L1471.8 1066.2 L1468.2 1064.6 L1464.5 1063.0 L1460.8 1061.4 L1457.2 1059.8 L1453.5 1058.2 L1449.9 1056.6 L1446.2 1055.0 L1442.5 1053.3 L1438.9 1051.7 L1435.2 1050.1 L1431.6 1048.4 L1427.9 1046.8 L1424.2 1045.1 L1420.6 1043.5 L1416.9 1041.8 L1413.3 1040.1 L1409.6 1038.5 L1405.9 1036.8 L1402.3 1035.1 L1398.6 1033.4 L1395.0 1031.7 L1391.3 1030.0 L1387.6 1028.3 L1384.0 1026.6 L1380.3 1024.9 L1376.6 1023.1 L1373.0 1021.4 L1369.3 1019.6 L1365.7 1017.9 L1362.0 1016.1 L1358.4 1014.3 L1354.7 1012.5 L1351.1 1010.7 L1347.5 1008.9 L1343.8 1007.1 L1340.2 1005.2 L1336.6 1003.4 L1333.0 1001.5 L1329.4 999.6 L1325.9 997.7 L1322.3 995.8 L1318.7 993.9 L1315.2 991.9 L1311.7 989.9 L1308.1 988.0 L1304.6 985.9 L1301.1 983.9 L1297.7 981.9 L1294.2 979.8 L1290.8 977.7 L1287.3 975.6 L1283.9 973.4 L1280.5 971.3 L1277.2 969.1 L1273.8 966.9 L1270.5 964.6 L1267.2 962.3 L1263.9 960.0 L1260.6 957.7 L1257.4 955.4 L1254.2 953.0 L1251.0 950.6 L1247.8 948.1 L1244.7 945.7 L1241.6 943.2 L1238.5 940.6 L1235.4 938.1 L1232.4 935.5 L1229.4 932.8 L1226.4 930.2 L1223.4 927.5 L1220.5 924.7 L1217.7 922.0 L1214.8 919.2 L1212.0 916.3 L1209.2 913.4 L1206.4 910.5 L1203.7 907.6 L1201.1 904.6 L1198.4 901.5 L1195.8 898.5 L1193.2 895.4 L1190.7 892.3 L1188.2 889.1 L1185.8 885.9 L1183.3 882.7 L1181.0 879.4 L1178.6 876.2 L1176.4 872.9 L1174.1 869.5 L1171.9 866.2 L1169.8 862.8 L1167.6 859.4 L1165.6 855.9 L1163.5 852.5 L1161.6 849.0 L1159.6 845.5 L1157.8 842.0 L1155.9 838.4 L1154.2 834.8 L1152.4 831.2 L1150.7 827.6 L1149.1 824.0 L1147.5 820.4 L1146.0 816.7 L1144.6 813.0 L1143.1 809.3 L1141.8 805.6 L1140.5 801.9 L1139.2 798.1 L1138.0 794.4 L1136.9 790.6 L1135.8 786.8 L1134.8 783.0 L1133.9 779.2 L1133.0 775.4 L1132.1 771.6 L1131.3 767.8 L1130.6 764.0 L1130.0 760.1 L1129.4 756.3 L1128.9 752.4 L1128.4 748.6 L1128.0 744.7 L1127.7 740.8 L1127.4 737.0 L1127.3 733.1 L1127.1 729.2 L1127.1 725.3 L1127.1 721.5 L1127.2 717.6 L1127.3 713.7 L1127.6 709.9 L1127.9 706.0 L1128.2 702.1 L1128.7 698.3 L1129.2 694.4 L1129.8 690.6 L1130.5 686.7 L1131.2 682.9 L1132.0 679.0 L1132.9 675.2 L1133.8 671.4 L1134.8 667.6 L1135.8 663.8 L1136.9 660.0 L1138.1 656.2 L1139.3 652.4 L1140.6 648.6 L1142.0 644.8 L1143.4 641.1 L1144.8 637.3 L1146.3 633.6 L1147.9 629.9 L1149.5 626.1 L1151.1 622.4 L1152.8 618.7 L1154.5 615.0 L1156.3 611.4 L1158.1 607.7 L1160.0 604.0 L1161.9 600.4 L1163.8 596.8 L1165.8 593.2 L1167.8 589.6 L1169.8 586.0 L1171.9 582.4 L1174.0 578.8 L1176.2 575.3 L1178.3 571.8 L1180.5 568.2 L1182.7 564.7 L1185.0 561.3 L1187.2 557.8 L1189.5 554.3 L1191.8 550.9 L1194.1 547.5 L1196.5 544.1 L1198.8 540.7 L1201.2 537.3 L1203.6 534.0 L1206.0 530.7 L1208.4 527.4 L1210.8 524.1 L1213.2 520.8 L1215.7 517.5 L1218.1 514.3 L1220.6 511.1 L1223.0 507.9 L1225.5 504.7 L1227.9 501.6 L1230.3 498.5 L1232.8 495.4 L1235.2 492.3 L1237.7 489.2 L1240.1 486.2 L1242.5 483.2 L1244.9 480.2 L1247.3 477.3 L1249.7 474.3 L1252.1 471.4 L1249.0 468.9 L1246.6 471.8 L1244.2 474.7 L1241.8 477.7 L1239.4 480.7 L1237.0 483.7 L1234.5 486.7 L1232.1 489.8 L1229.7 492.9 L1227.2 496.0 L1224.7 499.1 L1222.3 502.3 L1219.8 505.5 L1217.4 508.7 L1214.9 511.9 L1212.5 515.1 L1210.0 518.4 L1207.6 521.7 L1205.2 525.0 L1202.7 528.3 L1200.3 531.7 L1197.9 535.0 L1195.6 538.4 L1193.2 541.8 L1190.8 545.2 L1188.5 548.7 L1186.2 552.1 L1183.9 555.6 L1181.6 559.1 L1179.3 562.6 L1177.1 566.1 L1174.9 569.7 L1172.7 573.2 L1170.6 576.8 L1168.5 580.4 L1166.4 584.0 L1164.3 587.6 L1162.3 591.2 L1160.3 594.9 L1158.3 598.5 L1156.4 602.2 L1154.5 605.9 L1152.7 609.6 L1150.9 613.3 L1149.2 617.0 L1147.5 620.8 L1145.8 624.5 L1144.2 628.3 L1142.6 632.1 L1141.1 635.9 L1139.6 639.7 L1138.2 643.5 L1136.8 647.3 L1135.5 651.1 L1134.3 655.0 L1133.1 658.8 L1132.0 662.7 L1130.9 666.5 L1129.9 670.4 L1129.0 674.3 L1128.1 678.2 L1127.3 682.1 L1126.5 686.0 L1125.9 689.9 L1125.3 693.8 L1124.7 697.8 L1124.3 701.7 L1123.9 705.6 L1123.6 709.6 L1123.3 713.5 L1123.2 717.5 L1123.1 721.4 L1123.1 725.4 L1123.1 729.3 L1123.3 733.2 L1123.4 737.2 L1123.7 741.1 L1124.0 745.1 L1124.4 749.0 L1124.9 752.9 L1125.4 756.8 L1126.0 760.7 L1126.7 764.7 L1127.4 768.6 L1128.2 772.4 L1129.1 776.3 L1130.0 780.2 L1130.9 784.1 L1132.0 787.9 L1133.1 791.7 L1134.2 795.6 L1135.4 799.4 L1136.7 803.2 L1138.0 807.0 L1139.4 810.7 L1140.8 814.5 L1142.3 818.2 L1143.9 821.9 L1145.5 825.6 L1147.1 829.3 L1148.8 833.0 L1150.6 836.6 L1152.4 840.2 L1154.2 843.8 L1156.1 847.4 L1158.1 850.9 L1160.1 854.5 L1162.1 858.0 L1164.2 861.5 L1166.4 864.9 L1168.5 868.3 L1170.8 871.7 L1173.1 875.1 L1175.4 878.5 L1177.7 881.8 L1180.1 885.1 L1182.6 888.3 L1185.1 891.6 L1187.6 894.8 L1190.1 897.9 L1192.7 901.1 L1195.4 904.1 L1198.1 907.2 L1200.8 910.2 L1203.5 913.2 L1206.3 916.2 L1209.1 919.1 L1212.0 922.0 L1214.9 924.8 L1217.8 927.6 L1220.7 930.4 L1223.7 933.1 L1226.7 935.8 L1229.8 938.5 L1232.8 941.1 L1235.9 943.7 L1239.0 946.3 L1242.2 948.8 L1245.4 951.3 L1248.6 953.8 L1251.8 956.2 L1255.0 958.6 L1258.3 961.0 L1261.6 963.3 L1264.9 965.6 L1268.2 967.9 L1271.6 970.2 L1275.0 972.4 L1278.4 974.6 L1281.8 976.8 L1285.2 979.0 L1288.7 981.1 L1292.1 983.2 L1295.6 985.3 L1299.1 987.4 L1302.6 989.4 L1306.2 991.4 L1309.7 993.4 L1313.2 995.4 L1316.8 997.4 L1320.4 999.3 L1324.0 1001.3 L1327.6 1003.2 L1331.2 1005.1 L1334.8 1006.9 L1338.4 1008.8 L1342.0 1010.7 L1345.7 1012.5 L1349.3 1014.3 L1353.0 1016.1 L1356.6 1017.9 L1360.3 1019.7 L1363.9 1021.5 L1367.6 1023.2 L1371.3 1025.0 L1374.9 1026.7 L1378.6 1028.5 L1382.3 1030.2 L1385.9 1031.9 L1389.6 1033.6 L1393.3 1035.3 L1396.9 1037.0 L1400.6 1038.7 L1404.3 1040.4 L1407.9 1042.1 L1411.6 1043.8 L1415.3 1045.4 L1418.9 1047.1 L1422.6 1048.8 L1426.3 1050.4 L1429.9 1052.1 L1433.6 1053.7 L1437.3 1055.4 L1440.9 1057.0 L1444.6 1058.6 L1448.2 1060.2 L1451.9 1061.9 L1455.6 1063.5 L1459.2 1065.1 L1462.9 1066.7 L1466.6 1068.3 L1470.2 1069.9 L1473.9 1071.5 L1477.5 1073.1 L1481.2 1074.7 L1484.9 1076.3 L1488.5 1077.8 L1492.2 1079.4 L1495.8 1081.0 L1499.5 1082.6 L1503.2 1084.1 L1506.8 1085.7 L1510.5 1087.3 L1514.1 1088.8 L1517.8 1090.4 L1521.5 1091.9 L1525.1 1093.5 L1528.8 1095.0 L1532.4 1096.6 L1536.1 1098.1 L1539.7 1099.7 L1543.4 1101.2 L1547.1 1102.7 L1550.7 1104.3 L1554.4 1105.8 L1558.0 1107.4 L1561.7 1108.9 L1565.3 1110.4 L1569.0 1112.0 L1572.7 1113.5 L1576.3 1115.0 L1580.0 1116.6 L1583.6 1118.1 L1587.3 1119.6 L1590.9 1121.2 L1594.6 1122.7 L1598.2 1124.2 L1601.9 1125.8 L1605.6 1127.3 L1609.2 1128.8 L1612.9 1130.4 L1616.5 1131.9 L1620.2 1133.4 L1623.8 1135.0 L1627.5 1136.5 L1631.1 1138.0 L1634.8 1139.6 L1638.4 1141.1 L1642.1 1142.7 L1645.8 1144.2 L1649.4 1145.7 L1653.1 1147.3 L1656.7 1148.8 L1660.4 1150.4 L1664.0 1151.9 L1667.7 1153.5 L1671.3 1155.0 L1675.0 1156.6 L1678.6 1158.2 L1682.3 1159.7 L1685.9 1161.3 L1689.6 1162.9 L1693.3 1164.4 L1696.9 1166.0 L1700.6 1167.6 L1704.2 1169.2 L1707.9 1170.8 L1711.5 1172.4 L1715.2 1174.0 L1718.8 1175.6 L1722.5 1177.2 L1726.1 1178.8 L1729.8 1180.4 L1733.4 1182.0 L1737.1 1183.6 L1740.8 1185.2 L1744.4 1186.9 L1748.1 1188.5 L1751.7 1190.1 L1755.4 1191.8 L1759.0 1193.4 L1762.7 1195.1 L1766.3 1196.7 L1770.0 1198.4 L1773.6 1200.1 L1777.3 1201.7 L1780.9 1203.4 L1784.6 1205.1 L1788.3 1206.8 L1791.9 1208.5 L1795.6 1210.2 L1799.2 1211.9 L1802.9 1213.6 L1806.5 1215.4 L1810.2 1217.1 L1813.8 1218.8 L1817.5 1220.6 L1821.2 1222.3 L1824.8 1224.1 L1828.5 1225.9 Z" fill="#070707"/>
<path d="M1829.1 1224.5 L1825.5 1222.7 L1821.8 1221.0 L1818.2 1219.2 L1814.5 1217.5 L1810.8 1215.7 L1807.2 1214.0 L1803.5 1212.3 L1799.9 1210.6 L1796.2 1208.8 L1792.6 1207.1 L1788.9 1205.4 L1785.2 1203.7 L1781.6 1202.0 L1777.9 1200.4 L1774.3 1198.7 L1770.6 1197.0 L1767.0 1195.4 L1763.3 1193.7 L1759.6 1192.0 L1756.0 1190.4 L1752.3 1188.7 L1748.7 1187.1 L1745.0 1185.5 L1741.4 1183.8 L1737.7 1182.2 L1734.1 1180.6 L1730.4 1179.0 L1726.7 1177.4 L1723.1 1175.8 L1719.4 1174.2 L1715.8 1172.6 L1712.1 1171.0 L1708.5 1169.4 L1704.8 1167.8 L1701.2 1166.2 L1697.5 1164.6 L1693.9 1163.0 L1690.2 1161.5 L1686.5 1159.9 L1682.9 1158.3 L1679.2 1156.8 L1675.6 1155.2 L1671.9 1153.6 L1668.3 1152.1 L1664.6 1150.5 L1661.0 1149.0 L1657.3 1147.4 L1653.7 1145.9 L1650.0 1144.3 L1646.3 1142.8 L1642.7 1141.3 L1639.0 1139.7 L1635.4 1138.2 L1631.7 1136.6 L1628.1 1135.1 L1624.4 1133.6 L1620.8 1132.0 L1617.1 1130.5 L1613.5 1129.0 L1609.8 1127.4 L1606.1 1125.9 L1602.5 1124.4 L1598.8 1122.8 L1595.2 1121.3 L1591.5 1119.8 L1587.9 1118.2 L1584.2 1116.7 L1580.6 1115.2 L1576.9 1113.6 L1573.2 1112.1 L1569.6 1110.6 L1565.9 1109.0 L1562.3 1107.5 L1558.6 1106.0 L1555.0 1104.4 L1551.3 1102.9 L1547.7 1101.3 L1544.0 1099.8 L1540.3 1098.3 L1536.7 1096.7 L1533.0 1095.2 L1529.4 1093.6 L1525.7 1092.1 L1522.1 1090.5 L1518.4 1089.0 L1514.7 1087.4 L1511.1 1085.9 L1507.4 1084.3 L1503.8 1082.7 L1500.1 1081.2 L1496.4 1079.6 L1492.8 1078.0 L1489.1 1076.4 L1485.5 1074.9 L1481.8 1073.3 L1478.1 1071.7 L1474.5 1070.1 L1470.8 1068.5 L1467.2 1066.9 L1463.5 1065.3 L1459.8 1063.7 L1456.2 1062.1 L1452.5 1060.5 L1448.9 1058.9 L1445.2 1057.2 L1441.5 1055.6 L1437.9 1054.0 L1434.2 1052.3 L1430.6 1050.7 L1426.9 1049.0 L1423.2 1047.4 L1419.6 1045.7 L1415.9 1044.1 L1412.2 1042.4 L1408.6 1040.7 L1404.9 1039.0 L1401.2 1037.4 L1397.6 1035.7 L1393.9 1034.0 L1390.2 1032.3 L1386.6 1030.5 L1382.9 1028.8 L1379.3 1027.1 L1375.6 1025.4 L1371.9 1023.6 L1368.3 1021.9 L1364.6 1020.1 L1360.9 1018.3 L1357.3 1016.6 L1353.6 1014.8 L1350.0 1013.0 L1346.4 1011.1 L1342.7 1009.3 L1339.1 1007.5 L1335.5 1005.6 L1331.9 1003.7 L1328.3 1001.8 L1324.7 999.9 L1321.1 998.0 L1317.5 996.1 L1314.0 994.1 L1310.4 992.1 L1306.9 990.1 L1303.4 988.1 L1299.9 986.1 L1296.4 984.0 L1292.9 981.9 L1289.5 979.8 L1286.0 977.7 L1282.6 975.5 L1279.2 973.3 L1275.8 971.1 L1272.4 968.9 L1269.1 966.7 L1265.8 964.4 L1262.5 962.1 L1259.2 959.7 L1255.9 957.4 L1252.7 955.0 L1249.5 952.6 L1246.3 950.1 L1243.1 947.6 L1240.0 945.1 L1236.9 942.5 L1233.8 940.0 L1230.7 937.3 L1227.7 934.7 L1224.7 932.0 L1221.8 929.3 L1218.8 926.5 L1215.9 923.7 L1213.0 920.9 L1210.2 918.0 L1207.4 915.1 L1204.6 912.2 L1201.9 909.2 L1199.2 906.2 L1196.5 903.2 L1193.9 900.1 L1191.3 897.0 L1188.8 893.8 L1186.3 890.6 L1183.8 887.4 L1181.4 884.2 L1179.0 880.9 L1176.6 877.6 L1174.3 874.3 L1172.0 870.9 L1169.8 867.5 L1167.7 864.1 L1165.5 860.7 L1163.4 857.2 L1161.4 853.7 L1159.4 850.2 L1157.5 846.7 L1155.6 843.1 L1153.7 839.5 L1151.9 835.9 L1150.2 832.3 L1148.5 828.7 L1146.9 825.0 L1145.3 821.3 L1143.7 817.6 L1142.2 813.9 L1140.8 810.2 L1139.4 806.4 L1138.1 802.7 L1136.9 798.9 L1135.7 795.1 L1134.5 791.3 L1133.4 787.5 L1132.4 783.7 L1131.4 779.8 L1130.5 776.0 L1129.7 772.1 L1128.9 768.3 L1128.2 764.4 L1127.5 760.5 L1126.9 756.6 L1126.4 752.7 L1126.0 748.8 L1125.6 744.9 L1125.2 741.0 L1125.0 737.1 L1124.8 733.2 L1124.7 729.3 L1124.6 725.4 L1124.6 721.4 L1124.7 717.5 L1124.9 713.6 L1125.1 709.7 L1125.4 705.8 L1125.8 701.9 L1126.2 698.0 L1126.8 694.1 L1127.4 690.2 L1128.0 686.3 L1128.8 682.4 L1129.6 678.5 L1130.4 674.6 L1131.4 670.8 L1132.4 666.9 L1133.4 663.1 L1134.6 659.3 L1135.7 655.4 L1137.0 651.6 L1138.3 647.8 L1139.6 644.0 L1141.0 640.2 L1142.5 636.4 L1144.0 632.7 L1145.6 628.9 L1147.2 625.1 L1148.8 621.4 L1150.5 617.7 L1152.3 614.0 L1154.1 610.3 L1155.9 606.6 L1157.8 602.9 L1159.7 599.2 L1161.6 595.6 L1163.6 592.0 L1165.6 588.3 L1167.7 584.7 L1169.8 581.1 L1171.9 577.6 L1174.0 574.0 L1176.2 570.5 L1178.4 566.9 L1180.6 563.4 L1182.9 559.9 L1185.1 556.4 L1187.4 553.0 L1189.8 549.5 L1192.1 546.1 L1194.4 542.7 L1196.8 539.3 L1199.2 535.9 L1201.6 532.5 L1204.0 529.2 L1206.4 525.9 L1208.8 522.6 L1211.3 519.3 L1213.7 516.1 L1216.1 512.8 L1218.6 509.6 L1221.0 506.4 L1223.5 503.2 L1225.9 500.1 L1228.4 496.9 L1230.8 493.8 L1233.3 490.8 L1235.7 487.7 L1238.2 484.7 L1240.6 481.6 L1243.0 478.7 L1245.4 475.7 L1247.8 472.8 L1250.2 469.8" fill="none" stroke="rgba(90,90,90,0.5)" stroke-width="1.2"/>
<path d="M1830.6 1221.4 L1827.0 1219.6 L1823.3 1217.8 L1819.7 1216.1 L1816.0 1214.3 L1812.3 1212.6 L1808.7 1210.9 L1805.0 1209.1 L1801.3 1207.4 L1797.7 1205.7 L1794.0 1204.0 L1790.4 1202.3 L1786.7 1200.6 L1783.0 1198.9 L1779.4 1197.2 L1775.7 1195.5 L1772.1 1193.9 L1768.4 1192.2 L1764.7 1190.5 L1761.1 1188.9 L1757.4 1187.2 L1753.8 1185.6 L1750.1 1183.9 L1746.4 1182.3 L1742.8 1180.7 L1739.1 1179.0 L1735.5 1177.4 L1731.8 1175.8 L1728.2 1174.2 L1724.5 1172.6 L1720.8 1171.0 L1717.2 1169.4 L1713.5 1167.8 L1709.9 1166.2 L1706.2 1164.6 L1702.5 1163.0 L1698.9 1161.4 L1695.2 1159.9 L1691.6 1158.3 L1687.9 1156.7 L1684.3 1155.1 L1680.6 1153.6 L1676.9 1152.0 L1673.3 1150.4 L1669.6 1148.9 L1666.0 1147.3 L1662.3 1145.8 L1658.7 1144.2 L1655.0 1142.7 L1651.4 1141.1 L1647.7 1139.6 L1644.0 1138.0 L1640.4 1136.5 L1636.7 1135.0 L1633.1 1133.4 L1629.4 1131.9 L1625.8 1130.3 L1622.1 1128.8 L1618.5 1127.3 L1614.8 1125.7 L1611.1 1124.2 L1607.5 1122.7 L1603.8 1121.1 L1600.2 1119.6 L1596.5 1118.1 L1592.9 1116.6 L1589.2 1115.0 L1585.6 1113.5 L1581.9 1112.0 L1578.2 1110.4 L1574.6 1108.9 L1570.9 1107.4 L1567.3 1105.8 L1563.6 1104.3 L1560.0 1102.8 L1556.3 1101.2 L1552.7 1099.7 L1549.0 1098.1 L1545.3 1096.6 L1541.7 1095.1 L1538.0 1093.5 L1534.4 1092.0 L1530.7 1090.4 L1527.1 1088.9 L1523.4 1087.3 L1519.8 1085.8 L1516.1 1084.2 L1512.4 1082.7 L1508.8 1081.1 L1505.1 1079.5 L1501.5 1078.0 L1497.8 1076.4 L1494.2 1074.8 L1490.5 1073.2 L1486.8 1071.7 L1483.2 1070.1 L1479.5 1068.5 L1475.9 1066.9 L1472.2 1065.3 L1468.6 1063.7 L1464.9 1062.1 L1461.2 1060.5 L1457.6 1058.9 L1453.9 1057.3 L1450.3 1055.7 L1446.6 1054.1 L1443.0 1052.4 L1439.3 1050.8 L1435.6 1049.2 L1432.0 1047.5 L1428.3 1045.9 L1424.7 1044.2 L1421.0 1042.6 L1417.3 1040.9 L1413.7 1039.2 L1410.0 1037.6 L1406.4 1035.9 L1402.7 1034.2 L1399.0 1032.5 L1395.4 1030.8 L1391.7 1029.1 L1388.1 1027.4 L1384.4 1025.7 L1380.7 1023.9 L1377.1 1022.2 L1373.4 1020.5 L1369.8 1018.7 L1366.1 1017.0 L1362.5 1015.2 L1358.8 1013.4 L1355.2 1011.6 L1351.5 1009.8 L1347.9 1008.0 L1344.3 1006.2 L1340.7 1004.4 L1337.1 1002.5 L1333.5 1000.6 L1329.9 998.7 L1326.3 996.8 L1322.8 994.9 L1319.2 993.0 L1315.7 991.0 L1312.1 989.1 L1308.6 987.1 L1305.1 985.1 L1301.6 983.0 L1298.2 981.0 L1294.7 978.9 L1291.3 976.8 L1287.9 974.7 L1284.5 972.6 L1281.1 970.4 L1277.7 968.2 L1274.4 966.0 L1271.1 963.8 L1267.8 961.5 L1264.5 959.2 L1261.2 956.9 L1258.0 954.6 L1254.8 952.2 L1251.6 949.8 L1248.4 947.4 L1245.3 944.9 L1242.2 942.4 L1239.1 939.9 L1236.1 937.3 L1233.0 934.7 L1230.0 932.1 L1227.1 929.4 L1224.1 926.7 L1221.2 924.0 L1218.3 921.2 L1215.5 918.4 L1212.7 915.6 L1209.9 912.7 L1207.2 909.8 L1204.5 906.9 L1201.8 903.9 L1199.2 900.9 L1196.6 897.8 L1194.0 894.7 L1191.5 891.6 L1189.0 888.5 L1186.6 885.3 L1184.2 882.1 L1181.8 878.9 L1179.5 875.6 L1177.2 872.3 L1174.9 869.0 L1172.7 865.6 L1170.6 862.3 L1168.5 858.9 L1166.4 855.4 L1164.4 852.0 L1162.4 848.5 L1160.5 845.0 L1158.7 841.5 L1156.8 838.0 L1155.1 834.4 L1153.3 830.8 L1151.7 827.2 L1150.0 823.6 L1148.5 820.0 L1146.9 816.3 L1145.5 812.6 L1144.1 809.0 L1142.7 805.3 L1141.4 801.6 L1140.2 797.8 L1139.0 794.1 L1137.9 790.3 L1136.8 786.6 L1135.8 782.8 L1134.8 779.0 L1133.9 775.2 L1133.1 771.4 L1132.3 767.6 L1131.6 763.8 L1131.0 760.0 L1130.4 756.1 L1129.9 752.3 L1129.4 748.4 L1129.0 744.6 L1128.7 740.8 L1128.4 736.9 L1128.3 733.0 L1128.1 729.2 L1128.1 725.3 L1128.1 721.5 L1128.2 717.6 L1128.3 713.8 L1128.6 709.9 L1128.9 706.1 L1129.2 702.2 L1129.7 698.4 L1130.2 694.6 L1130.8 690.7 L1131.4 686.9 L1132.2 683.1 L1133.0 679.3 L1133.8 675.4 L1134.8 671.6 L1135.7 667.8 L1136.8 664.0 L1137.9 660.3 L1139.1 656.5 L1140.3 652.7 L1141.6 648.9 L1142.9 645.2 L1144.3 641.4 L1145.7 637.7 L1147.2 634.0 L1148.8 630.3 L1150.4 626.5 L1152.0 622.8 L1153.7 619.2 L1155.4 615.5 L1157.2 611.8 L1159.0 608.1 L1160.9 604.5 L1162.8 600.9 L1164.7 597.3 L1166.7 593.6 L1168.7 590.0 L1170.7 586.5 L1172.8 582.9 L1174.9 579.3 L1177.0 575.8 L1179.2 572.3 L1181.3 568.8 L1183.6 565.3 L1185.8 561.8 L1188.1 558.3 L1190.3 554.9 L1192.6 551.5 L1195.0 548.0 L1197.3 544.7 L1199.7 541.3 L1202.0 537.9 L1204.4 534.6 L1206.8 531.2 L1209.2 527.9 L1211.6 524.7 L1214.0 521.4 L1216.5 518.1 L1218.9 514.9 L1221.4 511.7 L1223.8 508.5 L1226.2 505.4 L1228.7 502.2 L1231.1 499.1 L1233.6 496.0 L1236.0 492.9 L1238.4 489.9 L1240.9 486.8 L1243.3 483.8 L1245.7 480.8 L1248.1 477.9 L1250.5 474.9 L1252.9 472.0" fill="none" stroke="rgba(160,160,160,0.25)" stroke-width="1.5"/>

<g fill="none">
 <path d="M 1061 66 L 1027 112 L 953 209 L 870 330" stroke="#0b0b0b" stroke-width="5"/>
 <path d="M 1061 66 L 1027 112 L 953 209 L 870 330" stroke="rgba(0,0,0,0.4)" stroke-width="14" filter="url(#sh3)"/>
 <path d="M -20 590 L 60 500 L 140 390" stroke="#0a0a0a" stroke-width="6"/>
 <path d="M -20 312 L 130 150" stroke="#0c0c0c" stroke-width="5"/>
 <path d="M 0 95 L 105 -5" stroke="#0c0c0c" stroke-width="4"/>
 <path d="M 1151 431 L 1254 467 L 1209 545 L 1120 545 L 1135 450 Z" fill="rgba(0,0,0,0.35)" filter="url(#sh3)"/>
 <path d="M 1151 431 L 1254 467" stroke="rgba(150,150,150,0.6)" stroke-width="2.5"/>
 <path d="M 1151 431 L 1200 350 L 1260 250" stroke="#111" stroke-width="4"/>
 <path d="M 890 300 L 960 330" stroke="rgba(120,120,120,0.35)" stroke-width="6" filter="url(#sh3)"/>
 <path d="M 228 14 L 440 100 L 500 125" stroke="rgba(0,0,0,0.45)" stroke-width="16" filter="url(#sh3)"/>
 <path d="M 232 6 L 445 92 L 505 117" stroke="rgba(70,70,70,0.35)" stroke-width="2"/>
 <path d="M 190 122 L 258 58" stroke="#0c0c0c" stroke-width="3"/>
 <path d="M 400 150 L 540 -10" stroke="rgba(0,0,0,0.45)" stroke-width="12" filter="url(#sh3)"/>
 <path d="M 405 150 L 545 -10" stroke="#0b0b0b" stroke-width="3.5"/>
 <path d="M 680 150 L 825 -10" stroke="rgba(0,0,0,0.45)" stroke-width="12" filter="url(#sh3)"/>
 <path d="M 685 150 L 830 -10" stroke="#0b0b0b" stroke-width="3.5"/>
</g>

<path d="M1769.2 -9.9 L1772.9 -8.5 L1776.6 -7.1 L1780.4 -5.7 L1784.1 -4.3 L1787.8 -2.9 L1791.6 -1.5 L1795.3 -0.1 L1799.1 1.3 L1802.8 2.6 L1806.6 4.0 L1810.3 5.4 L1814.1 6.7 L1817.8 8.1 L1821.6 9.4 L1825.3 10.7 L1829.1 12.1 L1832.8 13.4 L1836.6 14.8 L1840.3 16.1 L1844.1 17.5 L1847.8 18.8 L1851.6 20.2 L1855.3 21.5 L1859.0 22.9 L1862.8 24.3 L1866.5 25.7 L1870.2 27.0 L1874.0 28.4 L1877.7 29.8 L1881.4 31.3 L1885.1 32.7 L1888.8 34.1 L1892.5 35.6 L1896.2 37.1 L1899.9 38.5 L1903.6 40.0 L1907.2 41.5 L1910.9 43.1 L1914.5 44.6 L1918.2 46.2 L1921.8 47.8 L1925.5 49.4 L1929.1 51.0" fill="none" stroke="rgba(0,0,0,0.35)" stroke-width="1.6"/>
<path d="M1770.9 -14.2 L1774.6 -12.8 L1778.3 -11.4 L1782.0 -10.0 L1785.7 -8.6 L1789.5 -7.2 L1793.2 -5.8 L1796.9 -4.4 L1800.6 -3.0 L1804.4 -1.7 L1808.1 -0.3 L1811.9 1.0 L1815.6 2.4 L1819.4 3.7 L1823.1 5.1 L1826.9 6.4 L1830.6 7.8 L1834.4 9.1 L1838.1 10.4 L1841.9 11.8 L1845.6 13.1 L1849.4 14.5 L1853.1 15.9 L1856.9 17.2 L1860.6 18.6 L1864.4 20.0 L1868.1 21.3 L1871.8 22.7 L1875.6 24.1 L1879.3 25.5 L1883.0 27.0 L1886.8 28.4 L1890.5 29.9 L1894.2 31.3 L1897.9 32.8 L1901.6 34.3 L1905.3 35.8 L1909.0 37.3 L1912.7 38.8 L1916.4 40.4 L1920.0 42.0 L1923.7 43.6 L1927.3 45.2 L1931.0 46.8" fill="none" stroke="rgba(0,0,0,0.3)" stroke-width="1.6"/>
<path d="M1770.0 -12.0 L1773.7 -10.6 L1777.4 -9.1 L1781.2 -7.7 L1784.9 -6.3 L1788.6 -4.9 L1792.3 -3.5 L1796.1 -2.2 L1799.8 -0.8 L1803.6 0.6 L1807.3 1.9 L1811.1 3.3 L1814.8 4.6 L1818.6 6.0 L1822.3 7.3 L1826.1 8.7 L1829.8 10.0 L1833.6 11.4 L1837.3 12.7 L1841.1 14.1 L1844.8 15.4 L1848.6 16.8 L1852.3 18.1 L1856.1 19.5 L1859.8 20.8 L1863.5 22.2 L1867.3 23.6 L1871.0 25.0 L1874.7 26.4 L1878.5 27.8 L1882.2 29.2 L1885.9 30.6 L1889.6 32.1 L1893.3 33.5 L1897.0 35.0 L1900.7 36.5 L1904.4 38.0 L1908.1 39.5 L1911.7 41.0 L1915.4 42.6 L1919.1 44.2 L1922.7 45.8 L1926.4 47.4 L1930.0 49.0" fill="none" stroke="#9a9a9a" stroke-width="2.8"/>
<path d="M1569.4 -3.6 L1573.3 -2.7 L1577.2 -1.8 L1581.0 -0.9 L1584.9 0.1 L1588.8 1.1 L1592.6 2.1 L1596.5 3.1 L1600.3 4.1 L1604.1 5.2 L1608.0 6.2 L1611.8 7.3 L1615.6 8.4 L1619.4 9.5 L1623.2 10.6 L1627.1 11.7 L1630.9 12.9 L1634.7 14.0 L1638.4 15.2 L1642.2 16.4 L1646.0 17.6 L1649.8 18.8 L1653.6 20.0 L1657.4 21.2 L1661.1 22.5 L1664.9 23.7 L1668.7 25.0 L1672.4 26.3 L1676.2 27.5 L1679.9 28.8 L1683.7 30.1 L1687.4 31.5 L1691.2 32.8 L1694.9 34.1 L1698.7 35.4 L1702.4 36.8 L1706.1 38.1 L1709.9 39.5 L1713.6 40.9 L1717.3 42.3 L1721.0 43.6 L1724.8 45.0 L1728.5 46.4 L1732.2 47.8 L1735.9 49.2 L1739.6 50.6 L1743.4 52.1 L1747.1 53.5 L1750.8 54.9 L1754.5 56.3 L1758.2 57.8 L1761.9 59.2 L1765.6 60.6 L1769.3 62.1 L1773.0 63.5 L1776.8 65.0 L1780.5 66.4 L1784.2 67.9 L1787.9 69.3 L1791.6 70.8 L1795.3 72.2 L1799.0 73.7 L1802.7 75.1 L1806.4 76.6 L1810.1 78.0 L1813.8 79.5 L1817.5 81.0 L1821.2 82.4 L1824.9 83.9 L1828.7 85.3 L1832.4 86.7 L1836.1 88.2 L1839.8 89.6 L1843.5 91.1 L1847.2 92.5 L1850.9 93.9 L1854.7 95.3 L1858.4 96.8 L1862.1 98.2 L1865.8 99.6 L1869.5 101.0 L1873.3 102.4 L1877.0 103.8 L1880.7 105.2 L1884.5 106.6 L1888.2 107.9 L1891.9 109.3 L1895.7 110.7 L1899.4 112.0 L1903.2 113.4 L1906.9 114.7 L1910.7 116.0 L1914.4 117.4 L1918.2 118.7 L1922.0 120.0 L1925.7 121.3 L1929.5 122.5" fill="none" stroke="rgba(0,0,0,0.35)" stroke-width="1.6"/>
<path d="M1570.5 -8.1 L1574.4 -7.2 L1578.2 -6.3 L1582.1 -5.3 L1586.0 -4.4 L1589.9 -3.4 L1593.8 -2.4 L1597.6 -1.4 L1601.5 -0.3 L1605.3 0.7 L1609.2 1.8 L1613.0 2.9 L1616.9 3.9 L1620.7 5.1 L1624.5 6.2 L1628.4 7.3 L1632.2 8.5 L1636.0 9.6 L1639.8 10.8 L1643.6 12.0 L1647.4 13.2 L1651.2 14.4 L1655.0 15.6 L1658.8 16.9 L1662.6 18.1 L1666.4 19.4 L1670.1 20.6 L1673.9 21.9 L1677.7 23.2 L1681.4 24.5 L1685.2 25.8 L1689.0 27.1 L1692.7 28.4 L1696.5 29.8 L1700.2 31.1 L1704.0 32.5 L1707.7 33.8 L1711.4 35.2 L1715.2 36.6 L1718.9 37.9 L1722.7 39.3 L1726.4 40.7 L1730.1 42.1 L1733.8 43.5 L1737.6 44.9 L1741.3 46.3 L1745.0 47.8 L1748.7 49.2 L1752.4 50.6 L1756.2 52.0 L1759.9 53.5 L1763.6 54.9 L1767.3 56.4 L1771.0 57.8 L1774.7 59.2 L1778.4 60.7 L1782.1 62.1 L1785.8 63.6 L1789.6 65.0 L1793.3 66.5 L1797.0 68.0 L1800.7 69.4 L1804.4 70.9 L1808.1 72.3 L1811.8 73.8 L1815.5 75.2 L1819.2 76.7 L1822.9 78.1 L1826.6 79.6 L1830.3 81.0 L1834.0 82.5 L1837.7 83.9 L1841.4 85.3 L1845.2 86.8 L1848.9 88.2 L1852.6 89.6 L1856.3 91.0 L1860.0 92.5 L1863.7 93.9 L1867.4 95.3 L1871.2 96.7 L1874.9 98.1 L1878.6 99.5 L1882.3 100.9 L1886.1 102.2 L1889.8 103.6 L1893.5 105.0 L1897.3 106.3 L1901.0 107.7 L1904.7 109.0 L1908.5 110.4 L1912.2 111.7 L1916.0 113.0 L1919.7 114.3 L1923.5 115.6 L1927.2 116.9 L1931.0 118.2" fill="none" stroke="rgba(0,0,0,0.3)" stroke-width="1.6"/>
<path d="M1569.9 -5.8 L1573.8 -4.9 L1577.7 -3.9 L1581.6 -3.0 L1585.4 -2.0 L1589.3 -1.1 L1593.2 -0.1 L1597.0 1.0 L1600.9 2.0 L1604.7 3.0 L1608.6 4.1 L1612.4 5.2 L1616.2 6.3 L1620.0 7.4 L1623.9 8.5 L1627.7 9.6 L1631.5 10.8 L1635.3 11.9 L1639.1 13.1 L1642.9 14.3 L1646.7 15.5 L1650.5 16.7 L1654.3 17.9 L1658.0 19.1 L1661.8 20.4 L1665.6 21.6 L1669.4 22.9 L1673.1 24.2 L1676.9 25.5 L1680.7 26.8 L1684.4 28.1 L1688.2 29.4 L1691.9 30.7 L1695.7 32.0 L1699.4 33.4 L1703.1 34.7 L1706.9 36.1 L1710.6 37.4 L1714.4 38.8 L1718.1 40.2 L1721.8 41.6 L1725.5 43.0 L1729.3 44.4 L1733.0 45.8 L1736.7 47.2 L1740.4 48.6 L1744.1 50.0 L1747.9 51.4 L1751.6 52.9 L1755.3 54.3 L1759.0 55.7 L1762.7 57.2 L1766.4 58.6 L1770.1 60.0 L1773.8 61.5 L1777.6 62.9 L1781.3 64.4 L1785.0 65.8 L1788.7 67.3 L1792.4 68.7 L1796.1 70.2 L1799.8 71.6 L1803.5 73.1 L1807.2 74.5 L1810.9 76.0 L1814.6 77.5 L1818.3 78.9 L1822.0 80.4 L1825.7 81.8 L1829.4 83.2 L1833.2 84.7 L1836.9 86.1 L1840.6 87.6 L1844.3 89.0 L1848.0 90.4 L1851.7 91.9 L1855.4 93.3 L1859.2 94.7 L1862.9 96.1 L1866.6 97.5 L1870.3 98.9 L1874.0 100.3 L1877.8 101.7 L1881.5 103.1 L1885.2 104.5 L1889.0 105.9 L1892.7 107.2 L1896.4 108.6 L1900.2 110.0 L1903.9 111.3 L1907.7 112.6 L1911.4 114.0 L1915.2 115.3 L1918.9 116.6 L1922.7 117.9 L1926.4 119.2 L1930.2 120.5" fill="none" stroke="#9a9a9a" stroke-width="2.8"/>
<path d="M1339.4 -5.4 L1343.1 -4.0 L1346.8 -2.5 L1350.5 -1.0 L1354.2 0.4 L1358.0 1.9 L1361.7 3.3 L1365.4 4.7 L1369.2 6.1 L1372.9 7.5 L1376.6 8.9 L1380.4 10.3 L1384.1 11.6 L1387.9 13.0 L1391.6 14.4 L1395.4 15.7 L1399.2 17.0 L1402.9 18.4 L1406.7 19.7 L1410.5 21.0 L1414.2 22.3 L1418.0 23.6 L1421.8 24.9 L1425.6 26.2 L1429.4 27.4 L1433.2 28.7 L1436.9 29.9 L1440.7 31.2 L1444.5 32.4 L1448.3 33.7 L1452.1 34.9 L1455.9 36.1 L1459.7 37.4 L1463.5 38.6 L1467.4 39.8 L1471.2 41.0 L1475.0 42.2 L1478.8 43.4 L1482.6 44.6 L1486.4 45.8 L1490.2 47.0 L1494.1 48.1 L1497.9 49.3 L1501.7 50.5 L1505.5 51.6 L1509.3 52.8 L1513.2 54.0 L1517.0 55.1 L1520.8 56.3 L1524.6 57.4 L1528.5 58.6 L1532.3 59.7 L1536.1 60.9 L1540.0 62.0 L1543.8 63.2 L1547.6 64.3 L1551.5 65.4 L1555.3 66.6 L1559.1 67.7 L1563.0 68.8 L1566.8 70.0 L1570.6 71.1 L1574.5 72.2 L1578.3 73.4 L1582.1 74.5 L1586.0 75.6 L1589.8 76.8 L1593.6 77.9 L1597.5 79.0 L1601.3 80.2 L1605.1 81.3 L1609.0 82.5 L1612.8 83.6 L1616.6 84.7 L1620.4 85.9 L1624.3 87.0 L1628.1 88.2 L1631.9 89.3 L1635.8 90.5 L1639.6 91.6 L1643.4 92.8 L1647.2 93.9 L1651.0 95.1 L1654.9 96.3 L1658.7 97.4 L1662.5 98.6 L1666.3 99.8 L1670.1 101.0 L1673.9 102.2 L1677.7 103.3 L1681.5 104.5 L1685.4 105.7 L1689.2 106.9 L1693.0 108.1 L1696.8 109.4 L1700.6 110.6 L1704.3 111.8 L1708.1 113.0 L1711.9 114.3 L1715.7 115.5 L1719.5 116.8 L1723.3 118.0 L1727.1 119.3 L1730.8 120.6 L1734.6 121.8 L1738.4 123.1 L1742.2 124.4 L1745.9 125.7 L1749.7 127.0 L1753.4 128.3 L1757.2 129.6 L1761.0 131.0 L1764.7 132.3 L1768.4 133.7 L1772.2 135.0 L1775.9 136.4 L1779.7 137.8 L1783.4 139.1 L1787.1 140.5 L1790.9 141.9 L1794.6 143.4 L1798.3 144.8 L1802.0 146.2 L1805.7 147.6 L1809.4 149.1 L1813.1 150.6 L1816.8 152.0 L1820.5 153.5 L1824.2 155.0 L1827.9 156.5 L1831.6 158.1 L1835.2 159.6 L1838.9 161.1 L1842.6 162.7 L1846.2 164.3 L1849.9 165.8 L1853.5 167.4 L1857.2 169.0 L1860.8 170.7 L1864.4 172.3 L1868.1 173.9 L1871.7 175.6 L1875.3 177.3 L1878.9 179.0 L1882.5 180.7 L1886.1 182.4 L1889.7 184.1 L1893.3 185.9 L1896.9 187.6 L1900.5 189.4 L1904.1 191.2 L1907.6 193.0 L1911.2 194.8 L1914.8 196.6 L1918.3 198.5 L1921.8 200.4 L1925.4 202.2 L1928.9 204.1" fill="none" stroke="rgba(0,0,0,0.35)" stroke-width="1.6"/>
<path d="M1341.1 -9.7 L1344.8 -8.2 L1348.5 -6.8 L1352.2 -5.3 L1355.9 -3.9 L1359.6 -2.4 L1363.3 -1.0 L1367.0 0.4 L1370.8 1.8 L1374.5 3.2 L1378.2 4.6 L1382.0 6.0 L1385.7 7.3 L1389.4 8.7 L1393.2 10.0 L1396.9 11.4 L1400.7 12.7 L1404.5 14.0 L1408.2 15.3 L1412.0 16.6 L1415.7 17.9 L1419.5 19.2 L1423.3 20.5 L1427.1 21.8 L1430.8 23.1 L1434.6 24.3 L1438.4 25.6 L1442.2 26.8 L1446.0 28.1 L1449.8 29.3 L1453.6 30.5 L1457.3 31.8 L1461.1 33.0 L1464.9 34.2 L1468.7 35.4 L1472.5 36.6 L1476.4 37.8 L1480.2 39.0 L1484.0 40.2 L1487.8 41.4 L1491.6 42.6 L1495.4 43.7 L1499.2 44.9 L1503.0 46.1 L1506.9 47.2 L1510.7 48.4 L1514.5 49.6 L1518.3 50.7 L1522.1 51.9 L1526.0 53.0 L1529.8 54.2 L1533.6 55.3 L1537.5 56.5 L1541.3 57.6 L1545.1 58.8 L1548.9 59.9 L1552.8 61.0 L1556.6 62.2 L1560.4 63.3 L1564.3 64.4 L1568.1 65.6 L1571.9 66.7 L1575.8 67.8 L1579.6 69.0 L1583.4 70.1 L1587.3 71.2 L1591.1 72.4 L1594.9 73.5 L1598.8 74.6 L1602.6 75.8 L1606.4 76.9 L1610.3 78.1 L1614.1 79.2 L1617.9 80.3 L1621.8 81.5 L1625.6 82.6 L1629.4 83.8 L1633.3 84.9 L1637.1 86.1 L1640.9 87.2 L1644.7 88.4 L1648.6 89.5 L1652.4 90.7 L1656.2 91.9 L1660.0 93.0 L1663.8 94.2 L1667.7 95.4 L1671.5 96.6 L1675.3 97.8 L1679.1 99.0 L1682.9 100.1 L1686.7 101.4 L1690.5 102.6 L1694.4 103.8 L1698.2 105.0 L1702.0 106.2 L1705.8 107.4 L1709.6 108.7 L1713.4 109.9 L1717.2 111.1 L1720.9 112.4 L1724.7 113.7 L1728.5 114.9 L1732.3 116.2 L1736.1 117.5 L1739.9 118.8 L1743.7 120.1 L1747.4 121.4 L1751.2 122.7 L1755.0 124.0 L1758.7 125.3 L1762.5 126.6 L1766.3 128.0 L1770.0 129.3 L1773.8 130.7 L1777.5 132.1 L1781.3 133.4 L1785.0 134.8 L1788.7 136.2 L1792.5 137.6 L1796.2 139.1 L1799.9 140.5 L1803.7 141.9 L1807.4 143.4 L1811.1 144.8 L1814.8 146.3 L1818.5 147.8 L1822.2 149.3 L1825.9 150.8 L1829.6 152.3 L1833.3 153.8 L1837.0 155.3 L1840.7 156.9 L1844.4 158.5 L1848.0 160.0 L1851.7 161.6 L1855.4 163.2 L1859.0 164.8 L1862.7 166.5 L1866.3 168.1 L1870.0 169.8 L1873.6 171.4 L1877.3 173.1 L1880.9 174.8 L1884.5 176.5 L1888.1 178.2 L1891.7 180.0 L1895.3 181.7 L1898.9 183.5 L1902.5 185.3 L1906.1 187.1 L1909.7 188.9 L1913.3 190.7 L1916.9 192.6 L1920.4 194.4 L1924.0 196.3 L1927.6 198.2 L1931.1 200.1" fill="none" stroke="rgba(0,0,0,0.3)" stroke-width="1.6"/>
<path d="M1340.2 -7.5 L1343.9 -6.0 L1347.6 -4.5 L1351.3 -3.1 L1355.0 -1.6 L1358.7 -0.2 L1362.5 1.2 L1366.2 2.6 L1369.9 4.1 L1373.7 5.4 L1377.4 6.8 L1381.1 8.2 L1384.9 9.6 L1388.6 10.9 L1392.4 12.3 L1396.1 13.6 L1399.9 15.0 L1403.7 16.3 L1407.4 17.6 L1411.2 18.9 L1415.0 20.2 L1418.7 21.5 L1422.5 22.8 L1426.3 24.1 L1430.1 25.3 L1433.9 26.6 L1437.6 27.9 L1441.4 29.1 L1445.2 30.4 L1449.0 31.6 L1452.8 32.8 L1456.6 34.1 L1460.4 35.3 L1464.2 36.5 L1468.0 37.7 L1471.8 38.9 L1475.6 40.1 L1479.4 41.3 L1483.3 42.5 L1487.1 43.7 L1490.9 44.9 L1494.7 46.0 L1498.5 47.2 L1502.3 48.4 L1506.2 49.5 L1510.0 50.7 L1513.8 51.9 L1517.6 53.0 L1521.5 54.2 L1525.3 55.3 L1529.1 56.5 L1532.9 57.6 L1536.8 58.8 L1540.6 59.9 L1544.4 61.1 L1548.3 62.2 L1552.1 63.3 L1555.9 64.5 L1559.8 65.6 L1563.6 66.7 L1567.4 67.9 L1571.3 69.0 L1575.1 70.1 L1578.9 71.3 L1582.8 72.4 L1586.6 73.5 L1590.4 74.7 L1594.3 75.8 L1598.1 76.9 L1601.9 78.1 L1605.8 79.2 L1609.6 80.4 L1613.4 81.5 L1617.2 82.6 L1621.1 83.8 L1624.9 84.9 L1628.7 86.1 L1632.6 87.2 L1636.4 88.4 L1640.2 89.5 L1644.0 90.7 L1647.9 91.8 L1651.7 93.0 L1655.5 94.2 L1659.3 95.3 L1663.1 96.5 L1667.0 97.7 L1670.8 98.9 L1674.6 100.1 L1678.4 101.2 L1682.2 102.4 L1686.0 103.6 L1689.8 104.8 L1693.6 106.1 L1697.4 107.3 L1701.2 108.5 L1705.0 109.7 L1708.8 110.9 L1712.6 112.2 L1716.4 113.4 L1720.2 114.7 L1724.0 115.9 L1727.8 117.2 L1731.5 118.5 L1735.3 119.7 L1739.1 121.0 L1742.9 122.3 L1746.6 123.6 L1750.4 124.9 L1754.2 126.2 L1757.9 127.6 L1761.7 128.9 L1765.4 130.2 L1769.2 131.6 L1772.9 133.0 L1776.7 134.3 L1780.4 135.7 L1784.2 137.1 L1787.9 138.5 L1791.6 139.9 L1795.4 141.3 L1799.1 142.7 L1802.8 144.2 L1806.5 145.6 L1810.2 147.1 L1813.9 148.5 L1817.6 150.0 L1821.3 151.5 L1825.0 153.0 L1828.7 154.5 L1832.4 156.0 L1836.1 157.6 L1839.7 159.1 L1843.4 160.7 L1847.1 162.2 L1850.7 163.8 L1854.4 165.4 L1858.1 167.0 L1861.7 168.7 L1865.3 170.3 L1869.0 171.9 L1872.6 173.6 L1876.2 175.3 L1879.9 177.0 L1883.5 178.7 L1887.1 180.4 L1890.7 182.1 L1894.3 183.9 L1897.9 185.6 L1901.5 187.4 L1905.1 189.2 L1908.6 191.0 L1912.2 192.8 L1915.8 194.7 L1919.3 196.5 L1922.9 198.4 L1926.4 200.3 L1930.0 202.2" fill="none" stroke="#9a9a9a" stroke-width="2.8"/>
<path d="M1099.2 -6.2 L1103.1 -5.3 L1107.0 -4.2 L1110.8 -3.2 L1114.7 -2.2 L1118.5 -1.2 L1122.4 -0.1 L1126.2 0.9 L1130.1 2.0 L1133.9 3.1 L1137.8 4.1 L1141.6 5.2 L1145.4 6.3 L1149.3 7.4 L1153.1 8.5 L1156.9 9.7 L1160.8 10.8 L1164.6 11.9 L1168.4 13.1 L1172.2 14.2 L1176.0 15.4 L1179.8 16.6 L1183.6 17.7 L1187.4 18.9 L1191.2 20.1 L1195.0 21.3 L1198.8 22.5 L1202.6 23.7 L1206.4 24.9 L1210.2 26.2 L1214.0 27.4 L1217.8 28.6 L1221.6 29.9 L1225.4 31.1 L1229.2 32.4 L1232.9 33.6 L1236.7 34.9 L1240.5 36.2 L1244.3 37.4 L1248.1 38.7 L1251.8 40.0 L1255.6 41.3 L1259.4 42.6 L1263.1 43.9 L1266.9 45.2 L1270.7 46.5 L1274.4 47.8 L1278.2 49.1 L1282.0 50.5 L1285.7 51.8 L1289.5 53.1 L1293.2 54.4 L1297.0 55.8 L1300.7 57.1 L1304.5 58.4 L1308.3 59.8 L1312.0 61.1 L1315.8 62.5 L1319.5 63.8 L1323.3 65.2 L1327.0 66.5 L1330.8 67.9 L1334.5 69.2 L1338.3 70.6 L1342.0 72.0 L1345.8 73.3 L1349.5 74.7 L1353.2 76.1 L1357.0 77.4 L1360.7 78.8 L1364.5 80.2 L1368.2 81.5 L1372.0 82.9 L1375.7 84.3 L1379.5 85.6 L1383.2 87.0 L1387.0 88.4 L1390.7 89.8 L1394.4 91.1 L1398.2 92.5 L1401.9 93.9 L1405.7 95.2 L1409.4 96.6 L1413.2 98.0 L1416.9 99.3 L1420.7 100.7 L1424.4 102.1 L1428.2 103.4 L1431.9 104.8 L1435.7 106.1 L1439.4 107.5 L1443.2 108.9 L1446.9 110.2 L1450.7 111.6 L1454.4 112.9 L1458.2 114.3 L1461.9 115.6 L1465.7 116.9 L1469.4 118.3 L1473.2 119.6 L1477.0 120.9 L1480.7 122.3 L1484.5 123.6 L1488.2 124.9 L1492.0 126.3 L1495.8 127.6 L1499.5 128.9 L1503.3 130.2 L1507.1 131.5 L1510.8 132.8 L1514.6 134.1 L1518.4 135.4 L1522.1 136.7 L1525.9 138.0 L1529.7 139.3 L1533.4 140.6 L1537.2 141.9 L1541.0 143.2 L1544.7 144.5 L1548.5 145.8 L1552.3 147.1 L1556.1 148.4 L1559.8 149.6 L1563.6 150.9 L1567.4 152.2 L1571.2 153.5 L1574.9 154.7 L1578.7 156.0 L1582.5 157.3 L1586.3 158.6 L1590.1 159.8 L1593.8 161.1 L1597.6 162.3 L1601.4 163.6 L1605.2 164.9 L1609.0 166.1 L1612.7 167.4 L1616.5 168.6 L1620.3 169.9 L1624.1 171.1 L1627.9 172.4 L1631.7 173.6 L1635.5 174.9 L1639.2 176.1 L1643.0 177.4 L1646.8 178.6 L1650.6 179.8 L1654.4 181.1 L1658.2 182.3 L1662.0 183.6 L1665.8 184.8 L1669.6 186.0 L1673.3 187.3 L1677.1 188.5 L1680.9 189.7 L1684.7 191.0 L1688.5 192.2 L1692.3 193.4 L1696.1 194.6 L1699.9 195.9 L1703.7 197.1 L1707.5 198.3 L1711.3 199.5 L1715.1 200.8 L1718.9 202.0 L1722.7 203.2 L1726.4 204.4 L1730.2 205.7 L1734.0 206.9 L1737.8 208.1 L1741.6 209.4 L1745.4 210.6 L1749.2 211.9 L1752.9 213.1 L1756.7 214.4 L1760.5 215.6 L1764.3 216.9 L1768.0 218.2 L1771.8 219.5 L1775.5 220.8 L1779.3 222.1 L1783.0 223.5 L1786.8 224.8 L1790.5 226.1 L1794.2 227.5 L1797.9 228.9 L1801.6 230.3 L1805.4 231.7 L1809.1 233.1 L1812.7 234.6 L1816.4 236.1 L1820.1 237.5 L1823.8 239.0 L1827.4 240.6 L1831.1 242.1 L1834.7 243.7 L1838.3 245.3 L1842.0 246.9 L1845.6 248.5 L1849.2 250.2 L1852.8 251.8 L1856.3 253.6 L1859.9 255.3 L1863.5 257.1 L1867.0 258.8 L1870.5 260.7 L1874.0 262.5 L1877.5 264.4 L1881.0 266.3 L1884.5 268.2 L1888.0 270.2 L1891.4 272.2 L1894.9 274.2 L1898.3 276.3 L1901.7 278.4 L1905.1 280.5 L1908.5 282.7 L1911.8 284.9 L1915.2 287.2 L1918.5 289.4 L1921.8 291.8 L1925.1 294.1 L1928.4 296.5" fill="none" stroke="rgba(0,0,0,0.35)" stroke-width="1.6"/>
<path d="M1100.4 -10.7 L1104.3 -9.7 L1108.1 -8.7 L1112.0 -7.7 L1115.9 -6.7 L1119.7 -5.6 L1123.6 -4.6 L1127.5 -3.5 L1131.3 -2.4 L1135.2 -1.4 L1139.0 -0.3 L1142.9 0.8 L1146.7 1.9 L1150.6 3.0 L1154.4 4.1 L1158.2 5.3 L1162.1 6.4 L1165.9 7.5 L1169.7 8.7 L1173.5 9.8 L1177.4 11.0 L1181.2 12.2 L1185.0 13.3 L1188.8 14.5 L1192.6 15.7 L1196.4 16.9 L1200.2 18.1 L1204.0 19.3 L1207.8 20.6 L1211.6 21.8 L1215.4 23.0 L1219.2 24.3 L1223.0 25.5 L1226.8 26.8 L1230.6 28.0 L1234.4 29.3 L1238.2 30.5 L1242.0 31.8 L1245.8 33.1 L1249.5 34.4 L1253.3 35.7 L1257.1 37.0 L1260.9 38.2 L1264.6 39.5 L1268.4 40.9 L1272.2 42.2 L1275.9 43.5 L1279.7 44.8 L1283.5 46.1 L1287.2 47.4 L1291.0 48.8 L1294.8 50.1 L1298.5 51.4 L1302.3 52.8 L1306.0 54.1 L1309.8 55.4 L1313.6 56.8 L1317.3 58.1 L1321.1 59.5 L1324.8 60.8 L1328.6 62.2 L1332.3 63.6 L1336.1 64.9 L1339.8 66.3 L1343.6 67.6 L1347.3 69.0 L1351.1 70.4 L1354.8 71.7 L1358.6 73.1 L1362.3 74.5 L1366.1 75.8 L1369.8 77.2 L1373.6 78.6 L1377.3 80.0 L1381.0 81.3 L1384.8 82.7 L1388.5 84.1 L1392.3 85.4 L1396.0 86.8 L1399.8 88.2 L1403.5 89.5 L1407.3 90.9 L1411.0 92.3 L1414.8 93.6 L1418.5 95.0 L1422.2 96.4 L1426.0 97.7 L1429.7 99.1 L1433.5 100.5 L1437.2 101.8 L1441.0 103.2 L1444.7 104.5 L1448.5 105.9 L1452.2 107.2 L1456.0 108.6 L1459.7 109.9 L1463.5 111.3 L1467.2 112.6 L1471.0 113.9 L1474.7 115.3 L1478.5 116.6 L1482.2 117.9 L1486.0 119.3 L1489.8 120.6 L1493.5 121.9 L1497.3 123.2 L1501.0 124.5 L1504.8 125.9 L1508.6 127.2 L1512.3 128.5 L1516.1 129.8 L1519.9 131.1 L1523.6 132.4 L1527.4 133.7 L1531.2 135.0 L1534.9 136.3 L1538.7 137.6 L1542.5 138.9 L1546.2 140.2 L1550.0 141.4 L1553.8 142.7 L1557.5 144.0 L1561.3 145.3 L1565.1 146.6 L1568.9 147.8 L1572.6 149.1 L1576.4 150.4 L1580.2 151.7 L1584.0 152.9 L1587.7 154.2 L1591.5 155.5 L1595.3 156.7 L1599.1 158.0 L1602.8 159.2 L1606.6 160.5 L1610.4 161.8 L1614.2 163.0 L1618.0 164.3 L1621.8 165.5 L1625.5 166.8 L1629.3 168.0 L1633.1 169.3 L1636.9 170.5 L1640.7 171.8 L1644.5 173.0 L1648.2 174.2 L1652.0 175.5 L1655.8 176.7 L1659.6 178.0 L1663.4 179.2 L1667.2 180.4 L1671.0 181.7 L1674.8 182.9 L1678.6 184.1 L1682.3 185.4 L1686.1 186.6 L1689.9 187.8 L1693.7 189.0 L1697.5 190.3 L1701.3 191.5 L1705.1 192.7 L1708.9 193.9 L1712.7 195.2 L1716.5 196.4 L1720.3 197.6 L1724.1 198.8 L1727.9 200.1 L1731.7 201.3 L1735.5 202.5 L1739.2 203.8 L1743.0 205.0 L1746.8 206.2 L1750.6 207.5 L1754.4 208.7 L1758.2 210.0 L1762.0 211.3 L1765.7 212.6 L1769.5 213.9 L1773.3 215.2 L1777.1 216.5 L1780.8 217.8 L1784.6 219.1 L1788.3 220.5 L1792.1 221.8 L1795.8 223.2 L1799.5 224.6 L1803.3 226.0 L1807.0 227.4 L1810.7 228.9 L1814.4 230.3 L1818.1 231.8 L1821.8 233.3 L1825.5 234.8 L1829.2 236.3 L1832.9 237.9 L1836.5 239.5 L1840.2 241.1 L1843.8 242.7 L1847.5 244.3 L1851.1 246.0 L1854.7 247.7 L1858.3 249.4 L1861.9 251.2 L1865.5 252.9 L1869.1 254.7 L1872.6 256.6 L1876.2 258.4 L1879.7 260.3 L1883.3 262.3 L1886.8 264.2 L1890.3 266.2 L1893.8 268.2 L1897.2 270.3 L1900.7 272.4 L1904.1 274.5 L1907.6 276.6 L1911.0 278.8 L1914.4 281.1 L1917.8 283.3 L1921.1 285.7 L1924.5 288.0 L1927.8 290.4 L1931.1 292.8" fill="none" stroke="rgba(0,0,0,0.3)" stroke-width="1.6"/>
<path d="M1099.8 -8.4 L1103.7 -7.4 L1107.5 -6.4 L1111.4 -5.4 L1115.3 -4.3 L1119.1 -3.3 L1123.0 -2.3 L1126.8 -1.2 L1130.7 -0.1 L1134.5 0.9 L1138.4 2.0 L1142.2 3.1 L1146.1 4.2 L1149.9 5.3 L1153.7 6.4 L1157.6 7.6 L1161.4 8.7 L1165.2 9.8 L1169.0 11.0 L1172.8 12.1 L1176.7 13.3 L1180.5 14.5 L1184.3 15.6 L1188.1 16.8 L1191.9 18.0 L1195.7 19.2 L1199.5 20.4 L1203.3 21.6 L1207.1 22.9 L1210.9 24.1 L1214.7 25.3 L1218.5 26.5 L1222.3 27.8 L1226.1 29.0 L1229.9 30.3 L1233.6 31.6 L1237.4 32.8 L1241.2 34.1 L1245.0 35.4 L1248.8 36.6 L1252.5 37.9 L1256.3 39.2 L1260.1 40.5 L1263.9 41.8 L1267.6 43.1 L1271.4 44.4 L1275.2 45.7 L1278.9 47.1 L1282.7 48.4 L1286.4 49.7 L1290.2 51.0 L1294.0 52.4 L1297.7 53.7 L1301.5 55.0 L1305.2 56.4 L1309.0 57.7 L1312.7 59.1 L1316.5 60.4 L1320.3 61.8 L1324.0 63.1 L1327.8 64.5 L1331.5 65.8 L1335.3 67.2 L1339.0 68.5 L1342.8 69.9 L1346.5 71.3 L1350.3 72.6 L1354.0 74.0 L1357.7 75.4 L1361.5 76.7 L1365.2 78.1 L1369.0 79.5 L1372.7 80.8 L1376.5 82.2 L1380.2 83.6 L1384.0 84.9 L1387.7 86.3 L1391.5 87.7 L1395.2 89.1 L1398.9 90.4 L1402.7 91.8 L1406.4 93.2 L1410.2 94.5 L1413.9 95.9 L1417.7 97.3 L1421.4 98.6 L1425.2 100.0 L1428.9 101.4 L1432.7 102.7 L1436.4 104.1 L1440.2 105.4 L1443.9 106.8 L1447.7 108.1 L1451.4 109.5 L1455.2 110.8 L1458.9 112.2 L1462.7 113.5 L1466.4 114.9 L1470.2 116.2 L1473.9 117.5 L1477.7 118.9 L1481.4 120.2 L1485.2 121.5 L1489.0 122.9 L1492.7 124.2 L1496.5 125.5 L1500.3 126.8 L1504.0 128.1 L1507.8 129.4 L1511.5 130.7 L1515.3 132.1 L1519.1 133.4 L1522.8 134.7 L1526.6 136.0 L1530.4 137.3 L1534.1 138.6 L1537.9 139.8 L1541.7 141.1 L1545.5 142.4 L1549.2 143.7 L1553.0 145.0 L1556.8 146.3 L1560.5 147.6 L1564.3 148.8 L1568.1 150.1 L1571.9 151.4 L1575.6 152.7 L1579.4 153.9 L1583.2 155.2 L1587.0 156.5 L1590.8 157.7 L1594.5 159.0 L1598.3 160.3 L1602.1 161.5 L1605.9 162.8 L1609.7 164.0 L1613.4 165.3 L1617.2 166.5 L1621.0 167.8 L1624.8 169.0 L1628.6 170.3 L1632.4 171.5 L1636.1 172.8 L1639.9 174.0 L1643.7 175.3 L1647.5 176.5 L1651.3 177.8 L1655.1 179.0 L1658.9 180.2 L1662.7 181.5 L1666.4 182.7 L1670.2 183.9 L1674.0 185.2 L1677.8 186.4 L1681.6 187.6 L1685.4 188.9 L1689.2 190.1 L1693.0 191.3 L1696.8 192.6 L1700.6 193.8 L1704.4 195.0 L1708.2 196.2 L1711.9 197.5 L1715.7 198.7 L1719.5 199.9 L1723.3 201.1 L1727.1 202.3 L1730.9 203.6 L1734.7 204.8 L1738.5 206.0 L1742.3 207.3 L1746.1 208.5 L1749.9 209.8 L1753.6 211.0 L1757.4 212.3 L1761.2 213.6 L1765.0 214.8 L1768.7 216.1 L1772.5 217.4 L1776.3 218.7 L1780.0 220.0 L1783.8 221.4 L1787.5 222.7 L1791.2 224.1 L1795.0 225.5 L1798.7 226.8 L1802.4 228.2 L1806.1 229.7 L1809.9 231.1 L1813.6 232.5 L1817.2 234.0 L1820.9 235.5 L1824.6 237.0 L1828.3 238.5 L1831.9 240.1 L1835.6 241.7 L1839.2 243.3 L1842.9 244.9 L1846.5 246.5 L1850.1 248.2 L1853.7 249.9 L1857.3 251.6 L1860.9 253.3 L1864.4 255.1 L1868.0 256.9 L1871.5 258.7 L1875.1 260.6 L1878.6 262.4 L1882.1 264.4 L1885.6 266.3 L1889.1 268.3 L1892.5 270.3 L1896.0 272.3 L1899.4 274.4 L1902.9 276.5 L1906.3 278.7 L1909.7 280.9 L1913.1 283.1 L1916.4 285.3 L1919.8 287.6 L1923.1 290.0 L1926.4 292.3 L1929.7 294.8" fill="none" stroke="#9a9a9a" stroke-width="2.8"/>
<path d="M1061.4 67.6 L1065.2 69.0 L1068.9 70.3 L1072.7 71.6 L1076.5 73.0 L1080.2 74.3 L1084.0 75.6 L1087.7 77.0 L1091.5 78.3 L1095.2 79.7 L1099.0 81.0 L1102.7 82.4 L1106.5 83.7 L1110.2 85.1 L1114.0 86.4 L1117.8 87.8 L1121.5 89.1 L1125.3 90.5 L1129.0 91.8 L1132.8 93.2 L1136.5 94.5 L1140.3 95.9 L1144.0 97.3 L1147.8 98.6 L1151.5 100.0 L1155.3 101.3 L1159.0 102.7 L1162.8 104.1 L1166.5 105.4 L1170.3 106.8 L1174.0 108.1 L1177.8 109.5 L1181.5 110.9 L1185.2 112.2 L1189.0 113.6 L1192.7 115.0 L1196.5 116.3 L1200.2 117.7 L1204.0 119.1 L1207.7 120.4 L1211.5 121.8 L1215.2 123.2 L1219.0 124.5 L1222.7 125.9 L1226.5 127.3 L1230.2 128.6 L1234.0 130.0 L1237.7 131.4 L1241.5 132.8 L1245.2 134.1 L1249.0 135.5 L1252.7 136.9 L1256.5 138.2 L1260.2 139.6 L1263.9 141.0 L1267.7 142.3 L1271.4 143.7 L1275.2 145.1 L1278.9 146.5 L1282.7 147.8 L1286.4 149.2 L1290.2 150.6 L1293.9 151.9 L1297.7 153.3 L1301.4 154.7 L1305.2 156.0 L1308.9 157.4 L1312.7 158.8 L1316.4 160.1 L1320.2 161.5 L1323.9 162.9 L1327.7 164.3 L1331.4 165.6 L1335.2 167.0 L1338.9 168.4 L1342.7 169.7 L1346.4 171.1 L1350.2 172.4 L1353.9 173.8 L1357.7 175.2 L1361.4 176.5 L1365.2 177.9 L1368.9 179.3 L1372.7 180.6 L1376.4 182.0 L1380.2 183.3 L1383.9 184.7 L1387.7 186.1 L1391.4 187.4 L1395.2 188.8 L1398.9 190.1 L1402.7 191.5 L1406.4 192.8 L1410.2 194.2 L1413.9 195.5 L1417.7 196.9 L1421.4 198.2 L1425.2 199.6 L1429.0 200.9 L1432.7 202.3 L1436.5 203.6 L1440.2 205.0 L1444.0 206.3 L1447.7 207.7 L1451.5 209.0 L1455.3 210.3 L1459.0 211.7 L1462.8 213.0 L1466.5 214.3 L1470.3 215.7 L1474.1 217.0 L1477.8 218.3 L1481.6 219.7 L1485.3 221.0 L1489.1 222.3 L1492.9 223.7 L1496.6 225.0 L1500.4 226.3 L1504.2 227.6 L1507.9 228.9 L1511.7 230.3 L1515.5 231.6 L1519.2 232.9 L1523.0 234.2 L1526.8 235.5 L1530.5 236.8 L1534.3 238.1 L1538.1 239.4 L1541.8 240.8 L1545.6 242.1 L1549.4 243.4 L1553.2 244.7 L1556.9 246.0 L1560.7 247.2 L1564.5 248.5 L1568.3 249.8 L1572.0 251.1 L1575.8 252.4 L1579.6 253.7 L1583.4 255.0 L1587.1 256.3 L1590.9 257.5 L1594.7 258.8 L1598.5 260.1 L1602.3 261.4 L1606.0 262.6 L1609.8 263.9 L1613.6 265.2 L1617.4 266.4 L1621.2 267.7 L1625.0 269.0 L1628.7 270.2 L1632.5 271.5 L1636.3 272.7 L1640.1 274.0 L1643.9 275.2 L1647.7 276.5 L1651.5 277.7 L1655.3 278.9 L1659.1 280.2 L1662.9 281.4 L1666.6 282.7 L1670.4 283.9 L1674.2 285.1 L1678.0 286.3 L1681.8 287.6 L1685.6 288.8 L1689.4 290.0 L1693.2 291.2 L1697.0 292.4 L1700.8 293.6 L1704.6 294.8 L1708.4 296.0 L1712.3 297.2 L1716.1 298.4 L1719.9 299.6 L1723.7 300.8 L1727.5 302.0 L1731.3 303.2 L1735.1 304.4 L1738.9 305.6 L1742.7 306.8 L1746.5 308.0 L1750.3 309.2 L1754.0 310.5 L1757.8 311.7 L1761.6 312.9 L1765.4 314.2 L1769.2 315.4 L1772.9 316.7 L1776.7 317.9 L1780.4 319.2 L1784.2 320.5 L1787.9 321.8 L1791.7 323.2 L1795.4 324.5 L1799.1 325.9 L1802.8 327.3 L1806.5 328.6 L1810.2 330.1 L1813.9 331.5 L1817.6 332.9 L1821.3 334.4 L1824.9 335.9 L1828.6 337.4 L1832.2 339.0 L1835.8 340.6 L1839.4 342.2 L1843.1 343.8 L1846.6 345.4 L1850.2 347.1 L1853.8 348.8 L1857.3 350.6 L1860.9 352.3 L1864.4 354.1 L1867.9 356.0 L1871.4 357.8 L1874.9 359.7 L1878.4 361.7 L1881.8 363.6 L1885.2 365.6 L1888.7 367.7 L1892.1 369.8 L1895.4 371.9 L1898.8 374.1 L1902.2 376.3 L1905.5 378.5 L1908.8 380.8 L1912.1 383.2 L1915.4 385.5 L1918.6 388.0 L1921.9 390.4 L1925.1 392.9 L1928.3 395.5" fill="none" stroke="rgba(0,0,0,0.35)" stroke-width="1.6"/>
<path d="M1063.0 63.3 L1066.7 64.6 L1070.5 66.0 L1074.2 67.3 L1078.0 68.6 L1081.8 70.0 L1085.5 71.3 L1089.3 72.7 L1093.0 74.0 L1096.8 75.3 L1100.5 76.7 L1104.3 78.0 L1108.0 79.4 L1111.8 80.7 L1115.6 82.1 L1119.3 83.4 L1123.1 84.8 L1126.8 86.1 L1130.6 87.5 L1134.3 88.9 L1138.1 90.2 L1141.8 91.6 L1145.6 92.9 L1149.3 94.3 L1153.1 95.6 L1156.8 97.0 L1160.6 98.4 L1164.3 99.7 L1168.1 101.1 L1171.8 102.5 L1175.6 103.8 L1179.3 105.2 L1183.1 106.5 L1186.8 107.9 L1190.6 109.3 L1194.3 110.6 L1198.1 112.0 L1201.8 113.4 L1205.6 114.7 L1209.3 116.1 L1213.1 117.5 L1216.8 118.8 L1220.6 120.2 L1224.3 121.6 L1228.1 123.0 L1231.8 124.3 L1235.5 125.7 L1239.3 127.1 L1243.0 128.4 L1246.8 129.8 L1250.5 131.2 L1254.3 132.5 L1258.0 133.9 L1261.8 135.3 L1265.5 136.7 L1269.3 138.0 L1273.0 139.4 L1276.8 140.8 L1280.5 142.1 L1284.3 143.5 L1288.0 144.9 L1291.8 146.2 L1295.5 147.6 L1299.3 149.0 L1303.0 150.4 L1306.7 151.7 L1310.5 153.1 L1314.2 154.5 L1318.0 155.8 L1321.7 157.2 L1325.5 158.6 L1329.2 159.9 L1333.0 161.3 L1336.7 162.7 L1340.5 164.0 L1344.2 165.4 L1348.0 166.8 L1351.7 168.1 L1355.5 169.5 L1359.2 170.8 L1363.0 172.2 L1366.7 173.6 L1370.5 174.9 L1374.2 176.3 L1378.0 177.7 L1381.7 179.0 L1385.5 180.4 L1389.2 181.7 L1393.0 183.1 L1396.7 184.4 L1400.5 185.8 L1404.2 187.1 L1408.0 188.5 L1411.7 189.9 L1415.5 191.2 L1419.2 192.6 L1423.0 193.9 L1426.8 195.3 L1430.5 196.6 L1434.3 197.9 L1438.0 199.3 L1441.8 200.6 L1445.5 202.0 L1449.3 203.3 L1453.0 204.7 L1456.8 206.0 L1460.6 207.3 L1464.3 208.7 L1468.1 210.0 L1471.8 211.3 L1475.6 212.7 L1479.4 214.0 L1483.1 215.3 L1486.9 216.7 L1490.6 218.0 L1494.4 219.3 L1498.2 220.6 L1501.9 222.0 L1505.7 223.3 L1509.4 224.6 L1513.2 225.9 L1517.0 227.2 L1520.7 228.6 L1524.5 229.9 L1528.3 231.2 L1532.0 232.5 L1535.8 233.8 L1539.6 235.1 L1543.3 236.4 L1547.1 237.7 L1550.9 239.0 L1554.7 240.3 L1558.4 241.6 L1562.2 242.9 L1566.0 244.2 L1569.7 245.5 L1573.5 246.8 L1577.3 248.1 L1581.1 249.3 L1584.8 250.6 L1588.6 251.9 L1592.4 253.2 L1596.2 254.5 L1599.9 255.7 L1603.7 257.0 L1607.5 258.3 L1611.3 259.5 L1615.1 260.8 L1618.8 262.1 L1622.6 263.3 L1626.4 264.6 L1630.2 265.8 L1634.0 267.1 L1637.8 268.4 L1641.5 269.6 L1645.3 270.9 L1649.1 272.1 L1652.9 273.3 L1656.7 274.6 L1660.5 275.8 L1664.3 277.0 L1668.1 278.3 L1671.9 279.5 L1675.7 280.7 L1679.4 282.0 L1683.2 283.2 L1687.0 284.4 L1690.8 285.6 L1694.6 286.8 L1698.4 288.0 L1702.2 289.2 L1706.0 290.4 L1709.8 291.6 L1713.6 292.8 L1717.4 294.0 L1721.2 295.2 L1725.0 296.4 L1728.9 297.6 L1732.7 298.8 L1736.5 300.0 L1740.3 301.2 L1744.1 302.4 L1747.9 303.6 L1751.7 304.9 L1755.5 306.1 L1759.3 307.3 L1763.0 308.5 L1766.8 309.8 L1770.6 311.0 L1774.4 312.3 L1778.2 313.6 L1781.9 314.9 L1785.7 316.2 L1789.5 317.5 L1793.2 318.8 L1797.0 320.2 L1800.7 321.6 L1804.4 322.9 L1808.2 324.3 L1811.9 325.8 L1815.6 327.2 L1819.3 328.7 L1823.0 330.2 L1826.7 331.7 L1830.4 333.2 L1834.0 334.8 L1837.7 336.3 L1841.3 338.0 L1845.0 339.6 L1848.6 341.3 L1852.2 343.0 L1855.8 344.7 L1859.4 346.4 L1863.0 348.2 L1866.5 350.0 L1870.1 351.9 L1873.6 353.8 L1877.1 355.7 L1880.6 357.7 L1884.1 359.7 L1887.6 361.7 L1891.0 363.8 L1894.5 365.9 L1897.9 368.0 L1901.3 370.2 L1904.7 372.4 L1908.1 374.7 L1911.4 377.0 L1914.8 379.4 L1918.1 381.8 L1921.4 384.3 L1924.7 386.8 L1927.9 389.3 L1931.2 391.9" fill="none" stroke="rgba(0,0,0,0.3)" stroke-width="1.6"/>
<path d="M1062.2 65.5 L1065.9 66.9 L1069.7 68.2 L1073.4 69.6 L1077.2 70.9 L1081.0 72.2 L1084.7 73.6 L1088.5 74.9 L1092.2 76.3 L1096.0 77.6 L1099.7 79.0 L1103.5 80.3 L1107.2 81.6 L1111.0 83.0 L1114.7 84.3 L1118.5 85.7 L1122.2 87.1 L1126.0 88.4 L1129.8 89.8 L1133.5 91.1 L1137.3 92.5 L1141.0 93.8 L1144.8 95.2 L1148.5 96.5 L1152.3 97.9 L1156.0 99.3 L1159.8 100.6 L1163.5 102.0 L1167.3 103.3 L1171.0 104.7 L1174.8 106.1 L1178.5 107.4 L1182.3 108.8 L1186.0 110.2 L1189.8 111.5 L1193.5 112.9 L1197.2 114.3 L1201.0 115.6 L1204.7 117.0 L1208.5 118.4 L1212.2 119.7 L1216.0 121.1 L1219.7 122.5 L1223.5 123.8 L1227.2 125.2 L1231.0 126.6 L1234.7 127.9 L1238.5 129.3 L1242.2 130.7 L1246.0 132.1 L1249.7 133.4 L1253.5 134.8 L1257.2 136.2 L1261.0 137.5 L1264.7 138.9 L1268.4 140.3 L1272.2 141.6 L1275.9 143.0 L1279.7 144.4 L1283.4 145.8 L1287.2 147.1 L1290.9 148.5 L1294.7 149.9 L1298.4 151.2 L1302.2 152.6 L1305.9 154.0 L1309.7 155.3 L1313.4 156.7 L1317.2 158.1 L1320.9 159.5 L1324.7 160.8 L1328.4 162.2 L1332.2 163.6 L1335.9 164.9 L1339.7 166.3 L1343.4 167.6 L1347.2 169.0 L1350.9 170.4 L1354.7 171.7 L1358.4 173.1 L1362.2 174.5 L1365.9 175.8 L1369.7 177.2 L1373.4 178.6 L1377.2 179.9 L1380.9 181.3 L1384.7 182.6 L1388.4 184.0 L1392.2 185.3 L1395.9 186.7 L1399.7 188.1 L1403.4 189.4 L1407.2 190.8 L1410.9 192.1 L1414.7 193.5 L1418.4 194.8 L1422.2 196.2 L1425.9 197.5 L1429.7 198.9 L1433.5 200.2 L1437.2 201.6 L1441.0 202.9 L1444.7 204.2 L1448.5 205.6 L1452.2 206.9 L1456.0 208.3 L1459.8 209.6 L1463.5 210.9 L1467.3 212.3 L1471.0 213.6 L1474.8 214.9 L1478.6 216.3 L1482.3 217.6 L1486.1 218.9 L1489.8 220.3 L1493.6 221.6 L1497.4 222.9 L1501.1 224.2 L1504.9 225.5 L1508.7 226.9 L1512.4 228.2 L1516.2 229.5 L1520.0 230.8 L1523.7 232.1 L1527.5 233.4 L1531.3 234.8 L1535.0 236.1 L1538.8 237.4 L1542.6 238.7 L1546.3 240.0 L1550.1 241.3 L1553.9 242.6 L1557.6 243.9 L1561.4 245.2 L1565.2 246.5 L1569.0 247.8 L1572.7 249.0 L1576.5 250.3 L1580.3 251.6 L1584.1 252.9 L1587.8 254.2 L1591.6 255.5 L1595.4 256.7 L1599.2 258.0 L1603.0 259.3 L1606.7 260.6 L1610.5 261.8 L1614.3 263.1 L1618.1 264.4 L1621.9 265.6 L1625.6 266.9 L1629.4 268.1 L1633.2 269.4 L1637.0 270.6 L1640.8 271.9 L1644.6 273.1 L1648.4 274.4 L1652.2 275.6 L1656.0 276.9 L1659.7 278.1 L1663.5 279.3 L1667.3 280.6 L1671.1 281.8 L1674.9 283.0 L1678.7 284.2 L1682.5 285.5 L1686.3 286.7 L1690.1 287.9 L1693.9 289.1 L1697.7 290.3 L1701.5 291.5 L1705.3 292.7 L1709.1 293.9 L1712.9 295.1 L1716.7 296.3 L1720.5 297.5 L1724.3 298.7 L1728.1 299.9 L1731.9 301.1 L1735.7 302.3 L1739.5 303.5 L1743.3 304.7 L1747.1 305.9 L1750.9 307.1 L1754.7 308.4 L1758.5 309.6 L1762.3 310.8 L1766.1 312.1 L1769.9 313.3 L1773.6 314.6 L1777.4 315.9 L1781.2 317.2 L1784.9 318.5 L1788.7 319.8 L1792.4 321.1 L1796.2 322.4 L1799.9 323.8 L1803.6 325.2 L1807.3 326.6 L1811.0 328.0 L1814.7 329.4 L1818.4 330.9 L1822.1 332.4 L1825.8 333.9 L1829.4 335.4 L1833.1 337.0 L1836.7 338.5 L1840.3 340.1 L1844.0 341.8 L1847.6 343.4 L1851.2 345.1 L1854.7 346.8 L1858.3 348.6 L1861.9 350.4 L1865.4 352.2 L1868.9 354.0 L1872.5 355.9 L1876.0 357.8 L1879.4 359.7 L1882.9 361.7 L1886.4 363.8 L1889.8 365.8 L1893.2 367.9 L1896.6 370.0 L1900.0 372.2 L1903.4 374.4 L1906.7 376.7 L1910.1 379.0 L1913.4 381.4 L1916.7 383.8 L1920.0 386.2 L1923.2 388.7 L1926.5 391.2 L1929.7 393.8" fill="none" stroke="#9a9a9a" stroke-width="2.8"/>
<path d="M1559.4 356.5 L1563.0 358.1 L1566.7 359.7 L1570.3 361.3 L1574.0 362.8 L1577.7 364.3 L1581.3 365.9 L1585.0 367.4 L1588.7 368.9 L1592.4 370.4 L1596.1 371.8 L1599.8 373.3 L1603.5 374.7 L1607.3 376.2 L1611.0 377.6 L1614.7 379.1 L1618.4 380.5 L1622.2 381.9 L1625.9 383.3 L1629.6 384.7 L1633.4 386.1 L1637.1 387.4 L1640.9 388.8 L1644.6 390.2 L1648.4 391.6 L1652.1 392.9 L1655.9 394.3 L1659.6 395.6 L1663.4 397.0 L1667.2 398.3 L1670.9 399.7 L1674.7 401.0 L1678.5 402.3 L1682.2 403.7 L1686.0 405.0 L1689.8 406.3 L1693.5 407.7 L1697.3 409.0 L1701.1 410.3 L1704.8 411.7 L1708.6 413.0 L1712.4 414.3 L1716.1 415.7 L1719.9 417.0 L1723.6 418.4 L1727.4 419.7 L1731.1 421.1 L1734.9 422.4 L1738.7 423.8 L1742.4 425.1 L1746.1 426.5 L1749.9 427.9 L1753.6 429.3 L1757.4 430.6 L1761.1 432.0 L1764.8 433.4 L1768.6 434.8 L1772.3 436.3 L1776.0 437.7 L1779.7 439.1 L1783.4 440.6 L1787.1 442.0 L1790.8 443.5 L1794.5 444.9 L1798.2 446.4 L1801.9 447.9 L1805.5 449.4 L1809.2 450.9 L1812.9 452.5 L1816.5 454.0 L1820.2 455.6 L1823.8 457.1 L1827.5 458.7 L1831.1 460.3 L1834.7 461.9 L1838.3 463.6 L1841.9 465.2 L1845.5 466.9 L1849.1 468.6 L1852.7 470.3 L1856.3 472.0 L1859.8 473.7 L1863.4 475.4 L1866.9 477.2 L1870.5 479.0 L1874.0 480.8 L1877.5 482.6 L1881.0 484.5 L1884.5 486.3 L1888.0 488.2 L1891.5 490.1 L1894.9 492.0 L1898.4 494.0 L1901.8 496.0 L1905.3 498.0 L1908.7 500.0 L1912.1 502.0 L1915.5 504.1 L1918.9 506.2 L1922.2 508.3 L1925.6 510.4 L1928.9 512.6" fill="none" stroke="rgba(0,0,0,0.35)" stroke-width="1.6"/>
<path d="M1561.2 352.3 L1564.8 353.9 L1568.5 355.5 L1572.1 357.0 L1575.8 358.6 L1579.4 360.1 L1583.1 361.6 L1586.8 363.1 L1590.4 364.6 L1594.1 366.1 L1597.8 367.6 L1601.5 369.0 L1605.2 370.5 L1608.9 371.9 L1612.6 373.3 L1616.3 374.8 L1620.1 376.2 L1623.8 377.6 L1627.5 379.0 L1631.2 380.4 L1635.0 381.8 L1638.7 383.1 L1642.5 384.5 L1646.2 385.9 L1649.9 387.2 L1653.7 388.6 L1657.4 389.9 L1661.2 391.3 L1665.0 392.6 L1668.7 394.0 L1672.5 395.3 L1676.2 396.7 L1680.0 398.0 L1683.8 399.3 L1687.5 400.7 L1691.3 402.0 L1695.1 403.3 L1698.8 404.7 L1702.6 406.0 L1706.4 407.3 L1710.1 408.7 L1713.9 410.0 L1717.7 411.3 L1721.4 412.7 L1725.2 414.0 L1728.9 415.4 L1732.7 416.7 L1736.5 418.1 L1740.2 419.4 L1744.0 420.8 L1747.7 422.2 L1751.5 423.6 L1755.2 424.9 L1759.0 426.3 L1762.7 427.7 L1766.5 429.1 L1770.2 430.5 L1773.9 432.0 L1777.6 433.4 L1781.4 434.8 L1785.1 436.3 L1788.8 437.7 L1792.5 439.2 L1796.2 440.7 L1799.9 442.2 L1803.6 443.7 L1807.3 445.2 L1811.0 446.7 L1814.7 448.2 L1818.3 449.8 L1822.0 451.4 L1825.7 452.9 L1829.3 454.5 L1833.0 456.1 L1836.6 457.7 L1840.2 459.4 L1843.9 461.0 L1847.5 462.7 L1851.1 464.4 L1854.7 466.1 L1858.3 467.8 L1861.9 469.6 L1865.4 471.3 L1869.0 473.1 L1872.5 474.9 L1876.1 476.7 L1879.6 478.5 L1883.2 480.4 L1886.7 482.3 L1890.2 484.2 L1893.7 486.1 L1897.2 488.0 L1900.7 490.0 L1904.1 492.0 L1907.6 494.0 L1911.0 496.0 L1914.5 498.1 L1917.9 500.2 L1921.3 502.3 L1924.7 504.4 L1928.1 506.6 L1931.4 508.7" fill="none" stroke="rgba(0,0,0,0.3)" stroke-width="1.6"/>
<path d="M1560.2 354.5 L1563.9 356.1 L1567.5 357.7 L1571.2 359.2 L1574.8 360.8 L1578.5 362.3 L1582.2 363.8 L1585.9 365.3 L1589.5 366.8 L1593.2 368.3 L1596.9 369.8 L1600.6 371.2 L1604.3 372.7 L1608.0 374.1 L1611.8 375.6 L1615.5 377.0 L1619.2 378.4 L1622.9 379.8 L1626.7 381.2 L1630.4 382.6 L1634.1 384.0 L1637.9 385.4 L1641.6 386.8 L1645.4 388.1 L1649.1 389.5 L1652.9 390.8 L1656.6 392.2 L1660.4 393.6 L1664.1 394.9 L1667.9 396.2 L1671.7 397.6 L1675.4 398.9 L1679.2 400.3 L1683.0 401.6 L1686.7 402.9 L1690.5 404.3 L1694.3 405.6 L1698.0 406.9 L1701.8 408.3 L1705.6 409.6 L1709.3 410.9 L1713.1 412.3 L1716.9 413.6 L1720.6 414.9 L1724.4 416.3 L1728.1 417.6 L1731.9 419.0 L1735.7 420.3 L1739.4 421.7 L1743.2 423.1 L1746.9 424.4 L1750.7 425.8 L1754.4 427.2 L1758.1 428.6 L1761.9 430.0 L1765.6 431.4 L1769.3 432.8 L1773.1 434.2 L1776.8 435.6 L1780.5 437.1 L1784.2 438.5 L1787.9 440.0 L1791.6 441.4 L1795.3 442.9 L1799.0 444.4 L1802.7 445.9 L1806.4 447.4 L1810.1 448.9 L1813.7 450.4 L1817.4 452.0 L1821.1 453.6 L1824.7 455.1 L1828.3 456.7 L1832.0 458.3 L1835.6 459.9 L1839.2 461.6 L1842.8 463.2 L1846.5 464.9 L1850.1 466.6 L1853.6 468.3 L1857.2 470.0 L1860.8 471.7 L1864.4 473.5 L1867.9 475.2 L1871.5 477.0 L1875.0 478.8 L1878.5 480.7 L1882.0 482.5 L1885.5 484.4 L1889.0 486.3 L1892.5 488.2 L1896.0 490.1 L1899.5 492.1 L1902.9 494.1 L1906.4 496.1 L1909.8 498.1 L1913.2 500.1 L1916.6 502.2 L1920.0 504.3 L1923.4 506.4 L1926.8 508.6 L1930.1 510.8" fill="none" stroke="#868686" stroke-width="2.0"/>

<path d="M 1422 492 L 1681 595 C 1760 630, 1812 690, 1817 750 L 1728 984 L 1714 1012 L 1440 900 C 1380 870, 1350 820, 1355 760 Z" fill="rgba(0,0,0,0.3)" filter="url(#sh8)" transform="translate(-4,12)"/>
<path d="M 1422 492 L 1681 595 C 1765 630, 1817 690, 1817 750 Q 1817 770, 1809 782 L 1728 981 L 1714 1010 L 1440 898 C 1385 872, 1352 825, 1356 765 Z" fill="#575757"/>
<path d="M 1714 1010 L 1440 898 L 1443 893 L 1716 1005 Z" fill="#2a2a2a"/>
<path d="M 1422 492 L 1681 595 C 1765 630, 1817 690, 1817 750 Q 1817 770, 1809 782 L 1728 981 L 1460 867 C 1400 842, 1365 800, 1370 740 Z" fill="#b4b4b4"/>
<path d="M 1425 497 L 1680 599 C 1761 634, 1812 692, 1812 750 Q 1812 769, 1804 781 L 1725 975 L 1462 862 C 1404 838, 1370 797, 1375 742 Z" fill="#ededed"/>
<path d="M 1429 501 L 1608 573 L 1681 603 C 1731 631, 1762 653, 1778 681 C 1784 700, 1787 720, 1786 741 L 1725 901 C 1720 912, 1712 916, 1703 914 L 1480 818 C 1430 796, 1408 760, 1412 720 Z" fill="url(#lg1)"/>
<path d="M 1505 548 L 1545 563 L 1492 700 C 1486 716, 1494 738, 1512 750 L 1608 794 L 1608 829 L 1498 790 C 1458 774, 1440 744, 1450 708 Z" fill="#e6e6e6"/>
<path d="M 1518 728 L 1555 640 C 1565 622, 1590 620, 1624 630 C 1640 636, 1658 650, 1669 663 C 1690 664, 1715 676, 1741 697 C 1752 708, 1758 720, 1760 741 L 1731 807 L 1695 790 L 1719 725 C 1721 712, 1712 700, 1700 698 C 1690 695, 1680 697, 1675 703 L 1646 766 L 1612 747 L 1638 685 C 1638 675, 1630 664, 1620 661 C 1605 655, 1590 660, 1585 670 L 1552 742 Z" fill="#ececec"/>
<path d="M 1608 794 L 1661 804 C 1675 806, 1688 800, 1695 790 L 1731 807 C 1729 820, 1722 832, 1710 843 C 1700 850, 1690 851, 1680 849 L 1608 829 L 1500 790 L 1510 760 Z" fill="#aad98c"/>

</svg>
<div id="disks" class="r">
 <div class="tb r"></div>
 <div class="side r"></div>
 <div class="sel r"></div>
 <div class="vol r"><div class="volw r"><div class="sep" style="left:59px"></div><div class="sep" style="left:123px"></div><div class="sep" style="left:199px"></div></div></div>
 <div class="btns r"><div class="r" style="left:35px;top:0;width:1px;height:31px;background:#cfcfcf"></div></div>
</div>
<div class="term" style="left:953px;top:112px">
 <div class="hd"></div>
 <div class="bd"></div>
 <div class="sb"></div>
 <pre><span class="g">mint@mint</span>:<span class="bl">~</span>$ sudo df
Filesystem     1K-blocks    Used Available Use% Mounted on
udev             3919056       0   3919056   0% /dev
tmpfs             786752    9608    777144   2% /run
/dev/sdb1        1654784 1654784         0 100% /lib/live/mount/medium
/dev/loop0       1512832 1512832         0 100% /lib/live/mount/rootfs/filesyste
m.squashfs
tmpfs            3933740       0   3933740   0% /lib/live/mount/overlay
overlay          3933740   13360   3920380   1% /
tmpfs            3933740       0   3933740   0% /dev/shm
tmpfs               5120       4      5116   1% /run/lock
tmpfs            3933740       0   3933740   0% /sys/fs/cgroup
tmpfs            3933740       4   3933736   1% /tmp
tmpfs             786748      28    786720   1% /run/user/1000
<span class="g">mint@mint</span>:<span class="bl">~</span>$ <span class="cur"> </span></pre>
</div>
<div class="term" style="left:954px;top:542px">
 <div class="hd"></div>
 <div class="bd"></div>
 <div class="sb"></div>
 <pre><span class="g">mint@mint</span>:<span class="bl">~</span>$ lsblk
NAME   MAJ:MIN RM   SIZE RO TYPE MOUNTPOINT
loop0    7:0    0   1.5G  1 loop /lib/live/mount/rootfs/filesystem.squashfs
sda      8:0    0 465.8G  0 disk 
├─sda1   8:1    0   7.9G  0 part 
├─sda2   8:2    0    28G  0 part 
└─sda3   8:3    0 429.9G  0 part 
sdb      8:16   1   7.2G  0 disk 
├─sdb1   8:17   1   1.6G  0 part /lib/live/mount/medium
└─sdb2   8:18   1   2.3M  0 part 
<span class="g">mint@mint</span>:<span class="bl">~</span>$ <span class="cur"> </span></pre>
</div>
<svg width="1914" height="1188" viewBox="0 0 1914 1188" font-family="Liberation Sans">
<!-- disks header icons -->
<rect x="123.5" y="133.5" width="15" height="15" rx="3" fill="none" stroke="#8a8a8a" stroke-width="1"/>
<circle cx="131" cy="138.6" r="3.4" fill="none" stroke="#8c8c8c" stroke-width="1.8"/>
<circle cx="131" cy="138.6" r="0.9" fill="#8c8c8c"/>
<path d="M130.5 140 L127 145.5" stroke="#a2a2a2" stroke-width="2.4" stroke-linecap="round"/>
<rect x="776" y="136" width="10" height="2" fill="#6e6666"/>
<rect x="776" y="140" width="10" height="2" fill="#6e6666"/>
<rect x="776" y="144" width="10" height="2" fill="#6e6666"/>
<rect x="806" y="123" width="1" height="36" fill="#bcbcbc"/>
<rect x="823" y="140" width="6" height="2" fill="#a8a8b0"/>
<path d="M857 138 h4 v4 z M855 140 v4 h4 z" fill="#a8a8b0"/>
<circle cx="890" cy="140.7" r="7" fill="#adadb3"/>
<path d="M887 137.7 l6 6 M893 137.7 l-6 6" stroke="#fff" stroke-width="1.8"/>
<!-- terminal 1 header icons -->
<rect x="1527" y="124" width="6" height="2" fill="#acacac"/>
<path d="M1559 122 h4 v4 z M1557 124 v4 h4 z" fill="#acacac"/>
<circle cx="1590" cy="125" r="6.8" fill="#b3b3b3"/>
<path d="M1587 122 l6 6 M1593 122 l-6 6" stroke="#fff" stroke-width="1.8"/>
<!-- terminal 2 header icons -->
<rect x="1528" y="554" width="6" height="2" fill="#8f8f8f"/>
<path d="M1560 552 h4 v4 z M1558 554 v4 h4 z" fill="#8f8f8f"/>
<circle cx="1591" cy="555" r="7" fill="#98b97b"/>
<path d="M1588 552 l6 6 M1594 552 l-6 6" stroke="#fff" stroke-width="1.8"/>
<!-- sidebar icons -->
<rect x="116.5" y="169.5" width="23" height="29" rx="1" fill="#e3e3e7" stroke="#758566" stroke-width="1"/>
<path d="M136 172.5 L121 187 A 7.3 7.3 0 0 0 135.6 187.5 Z" fill="#efeff2" stroke="#c6c6cc" stroke-width="0.8"/>
<circle cx="128.3" cy="187" r="3.4" fill="#dadade" stroke="#cdcdd2" stroke-width="0.6"/>
<g fill="#6a6a6a"><circle cx="119" cy="172" r="0.6"/><circle cx="137.4" cy="172" r="0.6"/><circle cx="119" cy="196" r="0.6"/><circle cx="137.4" cy="196" r="0.6"/><circle cx="119" cy="184" r="0.5"/><circle cx="137.4" cy="184" r="0.5"/></g>
<defs><linearGradient id="drv" x1="0" y1="0" x2="0" y2="1"><stop offset="0" stop-color="#d8d8d8"/><stop offset="0.6" stop-color="#ececec"/><stop offset="1" stop-color="#cfcfcf"/></linearGradient></defs>
<path d="M117.5 213.5 h21 l4 9.5 v3.5 q0 1.3 -1.3 1.3 h-26.4 q-1.3 0 -1.3 -1.3 v-3.5 z" fill="url(#drv)" stroke="#6c6c6c" stroke-width="1"/>
<rect x="116" y="223.4" width="24.5" height="1.4" fill="#262626"/>
<path d="M117.5 250.5 h21 l4 9.5 v3.5 q0 1.3 -1.3 1.3 h-26.4 q-1.3 0 -1.3 -1.3 v-3.5 z" fill="url(#drv)" stroke="#6c6c6c" stroke-width="1"/>
<rect x="116" y="260.4" width="24.5" height="1.4" fill="#262626"/>
<!-- plus & gear -->
<rect x="396" y="478" width="10" height="1.8" fill="#333"/>
<rect x="400" y="474" width="1.8" height="10" fill="#333"/>
<path d="M444.98 476.17 L444.98 477.03 L443.25 477.68 L443.04 478.25 L443.95 479.86 L443.40 480.52 L441.66 479.90 L441.13 480.21 L440.79 482.02 L439.95 482.17 L439.01 480.58 L438.41 480.47 L436.98 481.65 L436.24 481.22 L436.54 479.40 L436.15 478.93 L434.30 478.91 L434.01 478.11 L435.41 476.91 L435.41 476.29 L434.01 475.09 L434.30 474.29 L436.15 474.27 L436.54 473.80 L436.24 471.98 L436.98 471.55 L438.41 472.73 L439.01 472.62 L439.95 471.03 L440.79 471.18 L441.13 472.99 L441.66 473.30 L443.40 472.68 L443.95 473.34 L443.04 474.95 L443.25 475.52 Z M 441.40 476.60 A 2.0 2.0 0 1 0 437.40 476.60 A 2.0 2.0 0 1 0 441.40 476.60 Z" fill="#333" fill-rule="evenodd"/>
<path d="M436.89 482.08 L436.89 482.72 L435.68 483.18 L435.51 483.60 L436.03 484.78 L435.58 485.23 L434.40 484.71 L433.98 484.88 L433.52 486.09 L432.88 486.09 L432.42 484.88 L432.00 484.71 L430.82 485.23 L430.37 484.78 L430.89 483.60 L430.72 483.18 L429.51 482.72 L429.51 482.08 L430.72 481.62 L430.89 481.20 L430.37 480.02 L430.82 479.57 L432.00 480.09 L432.42 479.92 L432.88 478.71 L433.52 478.71 L433.98 479.92 L434.40 480.09 L435.58 479.57 L436.03 480.02 L435.51 481.20 L435.68 481.62 Z M 434.60 482.40 A 1.4 1.4 0 1 0 431.80 482.40 A 1.4 1.4 0 1 0 434.60 482.40 Z" fill="#444" fill-rule="evenodd"/>
<text x="476.5" y="137.8" textLength="67.6" lengthAdjust="spacingAndGlyphs" font-size="12.5" font-weight="400" fill="#7d7d7d">500 GB Disk</text>
<text x="489" y="152.7" textLength="41" lengthAdjust="spacingAndGlyphs" font-size="10.5" font-weight="400" fill="#a6a6a6">/dev/sda</text>
<text x="146.3" y="181.9" textLength="68.2" lengthAdjust="spacingAndGlyphs" font-size="12.5" font-weight="400" fill="#f4f7f0">500 GB Disk</text>
<text x="146.3" y="197" textLength="162" lengthAdjust="spacingAndGlyphs" font-size="11" font-weight="400" fill="#f4f7f0">Samsung SSD 850 EVO M.2 500GB</text>
<text x="146.3" y="218.9" textLength="68.8" lengthAdjust="spacingAndGlyphs" font-size="12.5" font-weight="400" fill="#3a3a3a">7.8 GB Drive</text>
<text x="146.3" y="233.9" textLength="110.6" lengthAdjust="spacingAndGlyphs" font-size="11" font-weight="400" fill="#4a4a4a">TOSHIBA TransMemory</text>
<text x="146.3" y="255.9" textLength="107" lengthAdjust="spacingAndGlyphs" font-size="12.5" font-weight="400" fill="#3a3a3a">1.5 GB Loop Device</text>
<text x="146.3" y="270.5" textLength="205.3" lengthAdjust="spacingAndGlyphs" font-size="11" font-weight="400" fill="#4a4a4a">/lib/live/mount/medi.../filesystem.squashfs</text>
<text x="413.3" y="188.9" textLength="34.1" lengthAdjust="spacingAndGlyphs" font-size="12.5" font-weight="400" fill="#8a8a8a">Model</text>
<text x="425.4" y="213.9" textLength="22" lengthAdjust="spacingAndGlyphs" font-size="12.5" font-weight="400" fill="#8a8a8a">Size</text>
<text x="384.4" y="238.6" textLength="63" lengthAdjust="spacingAndGlyphs" font-size="12.5" font-weight="400" fill="#8a8a8a">Partitioning</text>
<text x="367.2" y="263.6" textLength="80.2" lengthAdjust="spacingAndGlyphs" font-size="12.5" font-weight="400" fill="#8a8a8a">Serial Number</text>
<text x="380.3" y="288.9" textLength="67.1" lengthAdjust="spacingAndGlyphs" font-size="12.5" font-weight="400" fill="#8a8a8a">Assessment</text>
<text x="458.3" y="188.9" textLength="266.2" lengthAdjust="spacingAndGlyphs" font-size="12.5" font-weight="400" fill="#424242">Samsung SSD 850 EVO M.2 500GB (EMT21B6Q)</text>
<text x="458.3" y="213.9" textLength="176.9" lengthAdjust="spacingAndGlyphs" font-size="12.5" font-weight="400" fill="#424242">500 GB (500,107,862,016 bytes)</text>
<text x="458.3" y="238.6" textLength="110.6" lengthAdjust="spacingAndGlyphs" font-size="12.5" font-weight="400" fill="#424242">Master Boot Record</text>
<text x="458.3" y="263.6" textLength="110.2" lengthAdjust="spacingAndGlyphs" font-size="12.5" font-weight="400" fill="#424242">S24CNXAH107172Y</text>
<text x="458.3" y="288.9" textLength="140.2" lengthAdjust="spacingAndGlyphs" font-size="12.5" font-weight="400" fill="#424242">Disk is OK (42° C / 108° F)</text>
<text x="367.2" y="321.7" textLength="51.3" lengthAdjust="spacingAndGlyphs" font-size="12.5" font-weight="700" fill="#3a3a3a">Volumes</text>
<text x="406.2" y="516.9" textLength="22.2" lengthAdjust="spacingAndGlyphs" font-size="12.5" font-weight="400" fill="#8a8a8a">Size</text>
<text x="391.5" y="541.6" textLength="36.9" lengthAdjust="spacingAndGlyphs" font-size="12.5" font-weight="400" fill="#8a8a8a">Device</text>
<text x="379.8" y="566.4" textLength="48.6" lengthAdjust="spacingAndGlyphs" font-size="12.5" font-weight="400" fill="#8a8a8a">Contents</text>
<text x="439" y="516.9" textLength="137.3" lengthAdjust="spacingAndGlyphs" font-size="12.5" font-weight="400" fill="#424242">2.1 MB (2,097,152 bytes)</text>
<text x="439" y="541.6" textLength="47.1" lengthAdjust="spacingAndGlyphs" font-size="12.5" font-weight="400" fill="#424242">/dev/sda</text>
<text x="439" y="566.4" textLength="103.4" lengthAdjust="spacingAndGlyphs" font-size="12.5" font-weight="400" fill="#424242">Unallocated Space</text>
<text x="384.1" y="396.2" textLength="51.4" lengthAdjust="spacingAndGlyphs" font-size="10" font-weight="400" fill="#505050">Free Space</text>
<text x="394.2" y="405.8" textLength="31.9" lengthAdjust="spacingAndGlyphs" font-size="10" font-weight="400" fill="#505050">2.1 MB</text>
<text x="459.4" y="391" textLength="24" lengthAdjust="spacingAndGlyphs" font-size="10" font-weight="400" fill="#505050">Swap</text>
<text x="447.3" y="400.8" textLength="48.8" lengthAdjust="spacingAndGlyphs" font-size="10" font-weight="400" fill="#505050">Partition 1</text>
<text x="442" y="411" textLength="58.3" lengthAdjust="spacingAndGlyphs" font-size="10" font-weight="400" fill="#505050">8.5 GB Swap</text>
<text x="517.3" y="391" textLength="49.2" lengthAdjust="spacingAndGlyphs" font-size="10" font-weight="400" fill="#505050">Filesystem</text>
<text x="517.3" y="400.8" textLength="49" lengthAdjust="spacingAndGlyphs" font-size="10" font-weight="400" fill="#505050">Partition 2</text>
<text x="516.2" y="411" textLength="51" lengthAdjust="spacingAndGlyphs" font-size="10" font-weight="400" fill="#505050">30 GB Ext4</text>
<text x="713.9" y="391" textLength="49.2" lengthAdjust="spacingAndGlyphs" font-size="10" font-weight="400" fill="#505050">Filesystem</text>
<text x="714.0" y="400.8" textLength="49" lengthAdjust="spacingAndGlyphs" font-size="10" font-weight="400" fill="#505050">Partition 3</text>
<text x="710.0" y="411" textLength="57" lengthAdjust="spacingAndGlyphs" font-size="10" font-weight="400" fill="#505050">462 GB Ext4</text>
<text x="1235.4" y="130.8" textLength="89.6" lengthAdjust="spacingAndGlyphs" font-size="12.5" font-weight="700" fill="#8b8b8b">mint@mint: ~</text>
<text x="961.3" y="158.1" textLength="18" lengthAdjust="spacingAndGlyphs" font-size="12.5" font-weight="400" fill="#858585">File</text>
<text x="996.4" y="158.1" textLength="20.5" lengthAdjust="spacingAndGlyphs" font-size="12.5" font-weight="400" fill="#858585">Edit</text>
<text x="1032.7" y="158.1" textLength="26.6" lengthAdjust="spacingAndGlyphs" font-size="12.5" font-weight="400" fill="#858585">View</text>
<text x="1075.1" y="158.1" textLength="38.8" lengthAdjust="spacingAndGlyphs" font-size="12.5" font-weight="400" fill="#858585">Search</text>
<text x="1130" y="158.1" textLength="49.7" lengthAdjust="spacingAndGlyphs" font-size="12.5" font-weight="400" fill="#858585">Terminal</text>
<text x="1196.1" y="158.1" textLength="26.1" lengthAdjust="spacingAndGlyphs" font-size="12.5" font-weight="400" fill="#858585">Help</text>
<text x="1236.4" y="560.8" textLength="89.6" lengthAdjust="spacingAndGlyphs" font-size="12.5" font-weight="700" fill="#8b8b8b">mint@mint: ~</text>
<text x="962.3" y="588.1" textLength="18" lengthAdjust="spacingAndGlyphs" font-size="12.5" font-weight="400" fill="#858585">File</text>
<text x="997.4" y="588.1" textLength="20.5" lengthAdjust="spacingAndGlyphs" font-size="12.5" font-weight="400" fill="#858585">Edit</text>
<text x="1033.7" y="588.1" textLength="26.6" lengthAdjust="spacingAndGlyphs" font-size="12.5" font-weight="400" fill="#858585">View</text>
<text x="1076.1" y="588.1" textLength="38.8" lengthAdjust="spacingAndGlyphs" font-size="12.5" font-weight="400" fill="#858585">Search</text>
<text x="1131" y="588.1" textLength="49.7" lengthAdjust="spacingAndGlyphs" font-size="12.5" font-weight="400" fill="#858585">Terminal</text>
<text x="1197.1" y="588.1" textLength="26.1" lengthAdjust="spacingAndGlyphs" font-size="12.5" font-weight="400" fill="#858585">Help</text>
</svg>
</body></html>
